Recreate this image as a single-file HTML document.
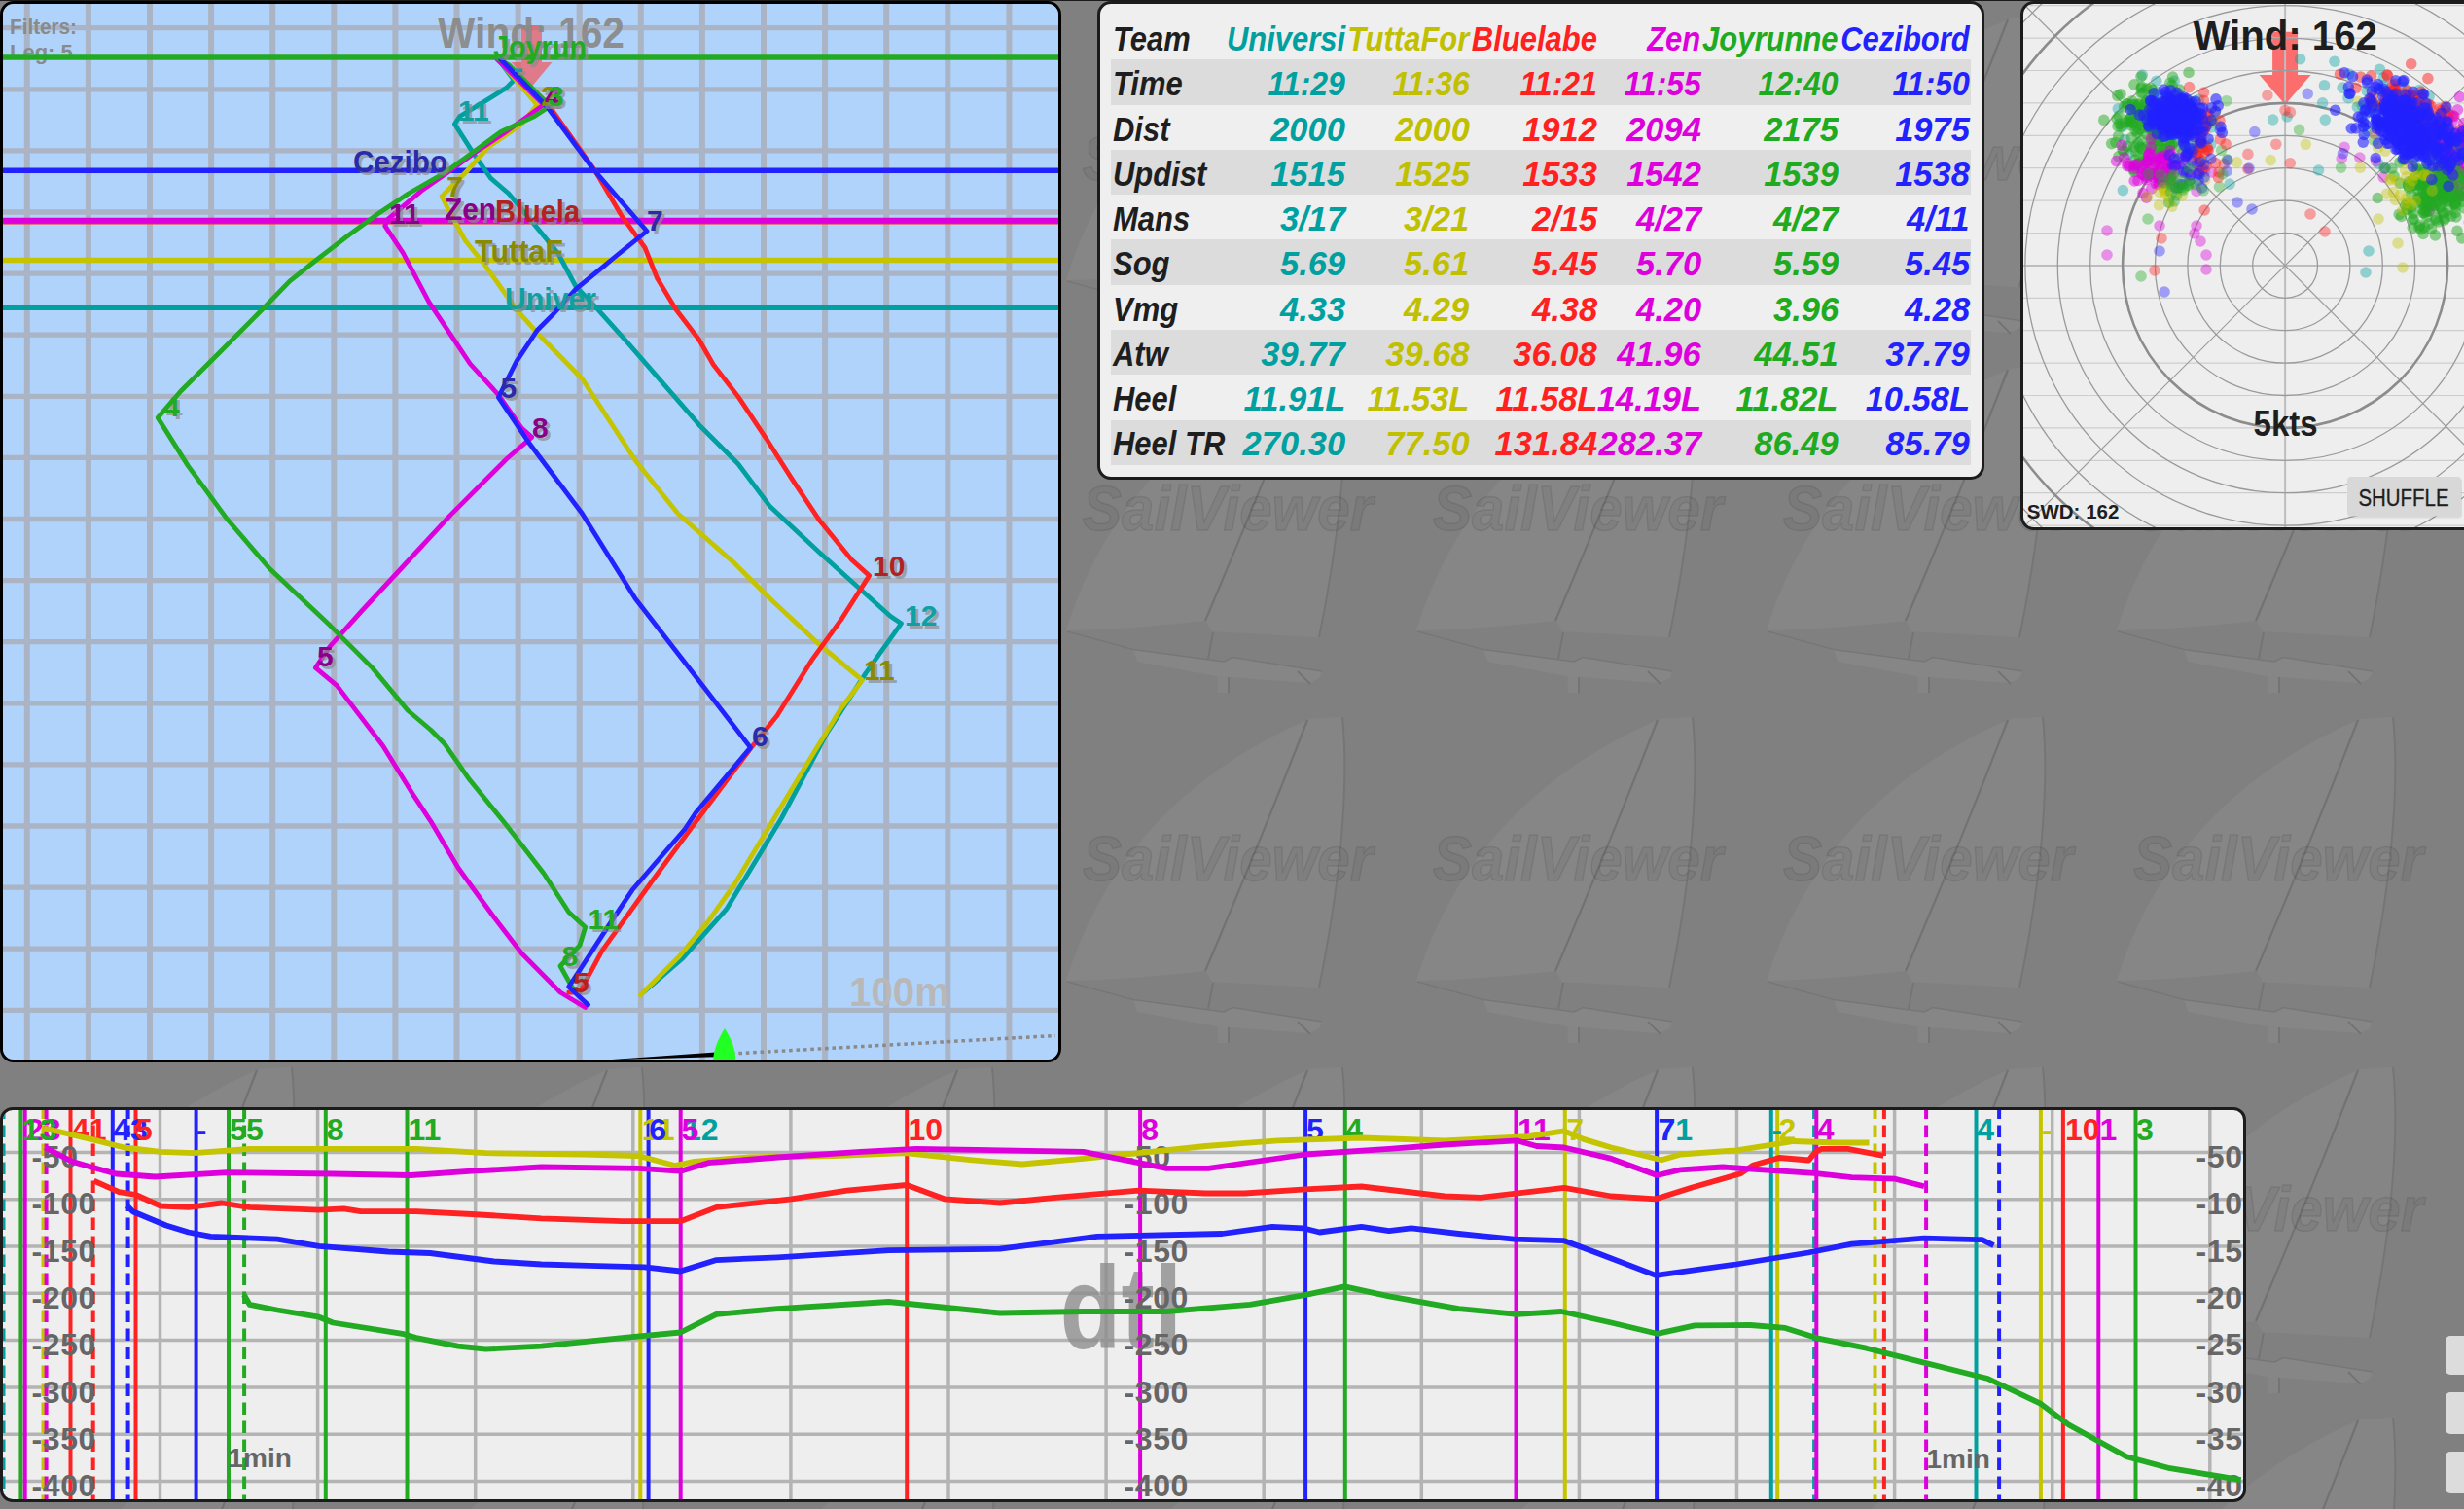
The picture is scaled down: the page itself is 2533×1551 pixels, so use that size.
<!DOCTYPE html>
<html><head><meta charset="utf-8"><style>
html,body{margin:0;padding:0;width:2533px;height:1551px;overflow:hidden;background:#808080;font-family:"Liberation Sans", sans-serif}
.bg{position:absolute;left:0;top:0}
.tt{position:absolute;white-space:nowrap;font-size:35px;line-height:35px;font-weight:bold;font-style:italic}
</style></head><body>
<svg class="bg" width="2533" height="1551" viewBox="0 0 2533 1551">
<defs><pattern id="sv" patternUnits="userSpaceOnUse" x="14" y="17" width="360" height="360">
<path d="M2,271 C40,150 120,60 250,3 Q205,120 145,261 C100,266 50,270 2,271 Z" fill="#868686"/>
<path d="M250,3 Q205,120 145,261" stroke="#727272" stroke-width="2.2" fill="none"/>
<path d="M252,2 L286,0 C291,50 290,140 262,278 L152,272 L146,262 Q206,120 252,2 Z" fill="#858585"/>
<path d="M286,0 C291,50 290,140 262,278" stroke="#757575" stroke-width="2" fill="none"/>
<path d="M153,273 L148,300" stroke="#747474" stroke-width="2" fill="none"/>
<path d="M71,290.5 L164,303 L173,298.5 L265,313 L262,320 L252,325 L157,318 L75.5,303 Z" fill="#868686"/>
<path d="M3,272 L71,290.5 L164,303 L173,298.5 L265,313" stroke="#767676" stroke-width="1.6" fill="none"/>
<path d="M157.5,318 h12 v17 h-12 Z" fill="#858585"/><path d="M169,319 v16" stroke="#727272" stroke-width="1.8"/>
<path d="M240,313 L253,326" stroke="#727272" stroke-width="1.8"/>
<text x="19" y="167.5" font-family='"Liberation Sans", sans-serif' font-weight="bold" font-style="italic" font-size="64" fill="#000" fill-opacity="0.045" stroke="#000" stroke-opacity="0.09" stroke-width="1.5" textLength="298" lengthAdjust="spacingAndGlyphs">SailViewer</text>
</pattern></defs>
<rect width="2533" height="1551" fill="#808080"/>
<rect width="2533" height="1551" fill="url(#sv)"/>
</svg>
<div style="position:absolute;left:0;top:1px;width:1091px;height:1091px;box-sizing:border-box;border:3px solid #000;border-radius:14px;overflow:hidden">
<div style="position:absolute;left:-3px;top:-4px"><svg width="1091" height="1092" viewBox="0 0 1091 1092" font-family='"Liberation Sans", sans-serif' font-weight="bold">
<rect width="1091" height="1092" fill="#b0d3fb"/>
<path d="M0,28.7H1091M0,91.8H1091M0,154.9H1091M0,218.0H1091M0,281.1H1091M0,344.2H1091M0,407.3H1091M0,470.4H1091M0,533.5H1091M0,596.6H1091M0,659.7H1091M0,722.8H1091M0,785.9H1091M0,849.0H1091M0,912.1H1091M0,975.2H1091M0,1038.3H1091M0,1101.4H1091" stroke="#aab4c4" stroke-width="5.3" fill="none"/>
<path d="M27.8,0V1092M90.9,0V1092M154.0,0V1092M217.1,0V1092M280.2,0V1092M343.3,0V1092M406.4,0V1092M469.5,0V1092M532.6,0V1092M595.7,0V1092M658.8,0V1092M721.9,0V1092M785.0,0V1092M848.1,0V1092M911.2,0V1092M974.3,0V1092M1037.4,0V1092M1100.5,0V1092" stroke="#aab4c4" stroke-width="6" fill="none"/>
<text x="10" y="34.7" font-size="22" fill="#8a8a8a" textLength="69" lengthAdjust="spacingAndGlyphs">Filters:</text>
<text x="10" y="60.8" font-size="22" fill="#8a8a8a">Leg: 5</text>
<path d="M536,26 H557 V64 H567.5 L547,88.5 L525.5,64 H536 Z" fill="#ff4040" fill-opacity="0.6"/>
<text x="450" y="48.7" font-size="44" fill="#8a8a8a" fill-opacity="0.95" textLength="192" lengthAdjust="spacingAndGlyphs">Wind: 162</text>
<path d="M0,59.1H1091" stroke="#22aa22" stroke-width="5.5"/>
<path d="M0,175.2H1091" stroke="#2222ff" stroke-width="5.5"/>
<path d="M0,227.7H1091" stroke="#ff2222" stroke-width="5.5"/>
<path d="M0,226.4H1091" stroke="#dd00dd" stroke-width="5.5"/>
<path d="M0,267.4H1091" stroke="#c4c400" stroke-width="5.5"/>
<path d="M0,316.2H1091" stroke="#00a0a0" stroke-width="5.5"/>
<polyline points="512.4,61.2 528.3,82.4 520.4,90.4 499.2,103.6 472.7,119.5 467.4,127.5 486.0,156.6 504.5,183.1 523.0,199.0 549.5,230.9 573.4,260.0 592.0,294.5 613.0,316.4 645.8,352.9 718.7,436.7 758.8,476.8 791.6,520.6 842.6,568.0 879.0,600.7 915.5,633.5 926.4,640.8 890.0,691.9 849.9,753.8 803.4,841.0 746.6,934.7 701.0,985.8 661.4,1020.0" stroke="#00a0a0" stroke-width="4.8" fill="none" stroke-linejoin="round" stroke-linecap="round"/>
<polyline points="512.0,61.0 552.2,107.6 536.3,127.5 501.8,151.3 480.6,175.2 454.1,201.7 459.4,212.3 478.0,246.8 499.2,273.3 531.0,318.3 554.8,344.8 598.4,389.3 653.1,473.2 696.8,527.8 755.1,578.9 791.6,615.3 842.6,662.7 886.4,699.2 864.5,728.3 835.3,775.7 797.7,838.0 755.0,909.0 726.7,948.9 698.3,983.0 658.5,1022.7" stroke="#c4c400" stroke-width="4.8" fill="none" stroke-linejoin="round" stroke-linecap="round"/>
<polyline points="515.0,61.0 562.8,106.3 612.0,176.0 639.6,222.7 663.0,254.5 675.7,286.3 694.8,318.0 718.7,349.3 733.3,374.8 758.8,407.6 788.0,451.3 813.5,491.4 842.6,535.1 875.4,575.2 893.6,591.6 864.5,637.2 835.3,677.3 798.9,735.6 772.2,768.5 718.0,841.0 670.0,906.0 618.8,977.3 596.0,1020.0 584.7,1020.0" stroke="#ff2222" stroke-width="4.8" fill="none" stroke-linejoin="round" stroke-linecap="round"/>
<polyline points="511.0,61.0 558.8,107.6 520.4,135.4 488.6,156.6 459.4,177.8 432.9,196.4 398.4,225.6 395.8,232.2 414.3,260.0 440.9,310.4 467.4,350.1 483.3,374.0 512.4,405.8 536.3,440.0 546.7,449.4 521.2,471.3 462.9,529.6 419.1,577.0 371.8,628.0 339.0,664.5 324.4,686.3 346.3,704.6 393.6,766.5 425.6,818.2 442.6,843.8 471.0,892.0 508.0,943.0 536.4,980.0 576.0,1020.0 601.7,1035.5" stroke="#dd00dd" stroke-width="4.8" fill="none" stroke-linejoin="round" stroke-linecap="round"/>
<polyline points="511.0,60.0 523.0,66.5 565.4,109.0 549.5,119.5 515.0,135.4 486.0,156.6 456.8,177.8 419.7,199.0 387.8,220.3 358.7,241.5 324.2,268.0 297.7,289.2 269.7,318.0 226.0,362.0 185.9,402.0 162.2,429.4 193.2,478.6 233.3,533.3 277.0,584.3 339.0,642.6 382.7,686.4 419.0,730.0 442.6,750.0 456.8,764.2 482.4,801.1 519.3,846.6 559.0,897.7 584.7,937.5 601.7,953.0 596.0,971.6 576.0,993.0 584.7,1008.5 590.0,1018.0" stroke="#22aa22" stroke-width="4.8" fill="none" stroke-linejoin="round" stroke-linecap="round"/>
<polyline points="515.0,61.2 562.8,110.2 610.0,174.0 650.0,220.3 665.0,237.5 631.0,265.0 621.0,273.3 592.0,297.1 568.0,323.6 552.2,339.5 531.0,371.3 512.4,408.5 543.7,455.0 598.4,527.8 653.1,615.3 704.1,681.0 771.5,768.4 715.3,835.2 704.0,852.3 650.0,914.8 627.3,948.9 596.0,997.0 584.7,1014.2 604.5,1032.7" stroke="#2222ff" stroke-width="4.8" fill="none" stroke-linejoin="round" stroke-linecap="round"/>
<text x="510" y="61.7" font-size="31" fill="#8c8c8c" fill-opacity="0.7" textLength="96" lengthAdjust="spacingAndGlyphs">Joyrun</text><text x="507" y="58.7" font-size="31" fill="#22aa22" textLength="96" lengthAdjust="spacingAndGlyphs">Joyrun</text>
<text x="366" y="179.5" font-size="31" fill="#8c8c8c" fill-opacity="0.7" textLength="97" lengthAdjust="spacingAndGlyphs">Cezibo</text><text x="363" y="176.5" font-size="31" fill="#2a2aaa" textLength="97" lengthAdjust="spacingAndGlyphs">Cezibo</text>
<text x="512" y="231" font-size="31" fill="#8c8c8c" fill-opacity="0.7" textLength="87" lengthAdjust="spacingAndGlyphs">Bluela</text><text x="509" y="228" font-size="31" fill="#b22222" textLength="87" lengthAdjust="spacingAndGlyphs">Bluela</text>
<text x="460" y="228.6" font-size="31" fill="#8c8c8c" fill-opacity="0.7" textLength="53" lengthAdjust="spacingAndGlyphs">Zen</text><text x="457" y="225.6" font-size="31" fill="#8a008a" textLength="53" lengthAdjust="spacingAndGlyphs">Zen</text>
<text x="491" y="272.3" font-size="31" fill="#8c8c8c" fill-opacity="0.7" textLength="91" lengthAdjust="spacingAndGlyphs">TuttaF</text><text x="488" y="269.3" font-size="31" fill="#8a8a00" textLength="91" lengthAdjust="spacingAndGlyphs">TuttaF</text>
<text x="522" y="321.3" font-size="31" fill="#8c8c8c" fill-opacity="0.7" textLength="94" lengthAdjust="spacingAndGlyphs">Univer</text><text x="519" y="318.3" font-size="31" fill="#10a0a0" textLength="94" lengthAdjust="spacingAndGlyphs">Univer</text>
<text x="474" y="126.5" font-size="30" fill="#8c8c8c" fill-opacity="0.7">11</text><text x="471" y="123.5" font-size="30" fill="#10a0a0">11</text>
<text x="559" y="112" font-size="30" fill="#8c8c8c" fill-opacity="0.7">2</text><text x="556" y="109" font-size="30" fill="#8a8a00">2</text>
<text x="563" y="112" font-size="30" fill="#8c8c8c" fill-opacity="0.7">4</text><text x="560" y="109" font-size="30" fill="#8a008a">4</text>
<text x="566" y="112" font-size="30" fill="#8c8c8c" fill-opacity="0.7">3</text><text x="563" y="109" font-size="30" fill="#22aa22">3</text>
<text x="531" y="83" font-size="30" fill="#8c8c8c" fill-opacity="0.7">-</text><text x="528" y="80" font-size="30" fill="#10a0a0">-</text>
<text x="462" y="204.7" font-size="30" fill="#8c8c8c" fill-opacity="0.7">7</text><text x="459" y="201.7" font-size="30" fill="#8a8a00">7</text>
<text x="403" y="232.5" font-size="30" fill="#8c8c8c" fill-opacity="0.7">11</text><text x="400" y="229.5" font-size="30" fill="#8a008a">11</text>
<text x="668" y="240.4" font-size="30" fill="#8c8c8c" fill-opacity="0.7">7</text><text x="665" y="237.4" font-size="30" fill="#2a2aaa">7</text>
<text x="171" y="430.6" font-size="30" fill="#8c8c8c" fill-opacity="0.7">4</text><text x="168" y="427.6" font-size="30" fill="#22aa22">4</text>
<text x="517.6" y="412.4" font-size="30" fill="#8c8c8c" fill-opacity="0.7">5</text><text x="514.6" y="409.4" font-size="30" fill="#2a2aaa">5</text>
<text x="550" y="452.5" font-size="30" fill="#8c8c8c" fill-opacity="0.7">8</text><text x="547" y="449.5" font-size="30" fill="#8a008a">8</text>
<text x="329" y="687.5" font-size="30" fill="#8c8c8c" fill-opacity="0.7">5</text><text x="326" y="684.5" font-size="30" fill="#8a008a">5</text>
<text x="900" y="594.6" font-size="30" fill="#8c8c8c" fill-opacity="0.7">10</text><text x="897" y="591.6" font-size="30" fill="#b22222">10</text>
<text x="933" y="645.7" font-size="30" fill="#8c8c8c" fill-opacity="0.7">12</text><text x="930" y="642.7" font-size="30" fill="#10a0a0">12</text>
<text x="891" y="702" font-size="30" fill="#8c8c8c" fill-opacity="0.7">11</text><text x="888" y="699" font-size="30" fill="#8a8a00">11</text>
<text x="776" y="769.6" font-size="30" fill="#8c8c8c" fill-opacity="0.7">6</text><text x="773" y="766.6" font-size="30" fill="#2a2aaa">6</text>
<text x="607.5" y="957.5" font-size="30" fill="#8c8c8c" fill-opacity="0.7">11</text><text x="604.5" y="954.5" font-size="30" fill="#22aa22">11</text>
<text x="580.6" y="996" font-size="30" fill="#8c8c8c" fill-opacity="0.7">8</text><text x="577.6" y="993" font-size="30" fill="#22aa22">8</text>
<text x="592" y="1023" font-size="30" fill="#8c8c8c" fill-opacity="0.7">5</text><text x="589" y="1020" font-size="30" fill="#b22222">5</text>
<text x="873" y="1034" font-size="42" fill="#b8b8b8" textLength="103" lengthAdjust="spacingAndGlyphs">100m</text>
<path d="M752,1083 L1085,1064.5" stroke="#8a8a8a" stroke-width="3.5" stroke-dasharray="3.6,3.8" fill="none"/>
<path d="M622,1089.5 L743,1081 L744,1086 Z" fill="#000"/>
<path d="M745,1057 C752,1068 757,1080 756,1092 L733,1092 C733,1080 738,1068 745,1057 Z" fill="#22ff22"/>
</svg></div>
</div>
<div style="position:absolute;left:1128px;top:1px;width:906px;height:486px;border:3px solid #1c1c1c;border-radius:14px;background:#efefef;overflow:hidden">
<div style="position:absolute;left:11.400000000000091px;top:57.4px;width:883.3px;height:46.3px;background:#dcdcdc"></div>
<div style="position:absolute;left:11.400000000000091px;top:149.9px;width:883.3px;height:46.3px;background:#dcdcdc"></div>
<div style="position:absolute;left:11.400000000000091px;top:242.4px;width:883.3px;height:46.3px;background:#dcdcdc"></div>
<div style="position:absolute;left:11.400000000000091px;top:335.0px;width:883.3px;height:46.3px;background:#dcdcdc"></div>
<div style="position:absolute;left:11.400000000000091px;top:427.5px;width:883.3px;height:46.3px;background:#dcdcdc"></div>
<div class="tt" style="left:13.0px;top:18.0px;color:#1e1e1e;transform-origin:0 0;transform:scaleX(0.885)">Team</div>
<div class="tt" style="right:654.0px;top:18.0px;color:#00a0a0;transform-origin:100% 0;transform:scaleX(0.885)">Universi</div>
<div class="tt" style="right:526.4px;top:18.0px;color:#c0c000;transform-origin:100% 0;transform:scaleX(0.885)">TuttaFor</div>
<div class="tt" style="right:395.0px;top:18.0px;color:#ff2020;transform-origin:100% 0;transform:scaleX(0.885)">Bluelabe</div>
<div class="tt" style="right:288.3px;top:18.0px;color:#dd00dd;transform-origin:100% 0;transform:scaleX(0.885)">Zen</div>
<div class="tt" style="right:147.3px;top:18.0px;color:#20aa20;transform-origin:100% 0;transform:scaleX(0.885)">Joyrunne</div>
<div class="tt" style="right:12.3px;top:18.0px;color:#2222ff;transform-origin:100% 0;transform:scaleX(0.885)">Cezibord</div>
<div class="tt" style="left:13.0px;top:64.2px;color:#1e1e1e;transform-origin:0 0;transform:scaleX(0.885)">Time</div>
<div class="tt" style="right:654.0px;top:64.2px;color:#00a0a0;transform-origin:100% 0;transform:scaleX(0.915)">11:29</div>
<div class="tt" style="right:526.4px;top:64.2px;color:#c0c000;transform-origin:100% 0;transform:scaleX(0.915)">11:36</div>
<div class="tt" style="right:395.0px;top:64.2px;color:#ff2020;transform-origin:100% 0;transform:scaleX(0.915)">11:21</div>
<div class="tt" style="right:288.3px;top:64.2px;color:#dd00dd;transform-origin:100% 0;transform:scaleX(0.915)">11:55</div>
<div class="tt" style="right:147.3px;top:64.2px;color:#20aa20;transform-origin:100% 0;transform:scaleX(0.915)">12:40</div>
<div class="tt" style="right:12.3px;top:64.2px;color:#2222ff;transform-origin:100% 0;transform:scaleX(0.915)">11:50</div>
<div class="tt" style="left:13.0px;top:110.5px;color:#1e1e1e;transform-origin:0 0;transform:scaleX(0.885)">Dist</div>
<div class="tt" style="right:654.0px;top:110.5px;color:#00a0a0;transform-origin:100% 0;transform:scaleX(0.985)">2000</div>
<div class="tt" style="right:526.4px;top:110.5px;color:#c0c000;transform-origin:100% 0;transform:scaleX(0.985)">2000</div>
<div class="tt" style="right:395.0px;top:110.5px;color:#ff2020;transform-origin:100% 0;transform:scaleX(0.985)">1912</div>
<div class="tt" style="right:288.3px;top:110.5px;color:#dd00dd;transform-origin:100% 0;transform:scaleX(0.985)">2094</div>
<div class="tt" style="right:147.3px;top:110.5px;color:#20aa20;transform-origin:100% 0;transform:scaleX(0.985)">2175</div>
<div class="tt" style="right:12.3px;top:110.5px;color:#2222ff;transform-origin:100% 0;transform:scaleX(0.985)">1975</div>
<div class="tt" style="left:13.0px;top:156.8px;color:#1e1e1e;transform-origin:0 0;transform:scaleX(0.885)">Updist</div>
<div class="tt" style="right:654.0px;top:156.8px;color:#00a0a0;transform-origin:100% 0;transform:scaleX(0.985)">1515</div>
<div class="tt" style="right:526.4px;top:156.8px;color:#c0c000;transform-origin:100% 0;transform:scaleX(0.985)">1525</div>
<div class="tt" style="right:395.0px;top:156.8px;color:#ff2020;transform-origin:100% 0;transform:scaleX(0.985)">1533</div>
<div class="tt" style="right:288.3px;top:156.8px;color:#dd00dd;transform-origin:100% 0;transform:scaleX(0.985)">1542</div>
<div class="tt" style="right:147.3px;top:156.8px;color:#20aa20;transform-origin:100% 0;transform:scaleX(0.985)">1539</div>
<div class="tt" style="right:12.3px;top:156.8px;color:#2222ff;transform-origin:100% 0;transform:scaleX(0.985)">1538</div>
<div class="tt" style="left:13.0px;top:203.0px;color:#1e1e1e;transform-origin:0 0;transform:scaleX(0.885)">Mans</div>
<div class="tt" style="right:654.0px;top:203.0px;color:#00a0a0;transform-origin:100% 0;transform:scaleX(0.985)">3/17</div>
<div class="tt" style="right:526.4px;top:203.0px;color:#c0c000;transform-origin:100% 0;transform:scaleX(0.985)">3/21</div>
<div class="tt" style="right:395.0px;top:203.0px;color:#ff2020;transform-origin:100% 0;transform:scaleX(0.985)">2/15</div>
<div class="tt" style="right:288.3px;top:203.0px;color:#dd00dd;transform-origin:100% 0;transform:scaleX(0.985)">4/27</div>
<div class="tt" style="right:147.3px;top:203.0px;color:#20aa20;transform-origin:100% 0;transform:scaleX(0.985)">4/27</div>
<div class="tt" style="right:12.3px;top:203.0px;color:#2222ff;transform-origin:100% 0;transform:scaleX(0.985)">4/11</div>
<div class="tt" style="left:13.0px;top:249.3px;color:#1e1e1e;transform-origin:0 0;transform:scaleX(0.885)">Sog</div>
<div class="tt" style="right:654.0px;top:249.3px;color:#00a0a0;transform-origin:100% 0;transform:scaleX(0.985)">5.69</div>
<div class="tt" style="right:526.4px;top:249.3px;color:#c0c000;transform-origin:100% 0;transform:scaleX(0.985)">5.61</div>
<div class="tt" style="right:395.0px;top:249.3px;color:#ff2020;transform-origin:100% 0;transform:scaleX(0.985)">5.45</div>
<div class="tt" style="right:288.3px;top:249.3px;color:#dd00dd;transform-origin:100% 0;transform:scaleX(0.985)">5.70</div>
<div class="tt" style="right:147.3px;top:249.3px;color:#20aa20;transform-origin:100% 0;transform:scaleX(0.985)">5.59</div>
<div class="tt" style="right:12.3px;top:249.3px;color:#2222ff;transform-origin:100% 0;transform:scaleX(0.985)">5.45</div>
<div class="tt" style="left:13.0px;top:295.5px;color:#1e1e1e;transform-origin:0 0;transform:scaleX(0.885)">Vmg</div>
<div class="tt" style="right:654.0px;top:295.5px;color:#00a0a0;transform-origin:100% 0;transform:scaleX(0.985)">4.33</div>
<div class="tt" style="right:526.4px;top:295.5px;color:#c0c000;transform-origin:100% 0;transform:scaleX(0.985)">4.29</div>
<div class="tt" style="right:395.0px;top:295.5px;color:#ff2020;transform-origin:100% 0;transform:scaleX(0.985)">4.38</div>
<div class="tt" style="right:288.3px;top:295.5px;color:#dd00dd;transform-origin:100% 0;transform:scaleX(0.985)">4.20</div>
<div class="tt" style="right:147.3px;top:295.5px;color:#20aa20;transform-origin:100% 0;transform:scaleX(0.985)">3.96</div>
<div class="tt" style="right:12.3px;top:295.5px;color:#2222ff;transform-origin:100% 0;transform:scaleX(0.985)">4.28</div>
<div class="tt" style="left:13.0px;top:341.8px;color:#1e1e1e;transform-origin:0 0;transform:scaleX(0.885)">Atw</div>
<div class="tt" style="right:654.0px;top:341.8px;color:#00a0a0;transform-origin:100% 0;transform:scaleX(0.985)">39.77</div>
<div class="tt" style="right:526.4px;top:341.8px;color:#c0c000;transform-origin:100% 0;transform:scaleX(0.985)">39.68</div>
<div class="tt" style="right:395.0px;top:341.8px;color:#ff2020;transform-origin:100% 0;transform:scaleX(0.985)">36.08</div>
<div class="tt" style="right:288.3px;top:341.8px;color:#dd00dd;transform-origin:100% 0;transform:scaleX(0.985)">41.96</div>
<div class="tt" style="right:147.3px;top:341.8px;color:#20aa20;transform-origin:100% 0;transform:scaleX(0.985)">44.51</div>
<div class="tt" style="right:12.3px;top:341.8px;color:#2222ff;transform-origin:100% 0;transform:scaleX(0.985)">37.79</div>
<div class="tt" style="left:13.0px;top:388.1px;color:#1e1e1e;transform-origin:0 0;transform:scaleX(0.885)">Heel</div>
<div class="tt" style="right:654.0px;top:388.1px;color:#00a0a0;transform-origin:100% 0;transform:scaleX(0.985)">11.91L</div>
<div class="tt" style="right:526.4px;top:388.1px;color:#c0c000;transform-origin:100% 0;transform:scaleX(0.985)">11.53L</div>
<div class="tt" style="right:395.0px;top:388.1px;color:#ff2020;transform-origin:100% 0;transform:scaleX(0.985)">11.58L</div>
<div class="tt" style="right:288.3px;top:388.1px;color:#dd00dd;transform-origin:100% 0;transform:scaleX(0.985)">14.19L</div>
<div class="tt" style="right:147.3px;top:388.1px;color:#20aa20;transform-origin:100% 0;transform:scaleX(0.985)">11.82L</div>
<div class="tt" style="right:12.3px;top:388.1px;color:#2222ff;transform-origin:100% 0;transform:scaleX(0.985)">10.58L</div>
<div class="tt" style="left:13.0px;top:434.3px;color:#1e1e1e;transform-origin:0 0;transform:scaleX(0.885)">Heel TR</div>
<div class="tt" style="right:654.0px;top:434.3px;color:#00a0a0;transform-origin:100% 0;transform:scaleX(0.985)">270.30</div>
<div class="tt" style="right:526.4px;top:434.3px;color:#c0c000;transform-origin:100% 0;transform:scaleX(0.985)">77.50</div>
<div class="tt" style="right:395.0px;top:434.3px;color:#ff2020;transform-origin:100% 0;transform:scaleX(0.985)">131.84</div>
<div class="tt" style="right:288.3px;top:434.3px;color:#dd00dd;transform-origin:100% 0;transform:scaleX(0.985)">282.37</div>
<div class="tt" style="right:147.3px;top:434.3px;color:#20aa20;transform-origin:100% 0;transform:scaleX(0.985)">86.49</div>
<div class="tt" style="right:12.3px;top:434.3px;color:#2222ff;transform-origin:100% 0;transform:scaleX(0.985)">85.79</div>
</div>
<div style="position:absolute;left:2077px;top:1px;width:476px;height:544px;box-sizing:border-box;border:3px solid #1c1c1c;border-radius:14px;background:#eeeeee;overflow:hidden">
<svg width="476" height="545" viewBox="3 4 476 545" style="position:absolute;left:0;top:0" font-family='"Liberation Sans", sans-serif'>
<path d="M259.0999999999999,32.7 H285.0999999999999 V77 H298.5999999999999 L272.0999999999999,107.6 L245.5999999999999,77 H259.0999999999999 Z" fill="#ff5050" fill-opacity="0.82"/>
<path d="M0,-27.7H476M0,5.7H476M0,39.1H476M0,72.5H476M0,105.9H476M0,139.3H476M0,172.7H476M0,206.1H476M0,239.5H476M0,272.9H476M0,306.3H476M0,339.7H476M0,373.1H476M0,406.5H476M0,439.9H476M0,473.3H476M0,506.7H476M0,540.1H476M0,573.5H476" stroke="#cdcdcd" stroke-width="1.2" fill="none"/>
<path d="M272.0999999999999,0V545M0,272.9H476" stroke="#bdbdbd" stroke-width="2"/>
<path d="M-127.90000000000009,-127.10000000000002L672.0999999999999,672.9M-127.90000000000009,672.9L672.0999999999999,-127.10000000000002" stroke="#9c9c9c" stroke-width="1.2"/>
<circle cx="272.0999999999999" cy="272.9" r="33.4" stroke="#9a9a9a" stroke-width="1.3" fill="none"/>
<circle cx="272.0999999999999" cy="272.9" r="66.8" stroke="#9a9a9a" stroke-width="1.3" fill="none"/>
<circle cx="272.0999999999999" cy="272.9" r="100.2" stroke="#9a9a9a" stroke-width="1.3" fill="none"/>
<circle cx="272.0999999999999" cy="272.9" r="133.6" stroke="#9a9a9a" stroke-width="1.3" fill="none"/>
<circle cx="272.0999999999999" cy="272.9" r="167.0" stroke="#8c8c8c" stroke-width="2.6" fill="none"/>
<circle cx="272.0999999999999" cy="272.9" r="200.4" stroke="#9a9a9a" stroke-width="1.3" fill="none"/>
<circle cx="272.0999999999999" cy="272.9" r="233.8" stroke="#9a9a9a" stroke-width="1.3" fill="none"/>
<circle cx="272.0999999999999" cy="272.9" r="267.2" stroke="#9a9a9a" stroke-width="1.3" fill="none"/>
<circle cx="272.0999999999999" cy="272.9" r="300.6" stroke="#9a9a9a" stroke-width="1.3" fill="none"/>
<circle cx="272.0999999999999" cy="272.9" r="334.0" stroke="#8c8c8c" stroke-width="2.6" fill="none"/>
<circle cx="272.0999999999999" cy="272.9" r="367.4" stroke="#9a9a9a" stroke-width="1.3" fill="none"/>
<g><circle cx="259.6" cy="123.0" r="5.8" fill="#00a0a0" fill-opacity="0.38"/><circle cx="367.8" cy="168.1" r="5.8" fill="#00a0a0" fill-opacity="0.38"/><circle cx="274.2" cy="120.0" r="5.8" fill="#00a0a0" fill-opacity="0.38"/><circle cx="195.7" cy="148.4" r="5.8" fill="#00a0a0" fill-opacity="0.38"/><circle cx="310.6" cy="105.9" r="5.8" fill="#00a0a0" fill-opacity="0.38"/><circle cx="189.3" cy="176.2" r="5.8" fill="#00a0a0" fill-opacity="0.38"/><circle cx="158.8" cy="142.3" r="5.8" fill="#00a0a0" fill-opacity="0.38"/><circle cx="306.5" cy="175.0" r="5.8" fill="#00a0a0" fill-opacity="0.38"/><circle cx="411.4" cy="148.4" r="5.8" fill="#00a0a0" fill-opacity="0.38"/><circle cx="313.3" cy="123.1" r="5.8" fill="#00a0a0" fill-opacity="0.38"/><circle cx="215.1" cy="189.1" r="5.8" fill="#00a0a0" fill-opacity="0.38"/><circle cx="277.3" cy="167.7" r="5.8" fill="#ff2222" fill-opacity="0.38"/><circle cx="209.4" cy="168.5" r="5.8" fill="#ff2222" fill-opacity="0.38"/><circle cx="168.4" cy="176.2" r="5.8" fill="#ff2222" fill-opacity="0.38"/><circle cx="253.9" cy="98.0" r="5.8" fill="#ff2222" fill-opacity="0.38"/><circle cx="277.4" cy="115.4" r="5.8" fill="#ff2222" fill-opacity="0.38"/><circle cx="272.0" cy="113.3" r="5.8" fill="#ff2222" fill-opacity="0.38"/><circle cx="262.8" cy="148.2" r="5.8" fill="#ff2222" fill-opacity="0.38"/><circle cx="416.9" cy="150.4" r="5.8" fill="#ff2222" fill-opacity="0.38"/><circle cx="363.7" cy="137.2" r="5.8" fill="#ff2222" fill-opacity="0.38"/><circle cx="233.9" cy="158.4" r="5.8" fill="#ff2222" fill-opacity="0.38"/><circle cx="233.8" cy="173.7" r="5.8" fill="#ff2222" fill-opacity="0.38"/><circle cx="333.1" cy="151.3" r="5.8" fill="#dd00dd" fill-opacity="0.38"/><circle cx="348.8" cy="162.0" r="5.8" fill="#dd00dd" fill-opacity="0.38"/><circle cx="398.5" cy="150.0" r="5.8" fill="#dd00dd" fill-opacity="0.38"/><circle cx="181.1" cy="196.4" r="5.8" fill="#dd00dd" fill-opacity="0.38"/><circle cx="365.5" cy="165.6" r="5.8" fill="#dd00dd" fill-opacity="0.38"/><circle cx="373.1" cy="182.1" r="5.8" fill="#dd00dd" fill-opacity="0.38"/><circle cx="165.9" cy="157.8" r="5.8" fill="#dd00dd" fill-opacity="0.38"/><circle cx="330.2" cy="163.0" r="5.8" fill="#dd00dd" fill-opacity="0.38"/><circle cx="186.4" cy="175.3" r="5.8" fill="#dd00dd" fill-opacity="0.38"/><circle cx="393.9" cy="156.9" r="5.8" fill="#dd00dd" fill-opacity="0.38"/><circle cx="196.5" cy="176.9" r="5.8" fill="#dd00dd" fill-opacity="0.38"/><circle cx="204.5" cy="192.0" r="5.8" fill="#22aa22" fill-opacity="0.38"/><circle cx="329.6" cy="172.1" r="5.8" fill="#22aa22" fill-opacity="0.38"/><circle cx="286.6" cy="133.4" r="5.8" fill="#22aa22" fill-opacity="0.38"/><circle cx="186.8" cy="130.6" r="5.8" fill="#22aa22" fill-opacity="0.38"/><circle cx="177.3" cy="146.6" r="5.8" fill="#22aa22" fill-opacity="0.38"/><circle cx="186.6" cy="164.8" r="5.8" fill="#22aa22" fill-opacity="0.38"/><circle cx="212.4" cy="163.9" r="5.8" fill="#22aa22" fill-opacity="0.38"/><circle cx="398.3" cy="155.6" r="5.8" fill="#22aa22" fill-opacity="0.38"/><circle cx="211.9" cy="103.7" r="5.8" fill="#22aa22" fill-opacity="0.38"/><circle cx="206.6" cy="154.3" r="5.8" fill="#22aa22" fill-opacity="0.38"/><circle cx="363.6" cy="144.4" r="5.8" fill="#22aa22" fill-opacity="0.38"/><circle cx="150.7" cy="128.0" r="5.8" fill="#2222ff" fill-opacity="0.38"/><circle cx="213.0" cy="164.8" r="5.8" fill="#2222ff" fill-opacity="0.38"/><circle cx="331.5" cy="157.7" r="5.8" fill="#2222ff" fill-opacity="0.38"/><circle cx="235.0" cy="173.0" r="5.8" fill="#2222ff" fill-opacity="0.38"/><circle cx="172.1" cy="157.8" r="5.8" fill="#2222ff" fill-opacity="0.38"/><circle cx="205.3" cy="134.0" r="5.8" fill="#2222ff" fill-opacity="0.38"/><circle cx="240.8" cy="135.6" r="5.8" fill="#2222ff" fill-opacity="0.38"/><circle cx="375.2" cy="173.0" r="5.8" fill="#2222ff" fill-opacity="0.38"/><circle cx="295.2" cy="96.4" r="5.8" fill="#2222ff" fill-opacity="0.38"/><circle cx="212.2" cy="176.0" r="5.8" fill="#2222ff" fill-opacity="0.38"/><circle cx="385.6" cy="141.6" r="5.8" fill="#2222ff" fill-opacity="0.38"/><circle cx="222.5" cy="166.8" r="5.8" fill="#c4c400" fill-opacity="0.38"/><circle cx="347.0" cy="104.2" r="5.8" fill="#c4c400" fill-opacity="0.38"/><circle cx="178.4" cy="112.8" r="5.8" fill="#c4c400" fill-opacity="0.38"/><circle cx="367.6" cy="151.7" r="5.8" fill="#c4c400" fill-opacity="0.38"/><circle cx="257.2" cy="164.6" r="5.8" fill="#c4c400" fill-opacity="0.38"/><circle cx="137.5" cy="143.6" r="5.8" fill="#c4c400" fill-opacity="0.38"/><circle cx="200.1" cy="126.2" r="5.8" fill="#c4c400" fill-opacity="0.38"/><circle cx="200.4" cy="114.2" r="5.8" fill="#c4c400" fill-opacity="0.38"/><circle cx="293.3" cy="148.3" r="5.8" fill="#c4c400" fill-opacity="0.38"/><circle cx="183.6" cy="133.8" r="5.8" fill="#c4c400" fill-opacity="0.38"/><circle cx="189.7" cy="184.9" r="5.8" fill="#c4c400" fill-opacity="0.38"/><circle cx="89.0" cy="237.0" r="5.8" fill="#dd00dd" fill-opacity="0.4"/><circle cx="89.0" cy="262.0" r="5.8" fill="#dd00dd" fill-opacity="0.4"/><circle cx="124.0" cy="284.0" r="5.8" fill="#22aa22" fill-opacity="0.4"/><circle cx="138.0" cy="278.0" r="5.8" fill="#ff2222" fill-opacity="0.4"/><circle cx="148.0" cy="300.0" r="5.8" fill="#2222ff" fill-opacity="0.4"/><circle cx="143.0" cy="258.0" r="5.8" fill="#2222ff" fill-opacity="0.4"/><circle cx="145.0" cy="245.0" r="5.8" fill="#ff2222" fill-opacity="0.4"/><circle cx="143.0" cy="232.0" r="5.8" fill="#dd00dd" fill-opacity="0.4"/><circle cx="131.0" cy="225.0" r="5.8" fill="#22aa22" fill-opacity="0.4"/><circle cx="181.0" cy="232.0" r="5.8" fill="#dd00dd" fill-opacity="0.4"/><circle cx="185.0" cy="248.0" r="5.8" fill="#dd00dd" fill-opacity="0.4"/><circle cx="191.0" cy="262.0" r="5.8" fill="#dd00dd" fill-opacity="0.4"/><circle cx="191.0" cy="277.0" r="5.8" fill="#dd00dd" fill-opacity="0.4"/><circle cx="179.0" cy="240.0" r="5.8" fill="#dd00dd" fill-opacity="0.4"/><circle cx="223.0" cy="208.0" r="5.8" fill="#2222ff" fill-opacity="0.4"/><circle cx="238.0" cy="215.0" r="5.8" fill="#2222ff" fill-opacity="0.4"/><circle cx="298.0" cy="220.0" r="5.8" fill="#ff2222" fill-opacity="0.4"/><circle cx="313.0" cy="238.0" r="5.8" fill="#ff2222" fill-opacity="0.4"/><circle cx="358.0" cy="258.0" r="5.8" fill="#00a0a0" fill-opacity="0.4"/><circle cx="368.0" cy="225.0" r="5.8" fill="#c4c400" fill-opacity="0.4"/><circle cx="388.0" cy="250.0" r="5.8" fill="#c4c400" fill-opacity="0.4"/><circle cx="393.0" cy="275.0" r="5.8" fill="#c4c400" fill-opacity="0.4"/><circle cx="355.0" cy="280.0" r="5.8" fill="#00a0a0" fill-opacity="0.4"/><circle cx="100.3" cy="111.7" r="5.8" fill="#00a0a0" fill-opacity="0.4"/><circle cx="129.3" cy="115.3" r="5.8" fill="#00a0a0" fill-opacity="0.4"/><circle cx="158.1" cy="119.3" r="5.8" fill="#00a0a0" fill-opacity="0.4"/><circle cx="162.9" cy="127.6" r="5.8" fill="#00a0a0" fill-opacity="0.4"/><circle cx="136.0" cy="128.4" r="5.8" fill="#00a0a0" fill-opacity="0.4"/><circle cx="154.3" cy="143.2" r="5.8" fill="#00a0a0" fill-opacity="0.4"/><circle cx="132.5" cy="121.3" r="5.8" fill="#00a0a0" fill-opacity="0.4"/><circle cx="111.3" cy="158.1" r="5.8" fill="#00a0a0" fill-opacity="0.4"/><circle cx="178.8" cy="122.4" r="5.8" fill="#00a0a0" fill-opacity="0.4"/><circle cx="132.5" cy="101.3" r="5.8" fill="#00a0a0" fill-opacity="0.4"/><circle cx="148.1" cy="130.1" r="5.8" fill="#00a0a0" fill-opacity="0.4"/><circle cx="196.4" cy="130.9" r="5.8" fill="#00a0a0" fill-opacity="0.4"/><circle cx="125.3" cy="77.1" r="5.8" fill="#00a0a0" fill-opacity="0.4"/><circle cx="177.8" cy="129.8" r="5.8" fill="#00a0a0" fill-opacity="0.4"/><circle cx="105.4" cy="129.6" r="5.8" fill="#00a0a0" fill-opacity="0.4"/><circle cx="105.4" cy="195.6" r="5.8" fill="#00a0a0" fill-opacity="0.4"/><circle cx="170.9" cy="137.4" r="5.8" fill="#00a0a0" fill-opacity="0.4"/><circle cx="139.8" cy="83.2" r="5.8" fill="#00a0a0" fill-opacity="0.4"/><circle cx="141.0" cy="94.9" r="5.8" fill="#00a0a0" fill-opacity="0.4"/><circle cx="158.3" cy="83.2" r="5.8" fill="#00a0a0" fill-opacity="0.4"/><circle cx="122.2" cy="150.4" r="5.8" fill="#00a0a0" fill-opacity="0.4"/><circle cx="183.5" cy="102.4" r="5.8" fill="#00a0a0" fill-opacity="0.4"/><circle cx="107.2" cy="143.6" r="5.8" fill="#00a0a0" fill-opacity="0.4"/><circle cx="164.5" cy="106.3" r="5.8" fill="#00a0a0" fill-opacity="0.4"/><circle cx="127.3" cy="112.1" r="5.8" fill="#00a0a0" fill-opacity="0.4"/><circle cx="115.5" cy="112.4" r="5.8" fill="#00a0a0" fill-opacity="0.4"/><circle cx="174.0" cy="139.8" r="5.8" fill="#00a0a0" fill-opacity="0.4"/><circle cx="193.4" cy="124.3" r="5.8" fill="#00a0a0" fill-opacity="0.4"/><circle cx="140.8" cy="106.4" r="5.8" fill="#00a0a0" fill-opacity="0.4"/><circle cx="141.0" cy="99.7" r="5.8" fill="#00a0a0" fill-opacity="0.4"/><circle cx="97.9" cy="146.3" r="5.8" fill="#22aa22" fill-opacity="0.5"/><circle cx="168.7" cy="149.4" r="5.8" fill="#22aa22" fill-opacity="0.5"/><circle cx="166.3" cy="136.6" r="5.8" fill="#22aa22" fill-opacity="0.5"/><circle cx="121.2" cy="132.9" r="5.8" fill="#22aa22" fill-opacity="0.5"/><circle cx="128.8" cy="106.5" r="5.8" fill="#22aa22" fill-opacity="0.5"/><circle cx="99.8" cy="98.4" r="5.8" fill="#22aa22" fill-opacity="0.5"/><circle cx="136.9" cy="134.3" r="5.8" fill="#22aa22" fill-opacity="0.5"/><circle cx="126.6" cy="162.4" r="5.8" fill="#22aa22" fill-opacity="0.5"/><circle cx="140.9" cy="143.8" r="5.8" fill="#22aa22" fill-opacity="0.5"/><circle cx="163.8" cy="113.0" r="5.8" fill="#22aa22" fill-opacity="0.5"/><circle cx="93.7" cy="147.6" r="5.8" fill="#22aa22" fill-opacity="0.5"/><circle cx="121.9" cy="159.8" r="5.8" fill="#22aa22" fill-opacity="0.5"/><circle cx="144.4" cy="153.1" r="5.8" fill="#22aa22" fill-opacity="0.5"/><circle cx="153.8" cy="85.2" r="5.8" fill="#22aa22" fill-opacity="0.5"/><circle cx="152.8" cy="116.2" r="5.8" fill="#22aa22" fill-opacity="0.5"/><circle cx="120.4" cy="121.4" r="5.8" fill="#22aa22" fill-opacity="0.5"/><circle cx="153.9" cy="150.5" r="5.8" fill="#22aa22" fill-opacity="0.5"/><circle cx="159.2" cy="94.5" r="5.8" fill="#22aa22" fill-opacity="0.5"/><circle cx="124.0" cy="78.7" r="5.8" fill="#22aa22" fill-opacity="0.5"/><circle cx="134.8" cy="144.2" r="5.8" fill="#22aa22" fill-opacity="0.5"/><circle cx="120.2" cy="136.4" r="5.8" fill="#22aa22" fill-opacity="0.5"/><circle cx="142.1" cy="153.2" r="5.8" fill="#22aa22" fill-opacity="0.5"/><circle cx="118.9" cy="112.8" r="5.8" fill="#22aa22" fill-opacity="0.5"/><circle cx="120.2" cy="169.6" r="5.8" fill="#22aa22" fill-opacity="0.5"/><circle cx="161.0" cy="128.3" r="5.8" fill="#22aa22" fill-opacity="0.5"/><circle cx="142.0" cy="133.5" r="5.8" fill="#22aa22" fill-opacity="0.5"/><circle cx="141.5" cy="126.4" r="5.8" fill="#22aa22" fill-opacity="0.5"/><circle cx="129.6" cy="103.4" r="5.8" fill="#22aa22" fill-opacity="0.5"/><circle cx="122.9" cy="167.3" r="5.8" fill="#22aa22" fill-opacity="0.5"/><circle cx="148.8" cy="132.4" r="5.8" fill="#22aa22" fill-opacity="0.5"/><circle cx="132.3" cy="132.4" r="5.8" fill="#22aa22" fill-opacity="0.5"/><circle cx="144.8" cy="116.8" r="5.8" fill="#22aa22" fill-opacity="0.5"/><circle cx="141.3" cy="136.3" r="5.8" fill="#22aa22" fill-opacity="0.5"/><circle cx="120.5" cy="113.6" r="5.8" fill="#22aa22" fill-opacity="0.5"/><circle cx="115.0" cy="107.6" r="5.8" fill="#22aa22" fill-opacity="0.5"/><circle cx="156.6" cy="79.1" r="5.8" fill="#22aa22" fill-opacity="0.5"/><circle cx="131.1" cy="117.6" r="5.8" fill="#22aa22" fill-opacity="0.5"/><circle cx="123.4" cy="133.1" r="5.8" fill="#22aa22" fill-opacity="0.5"/><circle cx="161.8" cy="132.7" r="5.8" fill="#22aa22" fill-opacity="0.5"/><circle cx="133.9" cy="117.5" r="5.8" fill="#22aa22" fill-opacity="0.5"/><circle cx="134.2" cy="151.1" r="5.8" fill="#22aa22" fill-opacity="0.5"/><circle cx="128.3" cy="105.8" r="5.8" fill="#22aa22" fill-opacity="0.5"/><circle cx="109.2" cy="106.7" r="5.8" fill="#22aa22" fill-opacity="0.5"/><circle cx="106.4" cy="155.2" r="5.8" fill="#22aa22" fill-opacity="0.5"/><circle cx="144.8" cy="125.8" r="5.8" fill="#22aa22" fill-opacity="0.5"/><circle cx="169.1" cy="116.5" r="5.8" fill="#22aa22" fill-opacity="0.5"/><circle cx="153.6" cy="148.6" r="5.8" fill="#22aa22" fill-opacity="0.5"/><circle cx="103.0" cy="96.7" r="5.8" fill="#22aa22" fill-opacity="0.5"/><circle cx="116.6" cy="150.9" r="5.8" fill="#22aa22" fill-opacity="0.5"/><circle cx="165.5" cy="104.0" r="5.8" fill="#22aa22" fill-opacity="0.5"/><circle cx="160.1" cy="122.6" r="5.8" fill="#22aa22" fill-opacity="0.5"/><circle cx="128.3" cy="118.9" r="5.8" fill="#22aa22" fill-opacity="0.5"/><circle cx="129.9" cy="91.0" r="5.8" fill="#22aa22" fill-opacity="0.5"/><circle cx="115.0" cy="103.8" r="5.8" fill="#22aa22" fill-opacity="0.5"/><circle cx="147.8" cy="177.0" r="5.8" fill="#22aa22" fill-opacity="0.5"/><circle cx="197.1" cy="123.6" r="5.8" fill="#22aa22" fill-opacity="0.5"/><circle cx="99.1" cy="122.0" r="5.8" fill="#22aa22" fill-opacity="0.5"/><circle cx="116.3" cy="174.6" r="5.8" fill="#22aa22" fill-opacity="0.5"/><circle cx="149.6" cy="115.0" r="5.8" fill="#22aa22" fill-opacity="0.5"/><circle cx="157.6" cy="142.8" r="5.8" fill="#22aa22" fill-opacity="0.5"/><circle cx="101.2" cy="119.3" r="5.8" fill="#22aa22" fill-opacity="0.5"/><circle cx="131.7" cy="131.4" r="5.8" fill="#22aa22" fill-opacity="0.5"/><circle cx="139.9" cy="123.5" r="5.8" fill="#22aa22" fill-opacity="0.5"/><circle cx="141.2" cy="118.1" r="5.8" fill="#22aa22" fill-opacity="0.5"/><circle cx="117.3" cy="164.3" r="5.8" fill="#22aa22" fill-opacity="0.5"/><circle cx="144.9" cy="140.6" r="5.8" fill="#22aa22" fill-opacity="0.5"/><circle cx="101.9" cy="127.3" r="5.8" fill="#22aa22" fill-opacity="0.5"/><circle cx="155.0" cy="102.6" r="5.8" fill="#22aa22" fill-opacity="0.5"/><circle cx="161.2" cy="122.4" r="5.8" fill="#22aa22" fill-opacity="0.5"/><circle cx="145.9" cy="128.1" r="5.8" fill="#22aa22" fill-opacity="0.5"/><circle cx="141.8" cy="157.5" r="5.8" fill="#22aa22" fill-opacity="0.5"/><circle cx="128.1" cy="165.4" r="5.8" fill="#22aa22" fill-opacity="0.5"/><circle cx="119.8" cy="110.5" r="5.8" fill="#22aa22" fill-opacity="0.5"/><circle cx="152.6" cy="107.5" r="5.8" fill="#22aa22" fill-opacity="0.5"/><circle cx="128.9" cy="151.0" r="5.8" fill="#22aa22" fill-opacity="0.5"/><circle cx="163.6" cy="92.0" r="5.8" fill="#22aa22" fill-opacity="0.5"/><circle cx="148.1" cy="172.4" r="5.8" fill="#22aa22" fill-opacity="0.5"/><circle cx="163.3" cy="125.7" r="5.8" fill="#22aa22" fill-opacity="0.5"/><circle cx="123.8" cy="124.5" r="5.8" fill="#22aa22" fill-opacity="0.5"/><circle cx="111.6" cy="125.2" r="5.8" fill="#22aa22" fill-opacity="0.5"/><circle cx="132.9" cy="127.8" r="5.8" fill="#22aa22" fill-opacity="0.5"/><circle cx="163.0" cy="125.9" r="5.8" fill="#22aa22" fill-opacity="0.5"/><circle cx="104.9" cy="154.1" r="5.8" fill="#22aa22" fill-opacity="0.5"/><circle cx="113.4" cy="121.2" r="5.8" fill="#22aa22" fill-opacity="0.5"/><circle cx="134.1" cy="123.4" r="5.8" fill="#22aa22" fill-opacity="0.5"/><circle cx="114.9" cy="125.5" r="5.8" fill="#22aa22" fill-opacity="0.5"/><circle cx="185.1" cy="117.6" r="5.8" fill="#22aa22" fill-opacity="0.5"/><circle cx="134.0" cy="155.7" r="5.8" fill="#22aa22" fill-opacity="0.5"/><circle cx="153.4" cy="147.8" r="5.8" fill="#22aa22" fill-opacity="0.5"/><circle cx="156.0" cy="87.7" r="5.8" fill="#22aa22" fill-opacity="0.5"/><circle cx="118.0" cy="133.8" r="5.8" fill="#22aa22" fill-opacity="0.5"/><circle cx="148.0" cy="159.5" r="5.8" fill="#22aa22" fill-opacity="0.5"/><circle cx="147.3" cy="125.8" r="5.8" fill="#22aa22" fill-opacity="0.5"/><circle cx="137.9" cy="126.4" r="5.8" fill="#22aa22" fill-opacity="0.5"/><circle cx="142.4" cy="145.8" r="5.8" fill="#22aa22" fill-opacity="0.5"/><circle cx="129.5" cy="113.1" r="5.8" fill="#22aa22" fill-opacity="0.5"/><circle cx="118.2" cy="155.1" r="5.8" fill="#22aa22" fill-opacity="0.5"/><circle cx="165.2" cy="152.8" r="5.8" fill="#22aa22" fill-opacity="0.5"/><circle cx="155.9" cy="149.3" r="5.8" fill="#22aa22" fill-opacity="0.5"/><circle cx="136.9" cy="145.6" r="5.8" fill="#22aa22" fill-opacity="0.5"/><circle cx="113.9" cy="126.5" r="5.8" fill="#22aa22" fill-opacity="0.5"/><circle cx="120.9" cy="147.0" r="5.8" fill="#22aa22" fill-opacity="0.5"/><circle cx="124.2" cy="128.6" r="5.8" fill="#22aa22" fill-opacity="0.5"/><circle cx="145.8" cy="160.8" r="5.8" fill="#22aa22" fill-opacity="0.5"/><circle cx="119.6" cy="110.3" r="5.8" fill="#22aa22" fill-opacity="0.5"/><circle cx="155.0" cy="106.7" r="5.8" fill="#22aa22" fill-opacity="0.5"/><circle cx="147.0" cy="118.5" r="5.8" fill="#22aa22" fill-opacity="0.5"/><circle cx="134.7" cy="90.9" r="5.8" fill="#22aa22" fill-opacity="0.5"/><circle cx="152.7" cy="120.0" r="5.8" fill="#22aa22" fill-opacity="0.5"/><circle cx="117.2" cy="176.7" r="5.8" fill="#22aa22" fill-opacity="0.5"/><circle cx="152.7" cy="208.2" r="5.8" fill="#22aa22" fill-opacity="0.5"/><circle cx="146.0" cy="123.3" r="5.8" fill="#22aa22" fill-opacity="0.5"/><circle cx="139.4" cy="166.4" r="5.8" fill="#22aa22" fill-opacity="0.5"/><circle cx="136.4" cy="140.9" r="5.8" fill="#22aa22" fill-opacity="0.5"/><circle cx="148.4" cy="111.0" r="5.8" fill="#22aa22" fill-opacity="0.5"/><circle cx="139.8" cy="119.9" r="5.8" fill="#22aa22" fill-opacity="0.5"/><circle cx="109.6" cy="150.2" r="5.8" fill="#22aa22" fill-opacity="0.5"/><circle cx="151.6" cy="132.6" r="5.8" fill="#22aa22" fill-opacity="0.5"/><circle cx="117.0" cy="86.9" r="5.8" fill="#22aa22" fill-opacity="0.5"/><circle cx="147.7" cy="128.8" r="5.8" fill="#22aa22" fill-opacity="0.5"/><circle cx="100.0" cy="129.7" r="5.8" fill="#22aa22" fill-opacity="0.5"/><circle cx="103.5" cy="130.4" r="5.8" fill="#22aa22" fill-opacity="0.5"/><circle cx="140.1" cy="138.8" r="5.8" fill="#22aa22" fill-opacity="0.5"/><circle cx="141.8" cy="134.8" r="5.8" fill="#22aa22" fill-opacity="0.5"/><circle cx="111.9" cy="122.6" r="5.8" fill="#22aa22" fill-opacity="0.5"/><circle cx="125.8" cy="125.8" r="5.8" fill="#22aa22" fill-opacity="0.5"/><circle cx="142.9" cy="144.6" r="5.8" fill="#22aa22" fill-opacity="0.5"/><circle cx="173.0" cy="74.5" r="5.8" fill="#22aa22" fill-opacity="0.5"/><circle cx="145.8" cy="126.6" r="5.8" fill="#22aa22" fill-opacity="0.5"/><circle cx="187.1" cy="151.5" r="5.8" fill="#22aa22" fill-opacity="0.5"/><circle cx="100.6" cy="139.8" r="5.8" fill="#22aa22" fill-opacity="0.5"/><circle cx="125.5" cy="152.9" r="5.8" fill="#22aa22" fill-opacity="0.5"/><circle cx="113.8" cy="128.8" r="5.8" fill="#22aa22" fill-opacity="0.5"/><circle cx="134.1" cy="128.9" r="5.8" fill="#22aa22" fill-opacity="0.5"/><circle cx="124.2" cy="90.6" r="5.8" fill="#22aa22" fill-opacity="0.5"/><circle cx="147.1" cy="153.0" r="5.8" fill="#22aa22" fill-opacity="0.5"/><circle cx="135.5" cy="108.6" r="5.8" fill="#22aa22" fill-opacity="0.5"/><circle cx="141.5" cy="143.4" r="5.8" fill="#22aa22" fill-opacity="0.5"/><circle cx="133.1" cy="130.7" r="5.8" fill="#22aa22" fill-opacity="0.5"/><circle cx="168.0" cy="106.4" r="5.8" fill="#22aa22" fill-opacity="0.5"/><circle cx="124.7" cy="89.1" r="5.8" fill="#22aa22" fill-opacity="0.5"/><circle cx="121.6" cy="114.7" r="5.8" fill="#22aa22" fill-opacity="0.5"/><circle cx="115.9" cy="115.7" r="5.8" fill="#22aa22" fill-opacity="0.5"/><circle cx="176.5" cy="126.7" r="5.8" fill="#22aa22" fill-opacity="0.5"/><circle cx="134.5" cy="179.4" r="5.8" fill="#22aa22" fill-opacity="0.5"/><circle cx="135.7" cy="92.9" r="5.8" fill="#22aa22" fill-opacity="0.5"/><circle cx="145.9" cy="110.4" r="5.8" fill="#22aa22" fill-opacity="0.5"/><circle cx="173.1" cy="103.6" r="5.8" fill="#22aa22" fill-opacity="0.5"/><circle cx="124.2" cy="95.7" r="5.8" fill="#22aa22" fill-opacity="0.5"/><circle cx="139.1" cy="108.7" r="5.8" fill="#22aa22" fill-opacity="0.5"/><circle cx="135.6" cy="122.7" r="5.8" fill="#22aa22" fill-opacity="0.5"/><circle cx="123.5" cy="151.8" r="5.8" fill="#22aa22" fill-opacity="0.5"/><circle cx="157.6" cy="132.4" r="5.8" fill="#22aa22" fill-opacity="0.5"/><circle cx="117.2" cy="107.4" r="5.8" fill="#22aa22" fill-opacity="0.5"/><circle cx="142.9" cy="183.6" r="5.8" fill="#22aa22" fill-opacity="0.5"/><circle cx="127.0" cy="113.7" r="5.8" fill="#22aa22" fill-opacity="0.5"/><circle cx="121.7" cy="106.9" r="5.8" fill="#22aa22" fill-opacity="0.5"/><circle cx="115.6" cy="126.5" r="5.8" fill="#22aa22" fill-opacity="0.5"/><circle cx="168.5" cy="131.0" r="5.8" fill="#22aa22" fill-opacity="0.5"/><circle cx="125.8" cy="95.5" r="5.8" fill="#22aa22" fill-opacity="0.5"/><circle cx="141.7" cy="130.4" r="5.8" fill="#22aa22" fill-opacity="0.5"/><circle cx="110.0" cy="107.1" r="5.8" fill="#22aa22" fill-opacity="0.5"/><circle cx="136.1" cy="153.3" r="5.8" fill="#22aa22" fill-opacity="0.5"/><circle cx="150.8" cy="135.5" r="5.8" fill="#22aa22" fill-opacity="0.5"/><circle cx="129.9" cy="138.1" r="5.8" fill="#22aa22" fill-opacity="0.5"/><circle cx="136.7" cy="178.8" r="5.8" fill="#22aa22" fill-opacity="0.5"/><circle cx="112.1" cy="122.9" r="5.8" fill="#22aa22" fill-opacity="0.5"/><circle cx="164.9" cy="125.2" r="5.8" fill="#22aa22" fill-opacity="0.5"/><circle cx="168.3" cy="130.0" r="5.8" fill="#22aa22" fill-opacity="0.5"/><circle cx="140.2" cy="122.8" r="5.8" fill="#22aa22" fill-opacity="0.5"/><circle cx="106.6" cy="109.6" r="5.8" fill="#22aa22" fill-opacity="0.5"/><circle cx="185.7" cy="145.2" r="5.8" fill="#22aa22" fill-opacity="0.5"/><circle cx="150.3" cy="152.0" r="5.8" fill="#22aa22" fill-opacity="0.5"/><circle cx="149.5" cy="153.5" r="5.8" fill="#22aa22" fill-opacity="0.5"/><circle cx="131.1" cy="126.1" r="5.8" fill="#22aa22" fill-opacity="0.5"/><circle cx="158.6" cy="123.3" r="5.8" fill="#22aa22" fill-opacity="0.5"/><circle cx="107.7" cy="126.0" r="5.8" fill="#22aa22" fill-opacity="0.5"/><circle cx="125.0" cy="144.5" r="5.8" fill="#22aa22" fill-opacity="0.5"/><circle cx="121.2" cy="107.7" r="5.8" fill="#22aa22" fill-opacity="0.5"/><circle cx="129.7" cy="165.2" r="5.8" fill="#22aa22" fill-opacity="0.5"/><circle cx="135.9" cy="134.5" r="5.8" fill="#22aa22" fill-opacity="0.5"/><circle cx="137.2" cy="137.5" r="5.8" fill="#22aa22" fill-opacity="0.5"/><circle cx="157.4" cy="161.7" r="5.8" fill="#22aa22" fill-opacity="0.5"/><circle cx="100.8" cy="160.9" r="5.8" fill="#22aa22" fill-opacity="0.5"/><circle cx="136.9" cy="123.9" r="5.8" fill="#22aa22" fill-opacity="0.5"/><circle cx="189.8" cy="127.3" r="5.8" fill="#22aa22" fill-opacity="0.5"/><circle cx="179.8" cy="152.3" r="5.8" fill="#22aa22" fill-opacity="0.5"/><circle cx="114.3" cy="141.7" r="5.8" fill="#22aa22" fill-opacity="0.5"/><circle cx="153.2" cy="128.2" r="5.8" fill="#22aa22" fill-opacity="0.5"/><circle cx="85.8" cy="123.4" r="5.8" fill="#22aa22" fill-opacity="0.5"/><circle cx="187.3" cy="122.4" r="5.8" fill="#ff2222" fill-opacity="0.45"/><circle cx="205.4" cy="143.1" r="5.8" fill="#ff2222" fill-opacity="0.45"/><circle cx="185.5" cy="141.8" r="5.8" fill="#ff2222" fill-opacity="0.45"/><circle cx="181.9" cy="130.4" r="5.8" fill="#ff2222" fill-opacity="0.45"/><circle cx="189.8" cy="156.5" r="5.8" fill="#ff2222" fill-opacity="0.45"/><circle cx="184.4" cy="146.8" r="5.8" fill="#ff2222" fill-opacity="0.45"/><circle cx="176.5" cy="161.5" r="5.8" fill="#ff2222" fill-opacity="0.45"/><circle cx="182.3" cy="154.2" r="5.8" fill="#ff2222" fill-opacity="0.45"/><circle cx="180.8" cy="136.6" r="5.8" fill="#ff2222" fill-opacity="0.45"/><circle cx="190.9" cy="119.9" r="5.8" fill="#ff2222" fill-opacity="0.45"/><circle cx="211.2" cy="148.1" r="5.8" fill="#ff2222" fill-opacity="0.45"/><circle cx="188.3" cy="131.4" r="5.8" fill="#ff2222" fill-opacity="0.45"/><circle cx="203.4" cy="182.3" r="5.8" fill="#ff2222" fill-opacity="0.45"/><circle cx="191.7" cy="116.2" r="5.8" fill="#ff2222" fill-opacity="0.45"/><circle cx="184.5" cy="163.8" r="5.8" fill="#ff2222" fill-opacity="0.45"/><circle cx="184.4" cy="120.6" r="5.8" fill="#ff2222" fill-opacity="0.45"/><circle cx="178.3" cy="130.5" r="5.8" fill="#ff2222" fill-opacity="0.45"/><circle cx="189.1" cy="133.4" r="5.8" fill="#ff2222" fill-opacity="0.45"/><circle cx="189.2" cy="216.0" r="5.8" fill="#ff2222" fill-opacity="0.45"/><circle cx="205.0" cy="124.1" r="5.8" fill="#ff2222" fill-opacity="0.45"/><circle cx="192.1" cy="151.1" r="5.8" fill="#ff2222" fill-opacity="0.45"/><circle cx="187.8" cy="174.0" r="5.8" fill="#ff2222" fill-opacity="0.45"/><circle cx="186.0" cy="141.2" r="5.8" fill="#ff2222" fill-opacity="0.45"/><circle cx="185.6" cy="146.6" r="5.8" fill="#ff2222" fill-opacity="0.45"/><circle cx="200.6" cy="167.6" r="5.8" fill="#ff2222" fill-opacity="0.45"/><circle cx="176.9" cy="138.4" r="5.8" fill="#ff2222" fill-opacity="0.45"/><circle cx="181.8" cy="168.6" r="5.8" fill="#ff2222" fill-opacity="0.45"/><circle cx="191.0" cy="170.4" r="5.8" fill="#ff2222" fill-opacity="0.45"/><circle cx="188.4" cy="103.2" r="5.8" fill="#ff2222" fill-opacity="0.45"/><circle cx="193.1" cy="154.5" r="5.8" fill="#ff2222" fill-opacity="0.45"/><circle cx="193.6" cy="117.7" r="5.8" fill="#ff2222" fill-opacity="0.45"/><circle cx="189.7" cy="132.5" r="5.8" fill="#ff2222" fill-opacity="0.45"/><circle cx="182.8" cy="157.5" r="5.8" fill="#ff2222" fill-opacity="0.45"/><circle cx="192.2" cy="127.6" r="5.8" fill="#ff2222" fill-opacity="0.45"/><circle cx="173.6" cy="89.6" r="5.8" fill="#ff2222" fill-opacity="0.45"/><circle cx="183.8" cy="175.9" r="5.8" fill="#ff2222" fill-opacity="0.45"/><circle cx="188.5" cy="95.0" r="5.8" fill="#ff2222" fill-opacity="0.45"/><circle cx="181.2" cy="159.1" r="5.8" fill="#ff2222" fill-opacity="0.45"/><circle cx="204.1" cy="177.0" r="5.8" fill="#ff2222" fill-opacity="0.45"/><circle cx="192.3" cy="153.7" r="5.8" fill="#ff2222" fill-opacity="0.45"/><circle cx="120.1" cy="168.5" r="5.8" fill="#dd00dd" fill-opacity="0.5"/><circle cx="131.7" cy="165.3" r="5.8" fill="#dd00dd" fill-opacity="0.5"/><circle cx="138.0" cy="169.1" r="5.8" fill="#dd00dd" fill-opacity="0.5"/><circle cx="142.4" cy="187.3" r="5.8" fill="#dd00dd" fill-opacity="0.5"/><circle cx="148.9" cy="177.2" r="5.8" fill="#dd00dd" fill-opacity="0.5"/><circle cx="133.1" cy="157.8" r="5.8" fill="#dd00dd" fill-opacity="0.5"/><circle cx="135.2" cy="178.4" r="5.8" fill="#dd00dd" fill-opacity="0.5"/><circle cx="120.9" cy="185.5" r="5.8" fill="#dd00dd" fill-opacity="0.5"/><circle cx="131.7" cy="176.7" r="5.8" fill="#dd00dd" fill-opacity="0.5"/><circle cx="131.7" cy="160.4" r="5.8" fill="#dd00dd" fill-opacity="0.5"/><circle cx="170.1" cy="161.4" r="5.8" fill="#dd00dd" fill-opacity="0.5"/><circle cx="151.7" cy="167.4" r="5.8" fill="#dd00dd" fill-opacity="0.5"/><circle cx="141.5" cy="164.9" r="5.8" fill="#dd00dd" fill-opacity="0.5"/><circle cx="130.3" cy="182.2" r="5.8" fill="#dd00dd" fill-opacity="0.5"/><circle cx="168.1" cy="164.5" r="5.8" fill="#dd00dd" fill-opacity="0.5"/><circle cx="137.2" cy="182.5" r="5.8" fill="#dd00dd" fill-opacity="0.5"/><circle cx="126.9" cy="180.1" r="5.8" fill="#dd00dd" fill-opacity="0.5"/><circle cx="124.4" cy="179.0" r="5.8" fill="#dd00dd" fill-opacity="0.5"/><circle cx="144.0" cy="185.1" r="5.8" fill="#dd00dd" fill-opacity="0.5"/><circle cx="142.8" cy="161.1" r="5.8" fill="#dd00dd" fill-opacity="0.5"/><circle cx="147.6" cy="162.0" r="5.8" fill="#dd00dd" fill-opacity="0.5"/><circle cx="149.0" cy="188.1" r="5.8" fill="#dd00dd" fill-opacity="0.5"/><circle cx="146.5" cy="167.5" r="5.8" fill="#dd00dd" fill-opacity="0.5"/><circle cx="156.1" cy="174.7" r="5.8" fill="#dd00dd" fill-opacity="0.5"/><circle cx="117.1" cy="169.5" r="5.8" fill="#dd00dd" fill-opacity="0.5"/><circle cx="159.7" cy="170.0" r="5.8" fill="#dd00dd" fill-opacity="0.5"/><circle cx="138.9" cy="169.6" r="5.8" fill="#dd00dd" fill-opacity="0.5"/><circle cx="110.0" cy="167.9" r="5.8" fill="#dd00dd" fill-opacity="0.5"/><circle cx="142.7" cy="175.1" r="5.8" fill="#dd00dd" fill-opacity="0.5"/><circle cx="134.2" cy="151.7" r="5.8" fill="#dd00dd" fill-opacity="0.5"/><circle cx="156.6" cy="180.2" r="5.8" fill="#dd00dd" fill-opacity="0.5"/><circle cx="153.4" cy="186.0" r="5.8" fill="#dd00dd" fill-opacity="0.5"/><circle cx="129.9" cy="167.0" r="5.8" fill="#dd00dd" fill-opacity="0.5"/><circle cx="142.0" cy="189.7" r="5.8" fill="#dd00dd" fill-opacity="0.5"/><circle cx="110.0" cy="170.7" r="5.8" fill="#dd00dd" fill-opacity="0.5"/><circle cx="125.6" cy="178.6" r="5.8" fill="#dd00dd" fill-opacity="0.5"/><circle cx="160.4" cy="170.0" r="5.8" fill="#dd00dd" fill-opacity="0.5"/><circle cx="117.2" cy="173.5" r="5.8" fill="#dd00dd" fill-opacity="0.5"/><circle cx="132.4" cy="157.6" r="5.8" fill="#dd00dd" fill-opacity="0.5"/><circle cx="151.2" cy="167.8" r="5.8" fill="#dd00dd" fill-opacity="0.5"/><circle cx="147.9" cy="159.8" r="5.8" fill="#dd00dd" fill-opacity="0.5"/><circle cx="154.5" cy="158.6" r="5.8" fill="#dd00dd" fill-opacity="0.5"/><circle cx="153.9" cy="154.9" r="5.8" fill="#dd00dd" fill-opacity="0.5"/><circle cx="159.1" cy="169.3" r="5.8" fill="#dd00dd" fill-opacity="0.5"/><circle cx="112.1" cy="170.7" r="5.8" fill="#dd00dd" fill-opacity="0.5"/><circle cx="142.4" cy="163.1" r="5.8" fill="#dd00dd" fill-opacity="0.5"/><circle cx="129.1" cy="175.7" r="5.8" fill="#dd00dd" fill-opacity="0.5"/><circle cx="134.3" cy="142.3" r="5.8" fill="#dd00dd" fill-opacity="0.5"/><circle cx="130.1" cy="177.3" r="5.8" fill="#dd00dd" fill-opacity="0.5"/><circle cx="141.8" cy="183.1" r="5.8" fill="#dd00dd" fill-opacity="0.5"/><circle cx="126.0" cy="198.5" r="5.8" fill="#dd00dd" fill-opacity="0.5"/><circle cx="149.8" cy="176.1" r="5.8" fill="#dd00dd" fill-opacity="0.5"/><circle cx="154.4" cy="182.5" r="5.8" fill="#dd00dd" fill-opacity="0.5"/><circle cx="138.6" cy="166.8" r="5.8" fill="#dd00dd" fill-opacity="0.5"/><circle cx="153.4" cy="177.2" r="5.8" fill="#dd00dd" fill-opacity="0.5"/><circle cx="106.7" cy="162.0" r="5.8" fill="#dd00dd" fill-opacity="0.5"/><circle cx="144.5" cy="174.1" r="5.8" fill="#dd00dd" fill-opacity="0.5"/><circle cx="141.5" cy="179.4" r="5.8" fill="#dd00dd" fill-opacity="0.5"/><circle cx="139.3" cy="188.8" r="5.8" fill="#dd00dd" fill-opacity="0.5"/><circle cx="127.6" cy="169.0" r="5.8" fill="#dd00dd" fill-opacity="0.5"/><circle cx="142.2" cy="180.5" r="5.8" fill="#dd00dd" fill-opacity="0.5"/><circle cx="149.6" cy="187.9" r="5.8" fill="#dd00dd" fill-opacity="0.5"/><circle cx="129.4" cy="184.7" r="5.8" fill="#dd00dd" fill-opacity="0.5"/><circle cx="144.5" cy="162.6" r="5.8" fill="#dd00dd" fill-opacity="0.5"/><circle cx="134.8" cy="193.9" r="5.8" fill="#dd00dd" fill-opacity="0.5"/><circle cx="149.6" cy="168.3" r="5.8" fill="#dd00dd" fill-opacity="0.5"/><circle cx="98.6" cy="165.6" r="5.8" fill="#dd00dd" fill-opacity="0.5"/><circle cx="125.8" cy="173.8" r="5.8" fill="#dd00dd" fill-opacity="0.5"/><circle cx="174.0" cy="180.5" r="5.8" fill="#dd00dd" fill-opacity="0.5"/><circle cx="142.0" cy="163.7" r="5.8" fill="#dd00dd" fill-opacity="0.5"/><circle cx="118.0" cy="170.9" r="5.8" fill="#dd00dd" fill-opacity="0.5"/><circle cx="129.5" cy="203.1" r="5.8" fill="#dd00dd" fill-opacity="0.5"/><circle cx="130.5" cy="166.8" r="5.8" fill="#dd00dd" fill-opacity="0.5"/><circle cx="155.1" cy="173.8" r="5.8" fill="#dd00dd" fill-opacity="0.5"/><circle cx="117.2" cy="185.9" r="5.8" fill="#dd00dd" fill-opacity="0.5"/><circle cx="132.0" cy="159.7" r="5.8" fill="#dd00dd" fill-opacity="0.5"/><circle cx="142.1" cy="177.9" r="5.8" fill="#dd00dd" fill-opacity="0.5"/><circle cx="131.6" cy="180.0" r="5.8" fill="#dd00dd" fill-opacity="0.5"/><circle cx="150.1" cy="164.2" r="5.8" fill="#dd00dd" fill-opacity="0.5"/><circle cx="104.1" cy="149.1" r="5.8" fill="#dd00dd" fill-opacity="0.5"/><circle cx="142.5" cy="210.8" r="5.8" fill="#c4c400" fill-opacity="0.4"/><circle cx="156.0" cy="212.1" r="5.8" fill="#c4c400" fill-opacity="0.4"/><circle cx="166.3" cy="201.1" r="5.8" fill="#c4c400" fill-opacity="0.4"/><circle cx="156.7" cy="188.8" r="5.8" fill="#c4c400" fill-opacity="0.4"/><circle cx="152.3" cy="204.1" r="5.8" fill="#c4c400" fill-opacity="0.4"/><circle cx="142.9" cy="197.5" r="5.8" fill="#c4c400" fill-opacity="0.4"/><circle cx="130.6" cy="202.1" r="5.8" fill="#c4c400" fill-opacity="0.4"/><circle cx="159.3" cy="198.1" r="5.8" fill="#c4c400" fill-opacity="0.4"/><circle cx="150.4" cy="195.7" r="5.8" fill="#c4c400" fill-opacity="0.4"/><circle cx="147.0" cy="192.9" r="5.8" fill="#c4c400" fill-opacity="0.4"/><circle cx="148.5" cy="199.3" r="5.8" fill="#c4c400" fill-opacity="0.4"/><circle cx="147.8" cy="196.1" r="5.8" fill="#c4c400" fill-opacity="0.4"/><circle cx="144.4" cy="112.0" r="5.8" fill="#2222ff" fill-opacity="0.6"/><circle cx="172.8" cy="139.1" r="5.8" fill="#2222ff" fill-opacity="0.6"/><circle cx="154.5" cy="126.6" r="5.8" fill="#2222ff" fill-opacity="0.6"/><circle cx="171.3" cy="125.5" r="5.8" fill="#2222ff" fill-opacity="0.6"/><circle cx="137.5" cy="117.9" r="5.8" fill="#2222ff" fill-opacity="0.6"/><circle cx="144.2" cy="128.8" r="5.8" fill="#2222ff" fill-opacity="0.6"/><circle cx="171.2" cy="128.0" r="5.8" fill="#2222ff" fill-opacity="0.6"/><circle cx="122.4" cy="118.1" r="5.8" fill="#2222ff" fill-opacity="0.6"/><circle cx="174.1" cy="107.3" r="5.8" fill="#2222ff" fill-opacity="0.6"/><circle cx="175.1" cy="122.7" r="5.8" fill="#2222ff" fill-opacity="0.6"/><circle cx="159.9" cy="110.8" r="5.8" fill="#2222ff" fill-opacity="0.6"/><circle cx="147.0" cy="111.3" r="5.8" fill="#2222ff" fill-opacity="0.6"/><circle cx="205.9" cy="130.4" r="5.8" fill="#2222ff" fill-opacity="0.6"/><circle cx="165.5" cy="112.6" r="5.8" fill="#2222ff" fill-opacity="0.6"/><circle cx="153.1" cy="111.2" r="5.8" fill="#2222ff" fill-opacity="0.6"/><circle cx="146.1" cy="125.8" r="5.8" fill="#2222ff" fill-opacity="0.6"/><circle cx="155.1" cy="127.5" r="5.8" fill="#2222ff" fill-opacity="0.6"/><circle cx="142.0" cy="125.6" r="5.8" fill="#2222ff" fill-opacity="0.6"/><circle cx="159.1" cy="126.1" r="5.8" fill="#2222ff" fill-opacity="0.6"/><circle cx="161.4" cy="109.1" r="5.8" fill="#2222ff" fill-opacity="0.6"/><circle cx="179.7" cy="117.9" r="5.8" fill="#2222ff" fill-opacity="0.6"/><circle cx="160.8" cy="109.0" r="5.8" fill="#2222ff" fill-opacity="0.6"/><circle cx="164.9" cy="115.4" r="5.8" fill="#2222ff" fill-opacity="0.6"/><circle cx="164.4" cy="123.6" r="5.8" fill="#2222ff" fill-opacity="0.6"/><circle cx="154.0" cy="101.7" r="5.8" fill="#2222ff" fill-opacity="0.6"/><circle cx="165.4" cy="130.2" r="5.8" fill="#2222ff" fill-opacity="0.6"/><circle cx="173.7" cy="108.7" r="5.8" fill="#2222ff" fill-opacity="0.6"/><circle cx="169.1" cy="124.9" r="5.8" fill="#2222ff" fill-opacity="0.6"/><circle cx="164.2" cy="124.5" r="5.8" fill="#2222ff" fill-opacity="0.6"/><circle cx="155.8" cy="120.3" r="5.8" fill="#2222ff" fill-opacity="0.6"/><circle cx="175.7" cy="116.3" r="5.8" fill="#2222ff" fill-opacity="0.6"/><circle cx="140.1" cy="113.6" r="5.8" fill="#2222ff" fill-opacity="0.6"/><circle cx="167.9" cy="99.7" r="5.8" fill="#2222ff" fill-opacity="0.6"/><circle cx="149.8" cy="123.3" r="5.8" fill="#2222ff" fill-opacity="0.6"/><circle cx="158.6" cy="119.5" r="5.8" fill="#2222ff" fill-opacity="0.6"/><circle cx="140.5" cy="125.0" r="5.8" fill="#2222ff" fill-opacity="0.6"/><circle cx="187.2" cy="122.1" r="5.8" fill="#2222ff" fill-opacity="0.6"/><circle cx="152.8" cy="104.3" r="5.8" fill="#2222ff" fill-opacity="0.6"/><circle cx="173.9" cy="122.8" r="5.8" fill="#2222ff" fill-opacity="0.6"/><circle cx="146.7" cy="129.7" r="5.8" fill="#2222ff" fill-opacity="0.6"/><circle cx="170.9" cy="127.8" r="5.8" fill="#2222ff" fill-opacity="0.6"/><circle cx="135.4" cy="112.6" r="5.8" fill="#2222ff" fill-opacity="0.6"/><circle cx="172.9" cy="107.7" r="5.8" fill="#2222ff" fill-opacity="0.6"/><circle cx="171.5" cy="137.2" r="5.8" fill="#2222ff" fill-opacity="0.6"/><circle cx="177.8" cy="114.3" r="5.8" fill="#2222ff" fill-opacity="0.6"/><circle cx="148.5" cy="127.0" r="5.8" fill="#2222ff" fill-opacity="0.6"/><circle cx="172.9" cy="135.2" r="5.8" fill="#2222ff" fill-opacity="0.6"/><circle cx="178.9" cy="121.5" r="5.8" fill="#2222ff" fill-opacity="0.6"/><circle cx="159.0" cy="97.8" r="5.8" fill="#2222ff" fill-opacity="0.6"/><circle cx="167.6" cy="145.9" r="5.8" fill="#2222ff" fill-opacity="0.6"/><circle cx="155.2" cy="112.5" r="5.8" fill="#2222ff" fill-opacity="0.6"/><circle cx="169.7" cy="125.0" r="5.8" fill="#2222ff" fill-opacity="0.6"/><circle cx="142.4" cy="107.2" r="5.8" fill="#2222ff" fill-opacity="0.6"/><circle cx="140.4" cy="137.5" r="5.8" fill="#2222ff" fill-opacity="0.6"/><circle cx="148.6" cy="126.1" r="5.8" fill="#2222ff" fill-opacity="0.6"/><circle cx="185.1" cy="145.1" r="5.8" fill="#2222ff" fill-opacity="0.6"/><circle cx="178.4" cy="140.8" r="5.8" fill="#2222ff" fill-opacity="0.6"/><circle cx="143.6" cy="111.6" r="5.8" fill="#2222ff" fill-opacity="0.6"/><circle cx="150.9" cy="113.7" r="5.8" fill="#2222ff" fill-opacity="0.6"/><circle cx="203.2" cy="108.7" r="5.8" fill="#2222ff" fill-opacity="0.6"/><circle cx="171.9" cy="107.3" r="5.8" fill="#2222ff" fill-opacity="0.6"/><circle cx="177.8" cy="137.0" r="5.8" fill="#2222ff" fill-opacity="0.6"/><circle cx="149.0" cy="139.8" r="5.8" fill="#2222ff" fill-opacity="0.6"/><circle cx="159.3" cy="133.3" r="5.8" fill="#2222ff" fill-opacity="0.6"/><circle cx="166.8" cy="113.9" r="5.8" fill="#2222ff" fill-opacity="0.6"/><circle cx="155.7" cy="116.6" r="5.8" fill="#2222ff" fill-opacity="0.6"/><circle cx="169.8" cy="122.2" r="5.8" fill="#2222ff" fill-opacity="0.6"/><circle cx="196.1" cy="124.0" r="5.8" fill="#2222ff" fill-opacity="0.6"/><circle cx="155.7" cy="109.9" r="5.8" fill="#2222ff" fill-opacity="0.6"/><circle cx="152.7" cy="101.2" r="5.8" fill="#2222ff" fill-opacity="0.6"/><circle cx="144.5" cy="125.8" r="5.8" fill="#2222ff" fill-opacity="0.6"/><circle cx="162.3" cy="117.3" r="5.8" fill="#2222ff" fill-opacity="0.6"/><circle cx="163.8" cy="131.6" r="5.8" fill="#2222ff" fill-opacity="0.6"/><circle cx="168.4" cy="129.2" r="5.8" fill="#2222ff" fill-opacity="0.6"/><circle cx="153.3" cy="114.5" r="5.8" fill="#2222ff" fill-opacity="0.6"/><circle cx="149.8" cy="115.6" r="5.8" fill="#2222ff" fill-opacity="0.6"/><circle cx="149.8" cy="112.5" r="5.8" fill="#2222ff" fill-opacity="0.6"/><circle cx="158.9" cy="116.2" r="5.8" fill="#2222ff" fill-opacity="0.6"/><circle cx="158.2" cy="112.9" r="5.8" fill="#2222ff" fill-opacity="0.6"/><circle cx="181.0" cy="119.2" r="5.8" fill="#2222ff" fill-opacity="0.6"/><circle cx="145.7" cy="118.1" r="5.8" fill="#2222ff" fill-opacity="0.6"/><circle cx="147.3" cy="104.2" r="5.8" fill="#2222ff" fill-opacity="0.6"/><circle cx="165.9" cy="101.3" r="5.8" fill="#2222ff" fill-opacity="0.6"/><circle cx="113.0" cy="112.5" r="5.8" fill="#2222ff" fill-opacity="0.6"/><circle cx="179.9" cy="104.1" r="5.8" fill="#2222ff" fill-opacity="0.6"/><circle cx="146.5" cy="122.5" r="5.8" fill="#2222ff" fill-opacity="0.6"/><circle cx="133.7" cy="103.7" r="5.8" fill="#2222ff" fill-opacity="0.6"/><circle cx="143.7" cy="113.3" r="5.8" fill="#2222ff" fill-opacity="0.6"/><circle cx="130.0" cy="122.8" r="5.8" fill="#2222ff" fill-opacity="0.6"/><circle cx="158.2" cy="121.8" r="5.8" fill="#2222ff" fill-opacity="0.6"/><circle cx="160.8" cy="95.2" r="5.8" fill="#2222ff" fill-opacity="0.6"/><circle cx="161.7" cy="104.1" r="5.8" fill="#2222ff" fill-opacity="0.6"/><circle cx="163.0" cy="109.8" r="5.8" fill="#2222ff" fill-opacity="0.6"/><circle cx="156.8" cy="115.8" r="5.8" fill="#2222ff" fill-opacity="0.6"/><circle cx="170.7" cy="129.6" r="5.8" fill="#2222ff" fill-opacity="0.6"/><circle cx="146.3" cy="115.8" r="5.8" fill="#2222ff" fill-opacity="0.6"/><circle cx="181.4" cy="128.7" r="5.8" fill="#2222ff" fill-opacity="0.6"/><circle cx="150.5" cy="115.5" r="5.8" fill="#2222ff" fill-opacity="0.6"/><circle cx="153.8" cy="128.1" r="5.8" fill="#2222ff" fill-opacity="0.6"/><circle cx="160.7" cy="123.1" r="5.8" fill="#2222ff" fill-opacity="0.6"/><circle cx="196.5" cy="110.7" r="5.8" fill="#2222ff" fill-opacity="0.6"/><circle cx="149.9" cy="97.3" r="5.8" fill="#2222ff" fill-opacity="0.6"/><circle cx="135.7" cy="123.5" r="5.8" fill="#2222ff" fill-opacity="0.6"/><circle cx="161.7" cy="137.5" r="5.8" fill="#2222ff" fill-opacity="0.6"/><circle cx="133.9" cy="103.6" r="5.8" fill="#2222ff" fill-opacity="0.6"/><circle cx="180.0" cy="134.4" r="5.8" fill="#2222ff" fill-opacity="0.6"/><circle cx="172.1" cy="131.0" r="5.8" fill="#2222ff" fill-opacity="0.6"/><circle cx="161.5" cy="119.0" r="5.8" fill="#2222ff" fill-opacity="0.6"/><circle cx="159.6" cy="128.2" r="5.8" fill="#2222ff" fill-opacity="0.6"/><circle cx="157.9" cy="122.0" r="5.8" fill="#2222ff" fill-opacity="0.6"/><circle cx="184.8" cy="111.2" r="5.8" fill="#2222ff" fill-opacity="0.6"/><circle cx="148.7" cy="122.9" r="5.8" fill="#2222ff" fill-opacity="0.6"/><circle cx="157.5" cy="116.5" r="5.8" fill="#2222ff" fill-opacity="0.6"/><circle cx="190.9" cy="129.7" r="5.8" fill="#2222ff" fill-opacity="0.6"/><circle cx="152.5" cy="129.6" r="5.8" fill="#2222ff" fill-opacity="0.6"/><circle cx="200.4" cy="114.5" r="5.8" fill="#2222ff" fill-opacity="0.6"/><circle cx="150.9" cy="118.3" r="5.8" fill="#2222ff" fill-opacity="0.6"/><circle cx="146.9" cy="140.5" r="5.8" fill="#2222ff" fill-opacity="0.6"/><circle cx="169.6" cy="116.3" r="5.8" fill="#2222ff" fill-opacity="0.6"/><circle cx="170.0" cy="111.9" r="5.8" fill="#2222ff" fill-opacity="0.6"/><circle cx="151.9" cy="118.3" r="5.8" fill="#2222ff" fill-opacity="0.6"/><circle cx="201.0" cy="101.9" r="5.8" fill="#2222ff" fill-opacity="0.6"/><circle cx="164.2" cy="134.8" r="5.8" fill="#2222ff" fill-opacity="0.6"/><circle cx="167.7" cy="141.9" r="5.8" fill="#2222ff" fill-opacity="0.6"/><circle cx="167.3" cy="121.9" r="5.8" fill="#2222ff" fill-opacity="0.6"/><circle cx="160.9" cy="109.4" r="5.8" fill="#2222ff" fill-opacity="0.6"/><circle cx="187.6" cy="111.1" r="5.8" fill="#2222ff" fill-opacity="0.6"/><circle cx="160.3" cy="113.0" r="5.8" fill="#2222ff" fill-opacity="0.6"/><circle cx="154.3" cy="92.7" r="5.8" fill="#2222ff" fill-opacity="0.6"/><circle cx="155.1" cy="119.3" r="5.8" fill="#2222ff" fill-opacity="0.6"/><circle cx="161.3" cy="128.5" r="5.8" fill="#2222ff" fill-opacity="0.6"/><circle cx="160.0" cy="111.6" r="5.8" fill="#2222ff" fill-opacity="0.6"/><circle cx="164.1" cy="127.1" r="5.8" fill="#2222ff" fill-opacity="0.6"/><circle cx="151.0" cy="99.9" r="5.8" fill="#2222ff" fill-opacity="0.6"/><circle cx="143.6" cy="127.3" r="5.8" fill="#2222ff" fill-opacity="0.6"/><circle cx="177.6" cy="112.4" r="5.8" fill="#2222ff" fill-opacity="0.6"/><circle cx="160.8" cy="128.4" r="5.8" fill="#2222ff" fill-opacity="0.6"/><circle cx="182.0" cy="115.9" r="5.8" fill="#2222ff" fill-opacity="0.6"/><circle cx="154.4" cy="133.5" r="5.8" fill="#2222ff" fill-opacity="0.6"/><circle cx="193.1" cy="142.7" r="5.8" fill="#2222ff" fill-opacity="0.6"/><circle cx="143.2" cy="120.4" r="5.8" fill="#2222ff" fill-opacity="0.6"/><circle cx="156.7" cy="117.5" r="5.8" fill="#2222ff" fill-opacity="0.6"/><circle cx="152.3" cy="111.9" r="5.8" fill="#2222ff" fill-opacity="0.6"/><circle cx="156.9" cy="138.4" r="5.8" fill="#2222ff" fill-opacity="0.6"/><circle cx="170.4" cy="125.7" r="5.8" fill="#2222ff" fill-opacity="0.6"/><circle cx="163.0" cy="111.0" r="5.8" fill="#2222ff" fill-opacity="0.6"/><circle cx="154.9" cy="131.7" r="5.8" fill="#2222ff" fill-opacity="0.6"/><circle cx="168.9" cy="142.6" r="5.8" fill="#2222ff" fill-opacity="0.6"/><circle cx="164.9" cy="119.6" r="5.8" fill="#2222ff" fill-opacity="0.6"/><circle cx="136.3" cy="118.5" r="5.8" fill="#2222ff" fill-opacity="0.6"/><circle cx="132.3" cy="130.3" r="5.8" fill="#2222ff" fill-opacity="0.6"/><circle cx="151.7" cy="117.1" r="5.8" fill="#2222ff" fill-opacity="0.6"/><circle cx="142.2" cy="109.6" r="5.8" fill="#2222ff" fill-opacity="0.6"/><circle cx="144.8" cy="128.4" r="5.8" fill="#2222ff" fill-opacity="0.6"/><circle cx="167.2" cy="107.0" r="5.8" fill="#2222ff" fill-opacity="0.6"/><circle cx="132.8" cy="112.5" r="5.8" fill="#2222ff" fill-opacity="0.6"/><circle cx="156.3" cy="105.6" r="5.8" fill="#2222ff" fill-opacity="0.6"/><circle cx="170.1" cy="118.8" r="5.8" fill="#2222ff" fill-opacity="0.6"/><circle cx="163.9" cy="113.0" r="5.8" fill="#2222ff" fill-opacity="0.6"/><circle cx="153.6" cy="112.3" r="5.8" fill="#2222ff" fill-opacity="0.6"/><circle cx="136.1" cy="121.0" r="5.8" fill="#2222ff" fill-opacity="0.6"/><circle cx="170.7" cy="101.6" r="5.8" fill="#2222ff" fill-opacity="0.6"/><circle cx="160.0" cy="131.8" r="5.8" fill="#2222ff" fill-opacity="0.6"/><circle cx="161.6" cy="133.7" r="5.8" fill="#2222ff" fill-opacity="0.6"/><circle cx="157.1" cy="118.2" r="5.8" fill="#2222ff" fill-opacity="0.6"/><circle cx="143.9" cy="105.4" r="5.8" fill="#2222ff" fill-opacity="0.6"/><circle cx="136.2" cy="103.9" r="5.8" fill="#2222ff" fill-opacity="0.6"/><circle cx="163.5" cy="125.3" r="5.8" fill="#2222ff" fill-opacity="0.6"/><circle cx="177.8" cy="123.9" r="5.8" fill="#2222ff" fill-opacity="0.6"/><circle cx="145.5" cy="120.7" r="5.8" fill="#2222ff" fill-opacity="0.6"/><circle cx="155.0" cy="137.8" r="5.8" fill="#2222ff" fill-opacity="0.6"/><circle cx="187.7" cy="135.2" r="5.8" fill="#2222ff" fill-opacity="0.6"/><circle cx="145.4" cy="110.0" r="5.8" fill="#2222ff" fill-opacity="0.6"/><circle cx="165.4" cy="111.9" r="5.8" fill="#2222ff" fill-opacity="0.6"/><circle cx="167.2" cy="128.0" r="5.8" fill="#2222ff" fill-opacity="0.6"/><circle cx="172.8" cy="124.0" r="5.8" fill="#2222ff" fill-opacity="0.6"/><circle cx="149.8" cy="107.3" r="5.8" fill="#2222ff" fill-opacity="0.6"/><circle cx="156.3" cy="132.9" r="5.8" fill="#2222ff" fill-opacity="0.6"/><circle cx="182.0" cy="134.2" r="5.8" fill="#2222ff" fill-opacity="0.6"/><circle cx="164.9" cy="127.4" r="5.8" fill="#2222ff" fill-opacity="0.6"/><circle cx="170.3" cy="135.4" r="5.8" fill="#2222ff" fill-opacity="0.6"/><circle cx="176.9" cy="105.0" r="5.8" fill="#2222ff" fill-opacity="0.6"/><circle cx="174.2" cy="126.0" r="5.8" fill="#2222ff" fill-opacity="0.6"/><circle cx="153.1" cy="123.3" r="5.8" fill="#2222ff" fill-opacity="0.6"/><circle cx="165.4" cy="119.3" r="5.8" fill="#2222ff" fill-opacity="0.6"/><circle cx="135.9" cy="115.2" r="5.8" fill="#2222ff" fill-opacity="0.6"/><circle cx="169.3" cy="120.1" r="5.8" fill="#2222ff" fill-opacity="0.6"/><circle cx="136.6" cy="119.2" r="5.8" fill="#2222ff" fill-opacity="0.6"/><circle cx="171.2" cy="123.1" r="5.8" fill="#2222ff" fill-opacity="0.6"/><circle cx="168.0" cy="116.5" r="5.8" fill="#2222ff" fill-opacity="0.6"/><circle cx="150.2" cy="122.7" r="5.8" fill="#2222ff" fill-opacity="0.6"/><circle cx="155.4" cy="119.9" r="5.8" fill="#2222ff" fill-opacity="0.6"/><circle cx="207.3" cy="136.4" r="5.8" fill="#2222ff" fill-opacity="0.6"/><circle cx="166.5" cy="101.9" r="5.8" fill="#2222ff" fill-opacity="0.6"/><circle cx="160.8" cy="127.5" r="5.8" fill="#2222ff" fill-opacity="0.6"/><circle cx="151.2" cy="114.3" r="5.8" fill="#2222ff" fill-opacity="0.6"/><circle cx="126.6" cy="118.3" r="5.8" fill="#2222ff" fill-opacity="0.6"/><circle cx="150.8" cy="124.6" r="5.8" fill="#2222ff" fill-opacity="0.6"/><circle cx="181.4" cy="121.3" r="5.8" fill="#2222ff" fill-opacity="0.6"/><circle cx="174.9" cy="124.6" r="5.8" fill="#2222ff" fill-opacity="0.6"/><circle cx="158.6" cy="115.4" r="5.8" fill="#2222ff" fill-opacity="0.6"/><circle cx="145.7" cy="130.3" r="5.8" fill="#2222ff" fill-opacity="0.6"/><circle cx="176.1" cy="110.8" r="5.8" fill="#2222ff" fill-opacity="0.6"/><circle cx="175.0" cy="113.6" r="5.8" fill="#2222ff" fill-opacity="0.6"/><circle cx="136.3" cy="127.4" r="5.8" fill="#2222ff" fill-opacity="0.6"/><circle cx="139.6" cy="128.0" r="5.8" fill="#2222ff" fill-opacity="0.6"/><circle cx="162.0" cy="129.3" r="5.8" fill="#2222ff" fill-opacity="0.6"/><circle cx="166.0" cy="133.0" r="5.8" fill="#2222ff" fill-opacity="0.6"/><circle cx="164.8" cy="126.3" r="5.8" fill="#2222ff" fill-opacity="0.6"/><circle cx="162.3" cy="131.5" r="5.8" fill="#2222ff" fill-opacity="0.6"/><circle cx="153.0" cy="128.8" r="5.8" fill="#2222ff" fill-opacity="0.6"/><circle cx="183.3" cy="122.8" r="5.8" fill="#2222ff" fill-opacity="0.6"/><circle cx="168.6" cy="114.8" r="5.8" fill="#2222ff" fill-opacity="0.6"/><circle cx="156.2" cy="121.0" r="5.8" fill="#2222ff" fill-opacity="0.6"/><circle cx="157.9" cy="108.4" r="5.8" fill="#2222ff" fill-opacity="0.6"/><circle cx="160.1" cy="121.0" r="5.8" fill="#2222ff" fill-opacity="0.6"/><circle cx="164.2" cy="127.6" r="5.8" fill="#2222ff" fill-opacity="0.6"/><circle cx="131.8" cy="128.9" r="5.8" fill="#2222ff" fill-opacity="0.6"/><circle cx="160.2" cy="110.2" r="5.8" fill="#2222ff" fill-opacity="0.6"/><circle cx="154.6" cy="122.7" r="5.8" fill="#2222ff" fill-opacity="0.6"/><circle cx="174.6" cy="117.6" r="5.8" fill="#2222ff" fill-opacity="0.6"/><circle cx="166.8" cy="102.3" r="5.8" fill="#2222ff" fill-opacity="0.6"/><circle cx="163.7" cy="118.3" r="5.8" fill="#2222ff" fill-opacity="0.6"/><circle cx="152.7" cy="127.3" r="5.8" fill="#2222ff" fill-opacity="0.6"/><circle cx="185.1" cy="135.5" r="5.8" fill="#2222ff" fill-opacity="0.6"/><circle cx="146.2" cy="133.1" r="5.8" fill="#2222ff" fill-opacity="0.6"/><circle cx="156.2" cy="117.6" r="5.8" fill="#2222ff" fill-opacity="0.6"/><circle cx="151.5" cy="122.2" r="5.8" fill="#2222ff" fill-opacity="0.6"/><circle cx="168.8" cy="122.2" r="5.8" fill="#2222ff" fill-opacity="0.6"/><circle cx="158.2" cy="116.8" r="5.8" fill="#2222ff" fill-opacity="0.6"/><circle cx="153.0" cy="128.3" r="5.8" fill="#2222ff" fill-opacity="0.6"/><circle cx="153.7" cy="115.9" r="5.8" fill="#2222ff" fill-opacity="0.6"/><circle cx="159.6" cy="110.3" r="5.8" fill="#2222ff" fill-opacity="0.6"/><circle cx="160.9" cy="102.5" r="5.8" fill="#2222ff" fill-opacity="0.6"/><circle cx="165.8" cy="126.0" r="5.8" fill="#2222ff" fill-opacity="0.6"/><circle cx="153.2" cy="134.8" r="5.8" fill="#2222ff" fill-opacity="0.6"/><circle cx="147.8" cy="122.5" r="5.8" fill="#2222ff" fill-opacity="0.6"/><circle cx="169.2" cy="114.7" r="5.8" fill="#2222ff" fill-opacity="0.6"/><circle cx="155.5" cy="127.9" r="5.8" fill="#2222ff" fill-opacity="0.6"/><circle cx="161.3" cy="122.2" r="5.8" fill="#2222ff" fill-opacity="0.6"/><circle cx="181.0" cy="125.5" r="5.8" fill="#2222ff" fill-opacity="0.6"/><circle cx="138.1" cy="106.1" r="5.8" fill="#2222ff" fill-opacity="0.6"/><circle cx="173.5" cy="120.1" r="5.8" fill="#2222ff" fill-opacity="0.6"/><circle cx="149.5" cy="94.6" r="5.8" fill="#2222ff" fill-opacity="0.6"/><circle cx="162.5" cy="136.1" r="5.8" fill="#2222ff" fill-opacity="0.6"/><circle cx="147.4" cy="92.0" r="5.8" fill="#2222ff" fill-opacity="0.6"/><circle cx="169.5" cy="114.7" r="5.8" fill="#2222ff" fill-opacity="0.6"/><circle cx="157.4" cy="114.7" r="5.8" fill="#2222ff" fill-opacity="0.6"/><circle cx="146.9" cy="121.0" r="5.8" fill="#2222ff" fill-opacity="0.6"/><circle cx="173.6" cy="125.6" r="5.8" fill="#2222ff" fill-opacity="0.6"/><circle cx="150.6" cy="128.5" r="5.8" fill="#2222ff" fill-opacity="0.6"/><circle cx="158.1" cy="124.9" r="5.8" fill="#2222ff" fill-opacity="0.6"/><circle cx="145.9" cy="123.3" r="5.8" fill="#2222ff" fill-opacity="0.6"/><circle cx="169.1" cy="135.0" r="5.8" fill="#2222ff" fill-opacity="0.6"/><circle cx="160.5" cy="123.8" r="5.8" fill="#2222ff" fill-opacity="0.6"/><circle cx="150.7" cy="126.8" r="5.8" fill="#2222ff" fill-opacity="0.6"/><circle cx="170.0" cy="132.9" r="5.8" fill="#2222ff" fill-opacity="0.6"/><circle cx="158.0" cy="104.8" r="5.8" fill="#2222ff" fill-opacity="0.6"/><circle cx="160.5" cy="116.6" r="5.8" fill="#2222ff" fill-opacity="0.6"/><circle cx="148.8" cy="123.3" r="5.8" fill="#2222ff" fill-opacity="0.6"/><circle cx="174.0" cy="126.0" r="5.8" fill="#2222ff" fill-opacity="0.6"/><circle cx="176.3" cy="126.5" r="5.8" fill="#2222ff" fill-opacity="0.6"/><circle cx="148.1" cy="109.9" r="5.8" fill="#2222ff" fill-opacity="0.6"/><circle cx="154.4" cy="125.3" r="5.8" fill="#2222ff" fill-opacity="0.6"/><circle cx="174.1" cy="123.2" r="5.8" fill="#2222ff" fill-opacity="0.6"/><circle cx="177.5" cy="113.2" r="5.8" fill="#2222ff" fill-opacity="0.6"/><circle cx="156.1" cy="134.6" r="5.8" fill="#2222ff" fill-opacity="0.6"/><circle cx="165.2" cy="131.5" r="5.8" fill="#2222ff" fill-opacity="0.6"/><circle cx="137.2" cy="95.7" r="5.8" fill="#2222ff" fill-opacity="0.6"/><circle cx="146.3" cy="127.2" r="5.8" fill="#2222ff" fill-opacity="0.6"/><circle cx="186.0" cy="117.2" r="5.8" fill="#2222ff" fill-opacity="0.6"/><circle cx="148.9" cy="105.3" r="5.8" fill="#2222ff" fill-opacity="0.6"/><circle cx="146.9" cy="122.3" r="5.8" fill="#2222ff" fill-opacity="0.6"/><circle cx="152.4" cy="138.1" r="5.8" fill="#2222ff" fill-opacity="0.6"/><circle cx="173.0" cy="113.9" r="5.8" fill="#2222ff" fill-opacity="0.6"/><circle cx="164.8" cy="118.1" r="5.8" fill="#2222ff" fill-opacity="0.6"/><circle cx="170.5" cy="131.0" r="5.8" fill="#2222ff" fill-opacity="0.6"/><circle cx="154.1" cy="127.5" r="5.8" fill="#2222ff" fill-opacity="0.6"/><circle cx="169.5" cy="119.8" r="5.8" fill="#2222ff" fill-opacity="0.6"/><circle cx="163.3" cy="127.0" r="5.8" fill="#2222ff" fill-opacity="0.6"/><circle cx="170.3" cy="159.7" r="5.8" fill="#2222ff" fill-opacity="0.45"/><circle cx="189.0" cy="169.1" r="5.8" fill="#2222ff" fill-opacity="0.45"/><circle cx="167.0" cy="175.4" r="5.8" fill="#2222ff" fill-opacity="0.45"/><circle cx="156.6" cy="169.8" r="5.8" fill="#2222ff" fill-opacity="0.45"/><circle cx="158.0" cy="163.2" r="5.8" fill="#2222ff" fill-opacity="0.45"/><circle cx="153.0" cy="159.2" r="5.8" fill="#2222ff" fill-opacity="0.45"/><circle cx="184.6" cy="166.5" r="5.8" fill="#2222ff" fill-opacity="0.45"/><circle cx="159.7" cy="193.0" r="5.8" fill="#2222ff" fill-opacity="0.45"/><circle cx="166.6" cy="189.5" r="5.8" fill="#2222ff" fill-opacity="0.45"/><circle cx="167.9" cy="148.9" r="5.8" fill="#2222ff" fill-opacity="0.45"/><circle cx="195.8" cy="163.1" r="5.8" fill="#2222ff" fill-opacity="0.45"/><circle cx="183.0" cy="185.4" r="5.8" fill="#2222ff" fill-opacity="0.45"/><circle cx="158.6" cy="170.1" r="5.8" fill="#2222ff" fill-opacity="0.45"/><circle cx="167.3" cy="177.4" r="5.8" fill="#2222ff" fill-opacity="0.45"/><circle cx="173.9" cy="151.7" r="5.8" fill="#2222ff" fill-opacity="0.45"/><circle cx="174.7" cy="179.6" r="5.8" fill="#2222ff" fill-opacity="0.45"/><circle cx="170.6" cy="176.8" r="5.8" fill="#2222ff" fill-opacity="0.45"/><circle cx="167.8" cy="168.4" r="5.8" fill="#2222ff" fill-opacity="0.45"/><circle cx="178.2" cy="171.0" r="5.8" fill="#2222ff" fill-opacity="0.45"/><circle cx="189.0" cy="182.1" r="5.8" fill="#2222ff" fill-opacity="0.45"/><circle cx="184.0" cy="179.0" r="5.8" fill="#2222ff" fill-opacity="0.45"/><circle cx="175.9" cy="153.1" r="5.8" fill="#2222ff" fill-opacity="0.45"/><circle cx="186.6" cy="193.0" r="5.8" fill="#2222ff" fill-opacity="0.45"/><circle cx="176.7" cy="165.6" r="5.8" fill="#2222ff" fill-opacity="0.45"/><circle cx="173.7" cy="185.7" r="5.8" fill="#2222ff" fill-opacity="0.45"/><circle cx="177.4" cy="155.6" r="5.8" fill="#2222ff" fill-opacity="0.45"/><circle cx="172.1" cy="158.6" r="5.8" fill="#2222ff" fill-opacity="0.45"/><circle cx="171.7" cy="156.8" r="5.8" fill="#2222ff" fill-opacity="0.45"/><circle cx="163.8" cy="189.4" r="5.8" fill="#2222ff" fill-opacity="0.45"/><circle cx="186.4" cy="147.0" r="5.8" fill="#2222ff" fill-opacity="0.45"/><circle cx="162.6" cy="163.0" r="5.8" fill="#2222ff" fill-opacity="0.45"/><circle cx="169.5" cy="150.2" r="5.8" fill="#2222ff" fill-opacity="0.45"/><circle cx="184.5" cy="147.0" r="5.8" fill="#2222ff" fill-opacity="0.45"/><circle cx="182.2" cy="178.6" r="5.8" fill="#2222ff" fill-opacity="0.45"/><circle cx="169.8" cy="160.1" r="5.8" fill="#2222ff" fill-opacity="0.45"/><circle cx="165.1" cy="192.5" r="5.8" fill="#22aa22" fill-opacity="0.4"/><circle cx="131.3" cy="178.8" r="5.8" fill="#22aa22" fill-opacity="0.4"/><circle cx="172.4" cy="190.0" r="5.8" fill="#22aa22" fill-opacity="0.4"/><circle cx="157.6" cy="181.4" r="5.8" fill="#22aa22" fill-opacity="0.4"/><circle cx="153.1" cy="183.6" r="5.8" fill="#22aa22" fill-opacity="0.4"/><circle cx="207.8" cy="178.8" r="5.8" fill="#22aa22" fill-opacity="0.4"/><circle cx="188.1" cy="195.8" r="5.8" fill="#22aa22" fill-opacity="0.4"/><circle cx="167.5" cy="193.0" r="5.8" fill="#22aa22" fill-opacity="0.4"/><circle cx="158.2" cy="206.8" r="5.8" fill="#22aa22" fill-opacity="0.4"/><circle cx="172.1" cy="190.8" r="5.8" fill="#22aa22" fill-opacity="0.4"/><circle cx="162.2" cy="193.0" r="5.8" fill="#22aa22" fill-opacity="0.4"/><circle cx="146.3" cy="188.0" r="5.8" fill="#22aa22" fill-opacity="0.4"/><circle cx="154.4" cy="197.1" r="5.8" fill="#22aa22" fill-opacity="0.4"/><circle cx="173.5" cy="172.9" r="5.8" fill="#22aa22" fill-opacity="0.4"/><circle cx="160.6" cy="200.7" r="5.8" fill="#22aa22" fill-opacity="0.4"/><circle cx="143.9" cy="179.5" r="5.8" fill="#22aa22" fill-opacity="0.4"/><circle cx="179.8" cy="189.8" r="5.8" fill="#22aa22" fill-opacity="0.4"/><circle cx="157.1" cy="179.2" r="5.8" fill="#22aa22" fill-opacity="0.4"/><circle cx="166.8" cy="185.6" r="5.8" fill="#22aa22" fill-opacity="0.4"/><circle cx="167.5" cy="195.2" r="5.8" fill="#22aa22" fill-opacity="0.4"/><circle cx="175.1" cy="187.9" r="5.8" fill="#22aa22" fill-opacity="0.4"/><circle cx="155.9" cy="191.4" r="5.8" fill="#22aa22" fill-opacity="0.4"/><circle cx="162.6" cy="192.8" r="5.8" fill="#22aa22" fill-opacity="0.4"/><circle cx="155.8" cy="188.8" r="5.8" fill="#22aa22" fill-opacity="0.4"/><circle cx="155.0" cy="185.3" r="5.8" fill="#22aa22" fill-opacity="0.4"/><circle cx="381.8" cy="126.4" r="5.8" fill="#00a0a0" fill-opacity="0.4"/><circle cx="367.1" cy="108.2" r="5.8" fill="#00a0a0" fill-opacity="0.4"/><circle cx="394.8" cy="114.9" r="5.8" fill="#00a0a0" fill-opacity="0.4"/><circle cx="409.0" cy="110.8" r="5.8" fill="#00a0a0" fill-opacity="0.4"/><circle cx="399.4" cy="120.8" r="5.8" fill="#00a0a0" fill-opacity="0.4"/><circle cx="287.6" cy="60.7" r="5.8" fill="#00a0a0" fill-opacity="0.4"/><circle cx="388.0" cy="144.1" r="5.8" fill="#00a0a0" fill-opacity="0.4"/><circle cx="356.3" cy="93.6" r="5.8" fill="#00a0a0" fill-opacity="0.4"/><circle cx="403.1" cy="100.2" r="5.8" fill="#00a0a0" fill-opacity="0.4"/><circle cx="415.8" cy="132.4" r="5.8" fill="#00a0a0" fill-opacity="0.4"/><circle cx="373.3" cy="79.8" r="5.8" fill="#00a0a0" fill-opacity="0.4"/><circle cx="356.9" cy="134.6" r="5.8" fill="#00a0a0" fill-opacity="0.4"/><circle cx="464.1" cy="106.6" r="5.8" fill="#00a0a0" fill-opacity="0.4"/><circle cx="331.1" cy="90.1" r="5.8" fill="#00a0a0" fill-opacity="0.4"/><circle cx="388.0" cy="97.9" r="5.8" fill="#00a0a0" fill-opacity="0.4"/><circle cx="402.1" cy="118.6" r="5.8" fill="#00a0a0" fill-opacity="0.4"/><circle cx="392.1" cy="116.2" r="5.8" fill="#00a0a0" fill-opacity="0.4"/><circle cx="346.3" cy="110.0" r="5.8" fill="#00a0a0" fill-opacity="0.4"/><circle cx="365.0" cy="116.9" r="5.8" fill="#00a0a0" fill-opacity="0.4"/><circle cx="404.9" cy="119.1" r="5.8" fill="#00a0a0" fill-opacity="0.4"/><circle cx="390.3" cy="109.7" r="5.8" fill="#00a0a0" fill-opacity="0.4"/><circle cx="337.9" cy="76.1" r="5.8" fill="#00a0a0" fill-opacity="0.4"/><circle cx="410.1" cy="92.5" r="5.8" fill="#00a0a0" fill-opacity="0.4"/><circle cx="337.0" cy="100.7" r="5.8" fill="#00a0a0" fill-opacity="0.4"/><circle cx="420.1" cy="99.1" r="5.8" fill="#00a0a0" fill-opacity="0.4"/><circle cx="399.2" cy="114.5" r="5.8" fill="#00a0a0" fill-opacity="0.4"/><circle cx="415.5" cy="118.4" r="5.8" fill="#00a0a0" fill-opacity="0.4"/><circle cx="385.7" cy="94.5" r="5.8" fill="#00a0a0" fill-opacity="0.4"/><circle cx="392.1" cy="109.2" r="5.8" fill="#00a0a0" fill-opacity="0.4"/><circle cx="370.7" cy="93.6" r="5.8" fill="#00a0a0" fill-opacity="0.4"/><circle cx="360.6" cy="105.4" r="5.8" fill="#00a0a0" fill-opacity="0.4"/><circle cx="369.4" cy="71.2" r="5.8" fill="#00a0a0" fill-opacity="0.4"/><circle cx="351.4" cy="108.6" r="5.8" fill="#00a0a0" fill-opacity="0.4"/><circle cx="367.3" cy="109.5" r="5.8" fill="#00a0a0" fill-opacity="0.4"/><circle cx="410.3" cy="112.2" r="5.8" fill="#00a0a0" fill-opacity="0.4"/><circle cx="403.2" cy="126.6" r="5.8" fill="#00a0a0" fill-opacity="0.4"/><circle cx="390.3" cy="97.8" r="5.8" fill="#00a0a0" fill-opacity="0.4"/><circle cx="394.1" cy="89.5" r="5.8" fill="#00a0a0" fill-opacity="0.4"/><circle cx="382.9" cy="96.0" r="5.8" fill="#00a0a0" fill-opacity="0.4"/><circle cx="395.6" cy="119.5" r="5.8" fill="#00a0a0" fill-opacity="0.4"/><circle cx="361.8" cy="110.4" r="5.8" fill="#00a0a0" fill-opacity="0.4"/><circle cx="418.6" cy="127.1" r="5.8" fill="#00a0a0" fill-opacity="0.4"/><circle cx="361.8" cy="104.0" r="5.8" fill="#00a0a0" fill-opacity="0.4"/><circle cx="323.0" cy="63.2" r="5.8" fill="#00a0a0" fill-opacity="0.4"/><circle cx="387.1" cy="144.7" r="5.8" fill="#00a0a0" fill-opacity="0.4"/><circle cx="354.1" cy="118.2" r="5.8" fill="#00a0a0" fill-opacity="0.4"/><circle cx="436.3" cy="169.5" r="5.8" fill="#00a0a0" fill-opacity="0.4"/><circle cx="312.5" cy="87.7" r="5.8" fill="#00a0a0" fill-opacity="0.4"/><circle cx="383.7" cy="125.1" r="5.8" fill="#00a0a0" fill-opacity="0.4"/><circle cx="385.8" cy="96.9" r="5.8" fill="#00a0a0" fill-opacity="0.4"/><circle cx="368.4" cy="125.5" r="5.8" fill="#00a0a0" fill-opacity="0.4"/><circle cx="411.6" cy="116.8" r="5.8" fill="#00a0a0" fill-opacity="0.4"/><circle cx="390.1" cy="125.9" r="5.8" fill="#00a0a0" fill-opacity="0.4"/><circle cx="402.2" cy="116.1" r="5.8" fill="#00a0a0" fill-opacity="0.4"/><circle cx="373.5" cy="87.8" r="5.8" fill="#00a0a0" fill-opacity="0.4"/><circle cx="399.2" cy="103.2" r="5.8" fill="#ff2222" fill-opacity="0.5"/><circle cx="377.6" cy="77.9" r="5.8" fill="#ff2222" fill-opacity="0.5"/><circle cx="433.7" cy="116.5" r="5.8" fill="#ff2222" fill-opacity="0.5"/><circle cx="375.3" cy="95.7" r="5.8" fill="#ff2222" fill-opacity="0.5"/><circle cx="432.4" cy="148.8" r="5.8" fill="#ff2222" fill-opacity="0.5"/><circle cx="402.7" cy="98.6" r="5.8" fill="#ff2222" fill-opacity="0.5"/><circle cx="399.0" cy="98.1" r="5.8" fill="#ff2222" fill-opacity="0.5"/><circle cx="390.1" cy="112.0" r="5.8" fill="#ff2222" fill-opacity="0.5"/><circle cx="385.7" cy="91.7" r="5.8" fill="#ff2222" fill-opacity="0.5"/><circle cx="400.1" cy="111.0" r="5.8" fill="#ff2222" fill-opacity="0.5"/><circle cx="392.8" cy="95.9" r="5.8" fill="#ff2222" fill-opacity="0.5"/><circle cx="384.0" cy="91.0" r="5.8" fill="#ff2222" fill-opacity="0.5"/><circle cx="420.0" cy="120.2" r="5.8" fill="#ff2222" fill-opacity="0.5"/><circle cx="328.5" cy="76.2" r="5.8" fill="#ff2222" fill-opacity="0.5"/><circle cx="409.9" cy="105.2" r="5.8" fill="#ff2222" fill-opacity="0.5"/><circle cx="418.9" cy="80.6" r="5.8" fill="#ff2222" fill-opacity="0.5"/><circle cx="359.5" cy="102.8" r="5.8" fill="#ff2222" fill-opacity="0.5"/><circle cx="443.1" cy="168.3" r="5.8" fill="#ff2222" fill-opacity="0.5"/><circle cx="388.3" cy="104.7" r="5.8" fill="#ff2222" fill-opacity="0.5"/><circle cx="432.2" cy="113.9" r="5.8" fill="#ff2222" fill-opacity="0.5"/><circle cx="452.0" cy="133.1" r="5.8" fill="#ff2222" fill-opacity="0.5"/><circle cx="421.6" cy="108.5" r="5.8" fill="#ff2222" fill-opacity="0.5"/><circle cx="414.8" cy="120.2" r="5.8" fill="#ff2222" fill-opacity="0.5"/><circle cx="439.0" cy="119.1" r="5.8" fill="#ff2222" fill-opacity="0.5"/><circle cx="394.4" cy="133.4" r="5.8" fill="#ff2222" fill-opacity="0.5"/><circle cx="375.4" cy="101.2" r="5.8" fill="#ff2222" fill-opacity="0.5"/><circle cx="419.6" cy="116.4" r="5.8" fill="#ff2222" fill-opacity="0.5"/><circle cx="390.8" cy="125.6" r="5.8" fill="#ff2222" fill-opacity="0.5"/><circle cx="429.6" cy="137.5" r="5.8" fill="#ff2222" fill-opacity="0.5"/><circle cx="419.5" cy="107.4" r="5.8" fill="#ff2222" fill-opacity="0.5"/><circle cx="397.0" cy="134.7" r="5.8" fill="#ff2222" fill-opacity="0.5"/><circle cx="439.6" cy="116.5" r="5.8" fill="#ff2222" fill-opacity="0.5"/><circle cx="360.7" cy="77.9" r="5.8" fill="#ff2222" fill-opacity="0.5"/><circle cx="413.4" cy="111.8" r="5.8" fill="#ff2222" fill-opacity="0.5"/><circle cx="396.5" cy="114.0" r="5.8" fill="#ff2222" fill-opacity="0.5"/><circle cx="426.1" cy="130.3" r="5.8" fill="#ff2222" fill-opacity="0.5"/><circle cx="444.8" cy="118.8" r="5.8" fill="#ff2222" fill-opacity="0.5"/><circle cx="414.5" cy="126.2" r="5.8" fill="#ff2222" fill-opacity="0.5"/><circle cx="362.6" cy="106.0" r="5.8" fill="#ff2222" fill-opacity="0.5"/><circle cx="376.9" cy="76.8" r="5.8" fill="#ff2222" fill-opacity="0.5"/><circle cx="461.7" cy="167.4" r="5.8" fill="#ff2222" fill-opacity="0.5"/><circle cx="406.5" cy="134.4" r="5.8" fill="#ff2222" fill-opacity="0.5"/><circle cx="440.6" cy="120.3" r="5.8" fill="#ff2222" fill-opacity="0.5"/><circle cx="408.8" cy="136.5" r="5.8" fill="#ff2222" fill-opacity="0.5"/><circle cx="401.7" cy="113.4" r="5.8" fill="#ff2222" fill-opacity="0.5"/><circle cx="390.3" cy="115.7" r="5.8" fill="#ff2222" fill-opacity="0.5"/><circle cx="396.5" cy="100.9" r="5.8" fill="#ff2222" fill-opacity="0.5"/><circle cx="382.5" cy="87.5" r="5.8" fill="#ff2222" fill-opacity="0.5"/><circle cx="408.3" cy="123.1" r="5.8" fill="#ff2222" fill-opacity="0.5"/><circle cx="403.3" cy="98.6" r="5.8" fill="#ff2222" fill-opacity="0.5"/><circle cx="411.9" cy="123.7" r="5.8" fill="#ff2222" fill-opacity="0.5"/><circle cx="439.7" cy="128.6" r="5.8" fill="#ff2222" fill-opacity="0.5"/><circle cx="392.9" cy="114.2" r="5.8" fill="#ff2222" fill-opacity="0.5"/><circle cx="442.9" cy="136.9" r="5.8" fill="#ff2222" fill-opacity="0.5"/><circle cx="410.0" cy="104.2" r="5.8" fill="#ff2222" fill-opacity="0.5"/><circle cx="391.0" cy="119.2" r="5.8" fill="#ff2222" fill-opacity="0.5"/><circle cx="419.4" cy="139.0" r="5.8" fill="#ff2222" fill-opacity="0.5"/><circle cx="361.3" cy="99.5" r="5.8" fill="#ff2222" fill-opacity="0.5"/><circle cx="380.1" cy="107.5" r="5.8" fill="#ff2222" fill-opacity="0.5"/><circle cx="349.8" cy="79.1" r="5.8" fill="#ff2222" fill-opacity="0.5"/><circle cx="376.8" cy="115.1" r="5.8" fill="#ff2222" fill-opacity="0.5"/><circle cx="400.7" cy="130.2" r="5.8" fill="#ff2222" fill-opacity="0.5"/><circle cx="383.0" cy="128.8" r="5.8" fill="#ff2222" fill-opacity="0.5"/><circle cx="383.4" cy="128.0" r="5.8" fill="#ff2222" fill-opacity="0.5"/><circle cx="400.5" cy="97.7" r="5.8" fill="#ff2222" fill-opacity="0.5"/><circle cx="430.1" cy="124.2" r="5.8" fill="#ff2222" fill-opacity="0.5"/><circle cx="413.1" cy="100.3" r="5.8" fill="#ff2222" fill-opacity="0.5"/><circle cx="397.0" cy="111.1" r="5.8" fill="#ff2222" fill-opacity="0.5"/><circle cx="386.6" cy="108.7" r="5.8" fill="#ff2222" fill-opacity="0.5"/><circle cx="345.0" cy="90.3" r="5.8" fill="#ff2222" fill-opacity="0.5"/><circle cx="386.9" cy="124.2" r="5.8" fill="#ff2222" fill-opacity="0.5"/><circle cx="401.7" cy="103.1" r="5.8" fill="#ff2222" fill-opacity="0.5"/><circle cx="393.4" cy="111.3" r="5.8" fill="#ff2222" fill-opacity="0.5"/><circle cx="423.3" cy="119.1" r="5.8" fill="#ff2222" fill-opacity="0.5"/><circle cx="384.1" cy="107.7" r="5.8" fill="#ff2222" fill-opacity="0.5"/><circle cx="437.0" cy="109.2" r="5.8" fill="#ff2222" fill-opacity="0.5"/><circle cx="385.0" cy="92.6" r="5.8" fill="#ff2222" fill-opacity="0.5"/><circle cx="439.4" cy="153.0" r="5.8" fill="#ff2222" fill-opacity="0.5"/><circle cx="422.1" cy="132.0" r="5.8" fill="#ff2222" fill-opacity="0.5"/><circle cx="371.9" cy="110.1" r="5.8" fill="#ff2222" fill-opacity="0.5"/><circle cx="400.4" cy="100.3" r="5.8" fill="#ff2222" fill-opacity="0.5"/><circle cx="461.9" cy="128.7" r="5.8" fill="#ff2222" fill-opacity="0.5"/><circle cx="438.1" cy="137.6" r="5.8" fill="#ff2222" fill-opacity="0.5"/><circle cx="382.7" cy="103.3" r="5.8" fill="#ff2222" fill-opacity="0.5"/><circle cx="384.5" cy="104.5" r="5.8" fill="#ff2222" fill-opacity="0.5"/><circle cx="398.0" cy="93.2" r="5.8" fill="#ff2222" fill-opacity="0.5"/><circle cx="473.4" cy="149.2" r="5.8" fill="#ff2222" fill-opacity="0.5"/><circle cx="430.2" cy="129.2" r="5.8" fill="#ff2222" fill-opacity="0.5"/><circle cx="430.4" cy="112.0" r="5.8" fill="#ff2222" fill-opacity="0.5"/><circle cx="401.7" cy="65.7" r="5.8" fill="#ff2222" fill-opacity="0.5"/><circle cx="427.5" cy="134.5" r="5.8" fill="#ff2222" fill-opacity="0.5"/><circle cx="372.3" cy="106.3" r="5.8" fill="#ff2222" fill-opacity="0.5"/><circle cx="401.8" cy="154.2" r="5.8" fill="#ff2222" fill-opacity="0.5"/><circle cx="406.0" cy="128.1" r="5.8" fill="#ff2222" fill-opacity="0.5"/><circle cx="416.0" cy="132.2" r="5.8" fill="#ff2222" fill-opacity="0.5"/><circle cx="408.1" cy="110.4" r="5.8" fill="#ff2222" fill-opacity="0.5"/><circle cx="415.4" cy="138.4" r="5.8" fill="#ff2222" fill-opacity="0.5"/><circle cx="385.1" cy="86.0" r="5.8" fill="#ff2222" fill-opacity="0.5"/><circle cx="393.6" cy="133.1" r="5.8" fill="#ff2222" fill-opacity="0.5"/><circle cx="411.8" cy="94.4" r="5.8" fill="#ff2222" fill-opacity="0.5"/><circle cx="420.8" cy="134.9" r="5.8" fill="#ff2222" fill-opacity="0.5"/><circle cx="451.8" cy="145.9" r="5.8" fill="#ff2222" fill-opacity="0.5"/><circle cx="458.3" cy="136.8" r="5.8" fill="#ff2222" fill-opacity="0.5"/><circle cx="427.1" cy="129.9" r="5.8" fill="#ff2222" fill-opacity="0.5"/><circle cx="379.0" cy="94.6" r="5.8" fill="#ff2222" fill-opacity="0.5"/><circle cx="431.1" cy="146.4" r="5.8" fill="#ff2222" fill-opacity="0.5"/><circle cx="389.9" cy="121.0" r="5.8" fill="#ff2222" fill-opacity="0.5"/><circle cx="422.2" cy="137.8" r="5.8" fill="#ff2222" fill-opacity="0.5"/><circle cx="411.1" cy="122.5" r="5.8" fill="#ff2222" fill-opacity="0.5"/><circle cx="386.5" cy="102.2" r="5.8" fill="#ff2222" fill-opacity="0.5"/><circle cx="452.6" cy="146.4" r="5.8" fill="#dd00dd" fill-opacity="0.5"/><circle cx="441.8" cy="166.0" r="5.8" fill="#dd00dd" fill-opacity="0.5"/><circle cx="440.7" cy="188.3" r="5.8" fill="#dd00dd" fill-opacity="0.5"/><circle cx="437.9" cy="150.6" r="5.8" fill="#dd00dd" fill-opacity="0.5"/><circle cx="451.6" cy="155.2" r="5.8" fill="#dd00dd" fill-opacity="0.5"/><circle cx="452.9" cy="153.4" r="5.8" fill="#dd00dd" fill-opacity="0.5"/><circle cx="460.2" cy="161.7" r="5.8" fill="#dd00dd" fill-opacity="0.5"/><circle cx="428.5" cy="176.8" r="5.8" fill="#dd00dd" fill-opacity="0.5"/><circle cx="477.5" cy="123.9" r="5.8" fill="#dd00dd" fill-opacity="0.5"/><circle cx="444.1" cy="164.3" r="5.8" fill="#dd00dd" fill-opacity="0.5"/><circle cx="446.3" cy="201.3" r="5.8" fill="#dd00dd" fill-opacity="0.5"/><circle cx="455.5" cy="126.5" r="5.8" fill="#dd00dd" fill-opacity="0.5"/><circle cx="445.9" cy="188.7" r="5.8" fill="#dd00dd" fill-opacity="0.5"/><circle cx="450.4" cy="166.5" r="5.8" fill="#dd00dd" fill-opacity="0.5"/><circle cx="419.9" cy="217.0" r="5.8" fill="#dd00dd" fill-opacity="0.5"/><circle cx="444.1" cy="124.3" r="5.8" fill="#dd00dd" fill-opacity="0.5"/><circle cx="454.3" cy="173.0" r="5.8" fill="#dd00dd" fill-opacity="0.5"/><circle cx="450.6" cy="173.7" r="5.8" fill="#dd00dd" fill-opacity="0.5"/><circle cx="453.7" cy="201.7" r="5.8" fill="#dd00dd" fill-opacity="0.5"/><circle cx="433.0" cy="184.6" r="5.8" fill="#dd00dd" fill-opacity="0.5"/><circle cx="445.8" cy="119.7" r="5.8" fill="#dd00dd" fill-opacity="0.5"/><circle cx="461.9" cy="157.2" r="5.8" fill="#dd00dd" fill-opacity="0.5"/><circle cx="423.3" cy="155.7" r="5.8" fill="#dd00dd" fill-opacity="0.5"/><circle cx="435.3" cy="172.7" r="5.8" fill="#dd00dd" fill-opacity="0.5"/><circle cx="450.9" cy="145.1" r="5.8" fill="#dd00dd" fill-opacity="0.5"/><circle cx="432.9" cy="178.6" r="5.8" fill="#dd00dd" fill-opacity="0.5"/><circle cx="435.2" cy="163.1" r="5.8" fill="#dd00dd" fill-opacity="0.5"/><circle cx="432.3" cy="170.4" r="5.8" fill="#dd00dd" fill-opacity="0.5"/><circle cx="460.9" cy="182.2" r="5.8" fill="#dd00dd" fill-opacity="0.5"/><circle cx="454.6" cy="177.3" r="5.8" fill="#dd00dd" fill-opacity="0.5"/><circle cx="438.0" cy="153.0" r="5.8" fill="#dd00dd" fill-opacity="0.5"/><circle cx="443.6" cy="173.6" r="5.8" fill="#dd00dd" fill-opacity="0.5"/><circle cx="435.2" cy="175.4" r="5.8" fill="#dd00dd" fill-opacity="0.5"/><circle cx="437.9" cy="162.3" r="5.8" fill="#dd00dd" fill-opacity="0.5"/><circle cx="454.2" cy="136.5" r="5.8" fill="#dd00dd" fill-opacity="0.5"/><circle cx="456.3" cy="167.6" r="5.8" fill="#dd00dd" fill-opacity="0.5"/><circle cx="447.4" cy="162.8" r="5.8" fill="#dd00dd" fill-opacity="0.5"/><circle cx="433.7" cy="123.8" r="5.8" fill="#dd00dd" fill-opacity="0.5"/><circle cx="429.4" cy="183.2" r="5.8" fill="#dd00dd" fill-opacity="0.5"/><circle cx="435.5" cy="175.4" r="5.8" fill="#dd00dd" fill-opacity="0.5"/><circle cx="441.1" cy="140.3" r="5.8" fill="#dd00dd" fill-opacity="0.5"/><circle cx="433.5" cy="186.2" r="5.8" fill="#dd00dd" fill-opacity="0.5"/><circle cx="429.7" cy="153.7" r="5.8" fill="#dd00dd" fill-opacity="0.5"/><circle cx="449.4" cy="167.7" r="5.8" fill="#dd00dd" fill-opacity="0.5"/><circle cx="440.3" cy="181.2" r="5.8" fill="#dd00dd" fill-opacity="0.5"/><circle cx="456.3" cy="140.8" r="5.8" fill="#dd00dd" fill-opacity="0.5"/><circle cx="458.3" cy="147.2" r="5.8" fill="#dd00dd" fill-opacity="0.5"/><circle cx="432.0" cy="195.6" r="5.8" fill="#dd00dd" fill-opacity="0.5"/><circle cx="461.5" cy="204.8" r="5.8" fill="#dd00dd" fill-opacity="0.5"/><circle cx="456.1" cy="146.6" r="5.8" fill="#dd00dd" fill-opacity="0.5"/><circle cx="426.1" cy="199.2" r="5.8" fill="#dd00dd" fill-opacity="0.5"/><circle cx="459.5" cy="132.2" r="5.8" fill="#dd00dd" fill-opacity="0.5"/><circle cx="458.5" cy="181.8" r="5.8" fill="#dd00dd" fill-opacity="0.5"/><circle cx="457.1" cy="176.9" r="5.8" fill="#dd00dd" fill-opacity="0.5"/><circle cx="428.4" cy="139.1" r="5.8" fill="#dd00dd" fill-opacity="0.5"/><circle cx="445.7" cy="158.8" r="5.8" fill="#dd00dd" fill-opacity="0.5"/><circle cx="466.8" cy="152.6" r="5.8" fill="#dd00dd" fill-opacity="0.5"/><circle cx="445.4" cy="161.5" r="5.8" fill="#dd00dd" fill-opacity="0.5"/><circle cx="452.5" cy="138.9" r="5.8" fill="#dd00dd" fill-opacity="0.5"/><circle cx="451.5" cy="99.5" r="5.8" fill="#dd00dd" fill-opacity="0.5"/><circle cx="451.0" cy="159.6" r="5.8" fill="#dd00dd" fill-opacity="0.5"/><circle cx="455.7" cy="139.5" r="5.8" fill="#dd00dd" fill-opacity="0.5"/><circle cx="453.0" cy="140.7" r="5.8" fill="#dd00dd" fill-opacity="0.5"/><circle cx="432.9" cy="167.6" r="5.8" fill="#dd00dd" fill-opacity="0.5"/><circle cx="448.6" cy="178.7" r="5.8" fill="#dd00dd" fill-opacity="0.5"/><circle cx="448.3" cy="154.1" r="5.8" fill="#dd00dd" fill-opacity="0.5"/><circle cx="451.9" cy="196.5" r="5.8" fill="#dd00dd" fill-opacity="0.5"/><circle cx="447.1" cy="136.0" r="5.8" fill="#dd00dd" fill-opacity="0.5"/><circle cx="447.7" cy="171.8" r="5.8" fill="#dd00dd" fill-opacity="0.5"/><circle cx="420.0" cy="212.9" r="5.8" fill="#dd00dd" fill-opacity="0.5"/><circle cx="429.8" cy="137.0" r="5.8" fill="#dd00dd" fill-opacity="0.5"/><circle cx="441.5" cy="186.8" r="5.8" fill="#dd00dd" fill-opacity="0.5"/><circle cx="429.5" cy="147.0" r="5.8" fill="#dd00dd" fill-opacity="0.5"/><circle cx="451.2" cy="200.4" r="5.8" fill="#dd00dd" fill-opacity="0.5"/><circle cx="443.1" cy="163.2" r="5.8" fill="#dd00dd" fill-opacity="0.5"/><circle cx="433.8" cy="169.4" r="5.8" fill="#dd00dd" fill-opacity="0.5"/><circle cx="449.4" cy="112.8" r="5.8" fill="#dd00dd" fill-opacity="0.5"/><circle cx="429.5" cy="159.4" r="5.8" fill="#dd00dd" fill-opacity="0.5"/><circle cx="424.1" cy="184.5" r="5.8" fill="#dd00dd" fill-opacity="0.5"/><circle cx="452.5" cy="190.4" r="5.8" fill="#dd00dd" fill-opacity="0.5"/><circle cx="444.8" cy="191.5" r="5.8" fill="#dd00dd" fill-opacity="0.5"/><circle cx="442.6" cy="184.1" r="5.8" fill="#dd00dd" fill-opacity="0.5"/><circle cx="445.4" cy="182.8" r="5.8" fill="#dd00dd" fill-opacity="0.5"/><circle cx="440.0" cy="144.6" r="5.8" fill="#dd00dd" fill-opacity="0.5"/><circle cx="429.5" cy="179.1" r="5.8" fill="#dd00dd" fill-opacity="0.5"/><circle cx="457.0" cy="146.6" r="5.8" fill="#dd00dd" fill-opacity="0.5"/><circle cx="439.7" cy="146.6" r="5.8" fill="#dd00dd" fill-opacity="0.5"/><circle cx="456.1" cy="163.4" r="5.8" fill="#dd00dd" fill-opacity="0.5"/><circle cx="448.4" cy="146.4" r="5.8" fill="#dd00dd" fill-opacity="0.5"/><circle cx="433.3" cy="199.7" r="5.8" fill="#dd00dd" fill-opacity="0.5"/><circle cx="441.3" cy="152.7" r="5.8" fill="#dd00dd" fill-opacity="0.5"/><circle cx="458.8" cy="185.4" r="5.8" fill="#dd00dd" fill-opacity="0.5"/><circle cx="426.2" cy="184.6" r="5.8" fill="#dd00dd" fill-opacity="0.5"/><circle cx="428.7" cy="171.9" r="5.8" fill="#dd00dd" fill-opacity="0.5"/><circle cx="426.4" cy="131.9" r="5.8" fill="#dd00dd" fill-opacity="0.5"/><circle cx="460.0" cy="152.4" r="5.8" fill="#dd00dd" fill-opacity="0.5"/><circle cx="438.0" cy="162.0" r="5.8" fill="#dd00dd" fill-opacity="0.5"/><circle cx="449.4" cy="152.4" r="5.8" fill="#dd00dd" fill-opacity="0.5"/><circle cx="426.0" cy="202.5" r="5.8" fill="#dd00dd" fill-opacity="0.5"/><circle cx="459.5" cy="175.7" r="5.8" fill="#dd00dd" fill-opacity="0.5"/><circle cx="437.6" cy="147.2" r="5.8" fill="#dd00dd" fill-opacity="0.5"/><circle cx="439.5" cy="173.5" r="5.8" fill="#dd00dd" fill-opacity="0.5"/><circle cx="466.7" cy="156.4" r="5.8" fill="#dd00dd" fill-opacity="0.5"/><circle cx="450.7" cy="153.7" r="5.8" fill="#dd00dd" fill-opacity="0.5"/><circle cx="452.4" cy="147.8" r="5.8" fill="#dd00dd" fill-opacity="0.5"/><circle cx="441.7" cy="191.2" r="5.8" fill="#dd00dd" fill-opacity="0.5"/><circle cx="444.2" cy="154.3" r="5.8" fill="#dd00dd" fill-opacity="0.5"/><circle cx="456.6" cy="133.2" r="5.8" fill="#dd00dd" fill-opacity="0.5"/><circle cx="474.8" cy="138.2" r="5.8" fill="#dd00dd" fill-opacity="0.5"/><circle cx="448.5" cy="141.6" r="5.8" fill="#dd00dd" fill-opacity="0.5"/><circle cx="457.3" cy="201.8" r="5.8" fill="#22aa22" fill-opacity="0.5"/><circle cx="403.4" cy="225.8" r="5.8" fill="#22aa22" fill-opacity="0.5"/><circle cx="429.3" cy="184.3" r="5.8" fill="#22aa22" fill-opacity="0.5"/><circle cx="424.6" cy="201.4" r="5.8" fill="#22aa22" fill-opacity="0.5"/><circle cx="413.5" cy="189.3" r="5.8" fill="#22aa22" fill-opacity="0.5"/><circle cx="417.1" cy="208.6" r="5.8" fill="#22aa22" fill-opacity="0.5"/><circle cx="434.4" cy="218.1" r="5.8" fill="#22aa22" fill-opacity="0.5"/><circle cx="418.2" cy="210.5" r="5.8" fill="#22aa22" fill-opacity="0.5"/><circle cx="414.0" cy="215.9" r="5.8" fill="#22aa22" fill-opacity="0.5"/><circle cx="436.6" cy="194.3" r="5.8" fill="#22aa22" fill-opacity="0.5"/><circle cx="459.6" cy="182.6" r="5.8" fill="#22aa22" fill-opacity="0.5"/><circle cx="413.7" cy="177.3" r="5.8" fill="#22aa22" fill-opacity="0.5"/><circle cx="432.3" cy="176.6" r="5.8" fill="#22aa22" fill-opacity="0.5"/><circle cx="417.1" cy="157.2" r="5.8" fill="#22aa22" fill-opacity="0.5"/><circle cx="433.6" cy="186.3" r="5.8" fill="#22aa22" fill-opacity="0.5"/><circle cx="461.3" cy="228.3" r="5.8" fill="#22aa22" fill-opacity="0.5"/><circle cx="395.6" cy="211.2" r="5.8" fill="#22aa22" fill-opacity="0.5"/><circle cx="420.4" cy="217.0" r="5.8" fill="#22aa22" fill-opacity="0.5"/><circle cx="397.3" cy="208.8" r="5.8" fill="#22aa22" fill-opacity="0.5"/><circle cx="449.4" cy="199.8" r="5.8" fill="#22aa22" fill-opacity="0.5"/><circle cx="413.0" cy="185.2" r="5.8" fill="#22aa22" fill-opacity="0.5"/><circle cx="414.0" cy="240.4" r="5.8" fill="#22aa22" fill-opacity="0.5"/><circle cx="449.0" cy="237.4" r="5.8" fill="#22aa22" fill-opacity="0.5"/><circle cx="424.3" cy="191.0" r="5.8" fill="#22aa22" fill-opacity="0.5"/><circle cx="434.8" cy="196.5" r="5.8" fill="#22aa22" fill-opacity="0.5"/><circle cx="418.9" cy="191.0" r="5.8" fill="#22aa22" fill-opacity="0.5"/><circle cx="442.2" cy="203.7" r="5.8" fill="#22aa22" fill-opacity="0.5"/><circle cx="432.4" cy="195.7" r="5.8" fill="#22aa22" fill-opacity="0.5"/><circle cx="424.8" cy="191.2" r="5.8" fill="#22aa22" fill-opacity="0.5"/><circle cx="447.9" cy="212.0" r="5.8" fill="#22aa22" fill-opacity="0.5"/><circle cx="455.0" cy="207.1" r="5.8" fill="#22aa22" fill-opacity="0.5"/><circle cx="455.5" cy="183.5" r="5.8" fill="#22aa22" fill-opacity="0.5"/><circle cx="419.1" cy="194.0" r="5.8" fill="#22aa22" fill-opacity="0.5"/><circle cx="415.2" cy="191.3" r="5.8" fill="#22aa22" fill-opacity="0.5"/><circle cx="410.1" cy="188.2" r="5.8" fill="#22aa22" fill-opacity="0.5"/><circle cx="413.8" cy="192.9" r="5.8" fill="#22aa22" fill-opacity="0.5"/><circle cx="427.7" cy="179.2" r="5.8" fill="#22aa22" fill-opacity="0.5"/><circle cx="418.3" cy="195.5" r="5.8" fill="#22aa22" fill-opacity="0.5"/><circle cx="401.8" cy="189.8" r="5.8" fill="#22aa22" fill-opacity="0.5"/><circle cx="450.8" cy="204.2" r="5.8" fill="#22aa22" fill-opacity="0.5"/><circle cx="431.9" cy="212.9" r="5.8" fill="#22aa22" fill-opacity="0.5"/><circle cx="401.9" cy="213.9" r="5.8" fill="#22aa22" fill-opacity="0.5"/><circle cx="479.8" cy="200.8" r="5.8" fill="#22aa22" fill-opacity="0.5"/><circle cx="470.8" cy="203.2" r="5.8" fill="#22aa22" fill-opacity="0.5"/><circle cx="465.9" cy="179.4" r="5.8" fill="#22aa22" fill-opacity="0.5"/><circle cx="446.2" cy="209.4" r="5.8" fill="#22aa22" fill-opacity="0.5"/><circle cx="408.1" cy="174.4" r="5.8" fill="#22aa22" fill-opacity="0.5"/><circle cx="413.0" cy="175.0" r="5.8" fill="#22aa22" fill-opacity="0.5"/><circle cx="434.4" cy="198.2" r="5.8" fill="#22aa22" fill-opacity="0.5"/><circle cx="381.8" cy="173.4" r="5.8" fill="#22aa22" fill-opacity="0.5"/><circle cx="434.1" cy="203.3" r="5.8" fill="#22aa22" fill-opacity="0.5"/><circle cx="470.3" cy="180.8" r="5.8" fill="#22aa22" fill-opacity="0.5"/><circle cx="430.4" cy="200.6" r="5.8" fill="#22aa22" fill-opacity="0.5"/><circle cx="448.9" cy="181.5" r="5.8" fill="#22aa22" fill-opacity="0.5"/><circle cx="403.1" cy="185.1" r="5.8" fill="#22aa22" fill-opacity="0.5"/><circle cx="440.3" cy="168.6" r="5.8" fill="#22aa22" fill-opacity="0.5"/><circle cx="432.9" cy="200.9" r="5.8" fill="#22aa22" fill-opacity="0.5"/><circle cx="458.1" cy="160.4" r="5.8" fill="#22aa22" fill-opacity="0.5"/><circle cx="441.6" cy="187.3" r="5.8" fill="#22aa22" fill-opacity="0.5"/><circle cx="411.7" cy="207.5" r="5.8" fill="#22aa22" fill-opacity="0.5"/><circle cx="456.3" cy="214.0" r="5.8" fill="#22aa22" fill-opacity="0.5"/><circle cx="414.8" cy="219.1" r="5.8" fill="#22aa22" fill-opacity="0.5"/><circle cx="410.6" cy="188.6" r="5.8" fill="#22aa22" fill-opacity="0.5"/><circle cx="423.7" cy="177.8" r="5.8" fill="#22aa22" fill-opacity="0.5"/><circle cx="415.3" cy="233.7" r="5.8" fill="#22aa22" fill-opacity="0.5"/><circle cx="427.2" cy="208.4" r="5.8" fill="#22aa22" fill-opacity="0.5"/><circle cx="417.5" cy="216.7" r="5.8" fill="#22aa22" fill-opacity="0.5"/><circle cx="435.6" cy="184.9" r="5.8" fill="#22aa22" fill-opacity="0.5"/><circle cx="417.8" cy="222.9" r="5.8" fill="#22aa22" fill-opacity="0.5"/><circle cx="416.1" cy="217.5" r="5.8" fill="#22aa22" fill-opacity="0.5"/><circle cx="410.5" cy="231.4" r="5.8" fill="#22aa22" fill-opacity="0.5"/><circle cx="426.7" cy="211.3" r="5.8" fill="#22aa22" fill-opacity="0.5"/><circle cx="414.8" cy="209.8" r="5.8" fill="#22aa22" fill-opacity="0.5"/><circle cx="432.3" cy="171.7" r="5.8" fill="#22aa22" fill-opacity="0.5"/><circle cx="440.2" cy="180.4" r="5.8" fill="#22aa22" fill-opacity="0.5"/><circle cx="447.9" cy="223.0" r="5.8" fill="#22aa22" fill-opacity="0.5"/><circle cx="421.5" cy="209.8" r="5.8" fill="#22aa22" fill-opacity="0.5"/><circle cx="367.2" cy="203.5" r="5.8" fill="#22aa22" fill-opacity="0.5"/><circle cx="409.3" cy="204.3" r="5.8" fill="#22aa22" fill-opacity="0.5"/><circle cx="485.0" cy="191.3" r="5.8" fill="#22aa22" fill-opacity="0.5"/><circle cx="416.0" cy="200.6" r="5.8" fill="#22aa22" fill-opacity="0.5"/><circle cx="445.8" cy="173.3" r="5.8" fill="#22aa22" fill-opacity="0.5"/><circle cx="398.3" cy="215.7" r="5.8" fill="#22aa22" fill-opacity="0.5"/><circle cx="411.0" cy="202.7" r="5.8" fill="#22aa22" fill-opacity="0.5"/><circle cx="407.1" cy="172.2" r="5.8" fill="#22aa22" fill-opacity="0.5"/><circle cx="390.4" cy="188.4" r="5.8" fill="#22aa22" fill-opacity="0.5"/><circle cx="446.9" cy="208.8" r="5.8" fill="#22aa22" fill-opacity="0.5"/><circle cx="419.3" cy="200.1" r="5.8" fill="#22aa22" fill-opacity="0.5"/><circle cx="436.8" cy="197.0" r="5.8" fill="#22aa22" fill-opacity="0.5"/><circle cx="422.6" cy="235.1" r="5.8" fill="#22aa22" fill-opacity="0.5"/><circle cx="471.3" cy="206.0" r="5.8" fill="#22aa22" fill-opacity="0.5"/><circle cx="389.2" cy="220.3" r="5.8" fill="#22aa22" fill-opacity="0.5"/><circle cx="435.7" cy="226.2" r="5.8" fill="#22aa22" fill-opacity="0.5"/><circle cx="438.9" cy="199.2" r="5.8" fill="#22aa22" fill-opacity="0.5"/><circle cx="436.3" cy="224.5" r="5.8" fill="#22aa22" fill-opacity="0.5"/><circle cx="455.5" cy="189.3" r="5.8" fill="#22aa22" fill-opacity="0.5"/><circle cx="447.7" cy="200.4" r="5.8" fill="#22aa22" fill-opacity="0.5"/><circle cx="417.0" cy="201.3" r="5.8" fill="#22aa22" fill-opacity="0.5"/><circle cx="403.3" cy="234.1" r="5.8" fill="#22aa22" fill-opacity="0.5"/><circle cx="434.7" cy="207.1" r="5.8" fill="#22aa22" fill-opacity="0.5"/><circle cx="420.8" cy="200.9" r="5.8" fill="#22aa22" fill-opacity="0.5"/><circle cx="417.7" cy="206.1" r="5.8" fill="#22aa22" fill-opacity="0.5"/><circle cx="436.2" cy="219.0" r="5.8" fill="#22aa22" fill-opacity="0.5"/><circle cx="405.2" cy="182.9" r="5.8" fill="#22aa22" fill-opacity="0.5"/><circle cx="436.3" cy="178.5" r="5.8" fill="#22aa22" fill-opacity="0.5"/><circle cx="434.1" cy="198.8" r="5.8" fill="#22aa22" fill-opacity="0.5"/><circle cx="424.5" cy="205.1" r="5.8" fill="#22aa22" fill-opacity="0.5"/><circle cx="403.6" cy="219.3" r="5.8" fill="#22aa22" fill-opacity="0.5"/><circle cx="449.2" cy="197.2" r="5.8" fill="#22aa22" fill-opacity="0.5"/><circle cx="429.5" cy="214.3" r="5.8" fill="#22aa22" fill-opacity="0.5"/><circle cx="414.5" cy="186.3" r="5.8" fill="#22aa22" fill-opacity="0.5"/><circle cx="457.2" cy="160.7" r="5.8" fill="#22aa22" fill-opacity="0.5"/><circle cx="399.4" cy="193.4" r="5.8" fill="#22aa22" fill-opacity="0.5"/><circle cx="444.1" cy="187.7" r="5.8" fill="#22aa22" fill-opacity="0.5"/><circle cx="426.4" cy="241.9" r="5.8" fill="#22aa22" fill-opacity="0.5"/><circle cx="430.3" cy="199.2" r="5.8" fill="#22aa22" fill-opacity="0.5"/><circle cx="434.6" cy="181.9" r="5.8" fill="#22aa22" fill-opacity="0.5"/><circle cx="435.1" cy="205.6" r="5.8" fill="#22aa22" fill-opacity="0.5"/><circle cx="429.9" cy="227.9" r="5.8" fill="#22aa22" fill-opacity="0.5"/><circle cx="425.5" cy="201.6" r="5.8" fill="#22aa22" fill-opacity="0.5"/><circle cx="419.9" cy="229.8" r="5.8" fill="#22aa22" fill-opacity="0.5"/><circle cx="399.2" cy="186.8" r="5.8" fill="#22aa22" fill-opacity="0.5"/><circle cx="413.6" cy="195.5" r="5.8" fill="#22aa22" fill-opacity="0.5"/><circle cx="441.1" cy="205.9" r="5.8" fill="#22aa22" fill-opacity="0.5"/><circle cx="438.4" cy="207.2" r="5.8" fill="#22aa22" fill-opacity="0.5"/><circle cx="417.6" cy="181.7" r="5.8" fill="#22aa22" fill-opacity="0.5"/><circle cx="399.0" cy="191.2" r="5.8" fill="#22aa22" fill-opacity="0.5"/><circle cx="412.9" cy="209.2" r="5.8" fill="#22aa22" fill-opacity="0.5"/><circle cx="450.3" cy="191.1" r="5.8" fill="#22aa22" fill-opacity="0.5"/><circle cx="401.7" cy="199.9" r="5.8" fill="#22aa22" fill-opacity="0.5"/><circle cx="408.4" cy="194.9" r="5.8" fill="#22aa22" fill-opacity="0.5"/><circle cx="440.1" cy="196.6" r="5.8" fill="#22aa22" fill-opacity="0.5"/><circle cx="464.6" cy="199.3" r="5.8" fill="#22aa22" fill-opacity="0.5"/><circle cx="436.9" cy="194.8" r="5.8" fill="#22aa22" fill-opacity="0.5"/><circle cx="374.0" cy="172.9" r="5.8" fill="#22aa22" fill-opacity="0.5"/><circle cx="419.1" cy="206.7" r="5.8" fill="#22aa22" fill-opacity="0.5"/><circle cx="428.8" cy="185.1" r="5.8" fill="#22aa22" fill-opacity="0.5"/><circle cx="418.7" cy="189.2" r="5.8" fill="#22aa22" fill-opacity="0.5"/><circle cx="442.1" cy="199.6" r="5.8" fill="#22aa22" fill-opacity="0.5"/><circle cx="442.9" cy="222.2" r="5.8" fill="#22aa22" fill-opacity="0.5"/><circle cx="405.1" cy="209.7" r="5.8" fill="#22aa22" fill-opacity="0.5"/><circle cx="384.1" cy="181.0" r="5.8" fill="#22aa22" fill-opacity="0.5"/><circle cx="408.7" cy="189.0" r="5.8" fill="#22aa22" fill-opacity="0.5"/><circle cx="447.5" cy="207.3" r="5.8" fill="#22aa22" fill-opacity="0.5"/><circle cx="414.0" cy="218.3" r="5.8" fill="#22aa22" fill-opacity="0.5"/><circle cx="417.9" cy="178.5" r="5.8" fill="#22aa22" fill-opacity="0.5"/><circle cx="439.8" cy="216.1" r="5.8" fill="#22aa22" fill-opacity="0.5"/><circle cx="398.6" cy="189.6" r="5.8" fill="#22aa22" fill-opacity="0.5"/><circle cx="441.7" cy="201.7" r="5.8" fill="#22aa22" fill-opacity="0.5"/><circle cx="417.7" cy="197.4" r="5.8" fill="#22aa22" fill-opacity="0.5"/><circle cx="435.0" cy="188.2" r="5.8" fill="#22aa22" fill-opacity="0.5"/><circle cx="452.7" cy="178.6" r="5.8" fill="#22aa22" fill-opacity="0.5"/><circle cx="409.7" cy="233.3" r="5.8" fill="#22aa22" fill-opacity="0.5"/><circle cx="406.8" cy="189.4" r="5.8" fill="#22aa22" fill-opacity="0.5"/><circle cx="389.9" cy="166.7" r="5.8" fill="#22aa22" fill-opacity="0.5"/><circle cx="404.4" cy="190.3" r="5.8" fill="#22aa22" fill-opacity="0.5"/><circle cx="404.1" cy="225.0" r="5.8" fill="#22aa22" fill-opacity="0.5"/><circle cx="409.3" cy="190.6" r="5.8" fill="#22aa22" fill-opacity="0.5"/><circle cx="425.6" cy="210.7" r="5.8" fill="#22aa22" fill-opacity="0.5"/><circle cx="453.7" cy="179.3" r="5.8" fill="#22aa22" fill-opacity="0.5"/><circle cx="468.8" cy="210.3" r="5.8" fill="#22aa22" fill-opacity="0.5"/><circle cx="424.4" cy="165.3" r="5.8" fill="#22aa22" fill-opacity="0.5"/><circle cx="430.4" cy="165.3" r="5.8" fill="#22aa22" fill-opacity="0.5"/><circle cx="433.8" cy="189.7" r="5.8" fill="#22aa22" fill-opacity="0.5"/><circle cx="437.7" cy="187.7" r="5.8" fill="#22aa22" fill-opacity="0.5"/><circle cx="411.8" cy="235.8" r="5.8" fill="#22aa22" fill-opacity="0.5"/><circle cx="446.6" cy="210.1" r="5.8" fill="#22aa22" fill-opacity="0.5"/><circle cx="397.6" cy="214.9" r="5.8" fill="#22aa22" fill-opacity="0.5"/><circle cx="404.7" cy="161.5" r="5.8" fill="#22aa22" fill-opacity="0.5"/><circle cx="454.3" cy="198.4" r="5.8" fill="#22aa22" fill-opacity="0.5"/><circle cx="447.0" cy="218.3" r="5.8" fill="#22aa22" fill-opacity="0.5"/><circle cx="453.8" cy="244.9" r="5.8" fill="#22aa22" fill-opacity="0.5"/><circle cx="441.3" cy="192.3" r="5.8" fill="#22aa22" fill-opacity="0.5"/><circle cx="427.2" cy="226.2" r="5.8" fill="#22aa22" fill-opacity="0.5"/><circle cx="449.0" cy="151.2" r="5.8" fill="#22aa22" fill-opacity="0.5"/><circle cx="421.7" cy="189.1" r="5.8" fill="#22aa22" fill-opacity="0.5"/><circle cx="427.5" cy="191.9" r="5.8" fill="#22aa22" fill-opacity="0.5"/><circle cx="456.1" cy="186.0" r="5.8" fill="#22aa22" fill-opacity="0.5"/><circle cx="448.2" cy="168.6" r="5.8" fill="#22aa22" fill-opacity="0.5"/><circle cx="393.0" cy="164.3" r="5.8" fill="#22aa22" fill-opacity="0.5"/><circle cx="418.5" cy="177.4" r="5.8" fill="#22aa22" fill-opacity="0.5"/><circle cx="408.8" cy="202.8" r="5.8" fill="#22aa22" fill-opacity="0.5"/><circle cx="436.2" cy="204.0" r="5.8" fill="#22aa22" fill-opacity="0.5"/><circle cx="434.6" cy="188.1" r="5.8" fill="#22aa22" fill-opacity="0.5"/><circle cx="417.8" cy="166.8" r="5.8" fill="#22aa22" fill-opacity="0.5"/><circle cx="426.3" cy="176.0" r="5.8" fill="#22aa22" fill-opacity="0.5"/><circle cx="415.0" cy="207.6" r="5.8" fill="#22aa22" fill-opacity="0.5"/><circle cx="426.9" cy="224.4" r="5.8" fill="#22aa22" fill-opacity="0.5"/><circle cx="424.3" cy="154.3" r="5.8" fill="#22aa22" fill-opacity="0.5"/><circle cx="391.5" cy="222.5" r="5.8" fill="#22aa22" fill-opacity="0.5"/><circle cx="405.9" cy="180.1" r="5.8" fill="#c4c400" fill-opacity="0.4"/><circle cx="414.6" cy="180.6" r="5.8" fill="#c4c400" fill-opacity="0.4"/><circle cx="419.5" cy="180.8" r="5.8" fill="#c4c400" fill-opacity="0.4"/><circle cx="390.3" cy="200.6" r="5.8" fill="#c4c400" fill-opacity="0.4"/><circle cx="380.0" cy="185.1" r="5.8" fill="#c4c400" fill-opacity="0.4"/><circle cx="423.2" cy="195.9" r="5.8" fill="#c4c400" fill-opacity="0.4"/><circle cx="380.5" cy="183.5" r="5.8" fill="#c4c400" fill-opacity="0.4"/><circle cx="395.6" cy="174.4" r="5.8" fill="#c4c400" fill-opacity="0.4"/><circle cx="401.8" cy="210.5" r="5.8" fill="#c4c400" fill-opacity="0.4"/><circle cx="396.7" cy="204.0" r="5.8" fill="#c4c400" fill-opacity="0.4"/><circle cx="400.1" cy="190.5" r="5.8" fill="#c4c400" fill-opacity="0.4"/><circle cx="385.5" cy="205.4" r="5.8" fill="#c4c400" fill-opacity="0.4"/><circle cx="415.0" cy="179.9" r="5.8" fill="#c4c400" fill-opacity="0.4"/><circle cx="383.7" cy="197.4" r="5.8" fill="#c4c400" fill-opacity="0.4"/><circle cx="397.5" cy="208.3" r="5.8" fill="#c4c400" fill-opacity="0.4"/><circle cx="402.9" cy="185.7" r="5.8" fill="#c4c400" fill-opacity="0.4"/><circle cx="376.6" cy="199.2" r="5.8" fill="#c4c400" fill-opacity="0.4"/><circle cx="397.4" cy="165.2" r="5.8" fill="#c4c400" fill-opacity="0.4"/><circle cx="375.1" cy="155.1" r="5.8" fill="#c4c400" fill-opacity="0.4"/><circle cx="404.7" cy="180.1" r="5.8" fill="#c4c400" fill-opacity="0.4"/><circle cx="349.4" cy="172.1" r="5.8" fill="#c4c400" fill-opacity="0.4"/><circle cx="387.1" cy="186.0" r="5.8" fill="#c4c400" fill-opacity="0.4"/><circle cx="396.5" cy="181.9" r="5.8" fill="#c4c400" fill-opacity="0.4"/><circle cx="406.4" cy="206.5" r="5.8" fill="#c4c400" fill-opacity="0.4"/><circle cx="392.8" cy="216.4" r="5.8" fill="#c4c400" fill-opacity="0.4"/><circle cx="407.2" cy="120.1" r="5.8" fill="#2222ff" fill-opacity="0.6"/><circle cx="419.0" cy="117.8" r="5.8" fill="#2222ff" fill-opacity="0.6"/><circle cx="404.5" cy="114.7" r="5.8" fill="#2222ff" fill-opacity="0.6"/><circle cx="390.6" cy="128.1" r="5.8" fill="#2222ff" fill-opacity="0.6"/><circle cx="338.9" cy="96.2" r="5.8" fill="#2222ff" fill-opacity="0.6"/><circle cx="411.3" cy="134.7" r="5.8" fill="#2222ff" fill-opacity="0.6"/><circle cx="417.8" cy="149.3" r="5.8" fill="#2222ff" fill-opacity="0.6"/><circle cx="402.5" cy="114.3" r="5.8" fill="#2222ff" fill-opacity="0.6"/><circle cx="414.7" cy="154.8" r="5.8" fill="#2222ff" fill-opacity="0.6"/><circle cx="372.6" cy="98.9" r="5.8" fill="#2222ff" fill-opacity="0.6"/><circle cx="366.6" cy="123.1" r="5.8" fill="#2222ff" fill-opacity="0.6"/><circle cx="399.3" cy="107.7" r="5.8" fill="#2222ff" fill-opacity="0.6"/><circle cx="436.5" cy="164.1" r="5.8" fill="#2222ff" fill-opacity="0.6"/><circle cx="406.7" cy="139.9" r="5.8" fill="#2222ff" fill-opacity="0.6"/><circle cx="398.2" cy="130.3" r="5.8" fill="#2222ff" fill-opacity="0.6"/><circle cx="421.4" cy="153.6" r="5.8" fill="#2222ff" fill-opacity="0.6"/><circle cx="390.7" cy="126.3" r="5.8" fill="#2222ff" fill-opacity="0.6"/><circle cx="454.1" cy="157.8" r="5.8" fill="#2222ff" fill-opacity="0.6"/><circle cx="369.2" cy="111.9" r="5.8" fill="#2222ff" fill-opacity="0.6"/><circle cx="352.3" cy="146.1" r="5.8" fill="#2222ff" fill-opacity="0.6"/><circle cx="413.4" cy="150.7" r="5.8" fill="#2222ff" fill-opacity="0.6"/><circle cx="395.3" cy="163.6" r="5.8" fill="#2222ff" fill-opacity="0.6"/><circle cx="378.1" cy="114.9" r="5.8" fill="#2222ff" fill-opacity="0.6"/><circle cx="350.9" cy="119.9" r="5.8" fill="#2222ff" fill-opacity="0.6"/><circle cx="386.0" cy="153.5" r="5.8" fill="#2222ff" fill-opacity="0.6"/><circle cx="404.9" cy="115.2" r="5.8" fill="#2222ff" fill-opacity="0.6"/><circle cx="378.6" cy="130.8" r="5.8" fill="#2222ff" fill-opacity="0.6"/><circle cx="380.2" cy="122.0" r="5.8" fill="#2222ff" fill-opacity="0.6"/><circle cx="391.0" cy="111.6" r="5.8" fill="#2222ff" fill-opacity="0.6"/><circle cx="375.1" cy="143.5" r="5.8" fill="#2222ff" fill-opacity="0.6"/><circle cx="373.4" cy="118.5" r="5.8" fill="#2222ff" fill-opacity="0.6"/><circle cx="429.2" cy="137.2" r="5.8" fill="#2222ff" fill-opacity="0.6"/><circle cx="352.6" cy="125.8" r="5.8" fill="#2222ff" fill-opacity="0.6"/><circle cx="448.2" cy="159.2" r="5.8" fill="#2222ff" fill-opacity="0.6"/><circle cx="365.6" cy="123.1" r="5.8" fill="#2222ff" fill-opacity="0.6"/><circle cx="408.9" cy="121.8" r="5.8" fill="#2222ff" fill-opacity="0.6"/><circle cx="413.6" cy="96.4" r="5.8" fill="#2222ff" fill-opacity="0.6"/><circle cx="392.9" cy="103.7" r="5.8" fill="#2222ff" fill-opacity="0.6"/><circle cx="365.0" cy="117.5" r="5.8" fill="#2222ff" fill-opacity="0.6"/><circle cx="395.0" cy="158.4" r="5.8" fill="#2222ff" fill-opacity="0.6"/><circle cx="341.6" cy="78.6" r="5.8" fill="#2222ff" fill-opacity="0.6"/><circle cx="370.5" cy="134.8" r="5.8" fill="#2222ff" fill-opacity="0.6"/><circle cx="427.6" cy="151.8" r="5.8" fill="#2222ff" fill-opacity="0.6"/><circle cx="411.5" cy="124.8" r="5.8" fill="#2222ff" fill-opacity="0.6"/><circle cx="393.7" cy="118.2" r="5.8" fill="#2222ff" fill-opacity="0.6"/><circle cx="323.7" cy="113.2" r="5.8" fill="#2222ff" fill-opacity="0.6"/><circle cx="403.3" cy="171.1" r="5.8" fill="#2222ff" fill-opacity="0.6"/><circle cx="429.4" cy="159.8" r="5.8" fill="#2222ff" fill-opacity="0.6"/><circle cx="438.0" cy="125.7" r="5.8" fill="#2222ff" fill-opacity="0.6"/><circle cx="370.2" cy="125.9" r="5.8" fill="#2222ff" fill-opacity="0.6"/><circle cx="407.1" cy="105.9" r="5.8" fill="#2222ff" fill-opacity="0.6"/><circle cx="413.5" cy="116.3" r="5.8" fill="#2222ff" fill-opacity="0.6"/><circle cx="389.4" cy="152.1" r="5.8" fill="#2222ff" fill-opacity="0.6"/><circle cx="378.2" cy="107.5" r="5.8" fill="#2222ff" fill-opacity="0.6"/><circle cx="416.7" cy="141.6" r="5.8" fill="#2222ff" fill-opacity="0.6"/><circle cx="414.6" cy="125.1" r="5.8" fill="#2222ff" fill-opacity="0.6"/><circle cx="414.6" cy="96.9" r="5.8" fill="#2222ff" fill-opacity="0.6"/><circle cx="387.3" cy="145.5" r="5.8" fill="#2222ff" fill-opacity="0.6"/><circle cx="376.3" cy="110.9" r="5.8" fill="#2222ff" fill-opacity="0.6"/><circle cx="410.0" cy="159.9" r="5.8" fill="#2222ff" fill-opacity="0.6"/><circle cx="439.4" cy="141.3" r="5.8" fill="#2222ff" fill-opacity="0.6"/><circle cx="377.2" cy="147.3" r="5.8" fill="#2222ff" fill-opacity="0.6"/><circle cx="388.6" cy="128.0" r="5.8" fill="#2222ff" fill-opacity="0.6"/><circle cx="387.2" cy="109.7" r="5.8" fill="#2222ff" fill-opacity="0.6"/><circle cx="333.0" cy="74.7" r="5.8" fill="#2222ff" fill-opacity="0.6"/><circle cx="356.3" cy="82.0" r="5.8" fill="#2222ff" fill-opacity="0.6"/><circle cx="366.5" cy="132.5" r="5.8" fill="#2222ff" fill-opacity="0.6"/><circle cx="418.4" cy="150.5" r="5.8" fill="#2222ff" fill-opacity="0.6"/><circle cx="401.6" cy="106.0" r="5.8" fill="#2222ff" fill-opacity="0.6"/><circle cx="421.8" cy="130.2" r="5.8" fill="#2222ff" fill-opacity="0.6"/><circle cx="391.7" cy="142.2" r="5.8" fill="#2222ff" fill-opacity="0.6"/><circle cx="398.1" cy="128.7" r="5.8" fill="#2222ff" fill-opacity="0.6"/><circle cx="368.7" cy="128.4" r="5.8" fill="#2222ff" fill-opacity="0.6"/><circle cx="409.8" cy="150.3" r="5.8" fill="#2222ff" fill-opacity="0.6"/><circle cx="457.3" cy="139.8" r="5.8" fill="#2222ff" fill-opacity="0.6"/><circle cx="397.7" cy="140.8" r="5.8" fill="#2222ff" fill-opacity="0.6"/><circle cx="408.3" cy="141.8" r="5.8" fill="#2222ff" fill-opacity="0.6"/><circle cx="427.4" cy="121.1" r="5.8" fill="#2222ff" fill-opacity="0.6"/><circle cx="390.6" cy="145.5" r="5.8" fill="#2222ff" fill-opacity="0.6"/><circle cx="402.9" cy="128.9" r="5.8" fill="#2222ff" fill-opacity="0.6"/><circle cx="438.8" cy="124.8" r="5.8" fill="#2222ff" fill-opacity="0.6"/><circle cx="399.5" cy="158.1" r="5.8" fill="#2222ff" fill-opacity="0.6"/><circle cx="403.3" cy="117.5" r="5.8" fill="#2222ff" fill-opacity="0.6"/><circle cx="419.7" cy="135.6" r="5.8" fill="#2222ff" fill-opacity="0.6"/><circle cx="380.6" cy="120.3" r="5.8" fill="#2222ff" fill-opacity="0.6"/><circle cx="355.2" cy="112.1" r="5.8" fill="#2222ff" fill-opacity="0.6"/><circle cx="377.2" cy="104.8" r="5.8" fill="#2222ff" fill-opacity="0.6"/><circle cx="421.0" cy="144.3" r="5.8" fill="#2222ff" fill-opacity="0.6"/><circle cx="397.3" cy="154.0" r="5.8" fill="#2222ff" fill-opacity="0.6"/><circle cx="422.8" cy="184.5" r="5.8" fill="#2222ff" fill-opacity="0.6"/><circle cx="380.9" cy="134.3" r="5.8" fill="#2222ff" fill-opacity="0.6"/><circle cx="354.2" cy="113.9" r="5.8" fill="#2222ff" fill-opacity="0.6"/><circle cx="441.5" cy="145.5" r="5.8" fill="#2222ff" fill-opacity="0.6"/><circle cx="407.0" cy="150.7" r="5.8" fill="#2222ff" fill-opacity="0.6"/><circle cx="404.0" cy="121.5" r="5.8" fill="#2222ff" fill-opacity="0.6"/><circle cx="451.7" cy="141.6" r="5.8" fill="#2222ff" fill-opacity="0.6"/><circle cx="398.5" cy="147.0" r="5.8" fill="#2222ff" fill-opacity="0.6"/><circle cx="394.9" cy="156.1" r="5.8" fill="#2222ff" fill-opacity="0.6"/><circle cx="435.7" cy="163.6" r="5.8" fill="#2222ff" fill-opacity="0.6"/><circle cx="440.6" cy="172.1" r="5.8" fill="#2222ff" fill-opacity="0.6"/><circle cx="374.5" cy="107.0" r="5.8" fill="#2222ff" fill-opacity="0.6"/><circle cx="407.7" cy="139.3" r="5.8" fill="#2222ff" fill-opacity="0.6"/><circle cx="340.3" cy="132.0" r="5.8" fill="#2222ff" fill-opacity="0.6"/><circle cx="373.1" cy="91.2" r="5.8" fill="#2222ff" fill-opacity="0.6"/><circle cx="412.1" cy="142.5" r="5.8" fill="#2222ff" fill-opacity="0.6"/><circle cx="439.2" cy="161.5" r="5.8" fill="#2222ff" fill-opacity="0.6"/><circle cx="405.8" cy="147.9" r="5.8" fill="#2222ff" fill-opacity="0.6"/><circle cx="395.3" cy="103.4" r="5.8" fill="#2222ff" fill-opacity="0.6"/><circle cx="382.2" cy="137.1" r="5.8" fill="#2222ff" fill-opacity="0.6"/><circle cx="384.7" cy="143.1" r="5.8" fill="#2222ff" fill-opacity="0.6"/><circle cx="382.3" cy="132.3" r="5.8" fill="#2222ff" fill-opacity="0.6"/><circle cx="396.1" cy="143.4" r="5.8" fill="#2222ff" fill-opacity="0.6"/><circle cx="401.2" cy="135.0" r="5.8" fill="#2222ff" fill-opacity="0.6"/><circle cx="380.2" cy="140.0" r="5.8" fill="#2222ff" fill-opacity="0.6"/><circle cx="397.5" cy="138.0" r="5.8" fill="#2222ff" fill-opacity="0.6"/><circle cx="426.7" cy="132.3" r="5.8" fill="#2222ff" fill-opacity="0.6"/><circle cx="382.2" cy="117.6" r="5.8" fill="#2222ff" fill-opacity="0.6"/><circle cx="443.7" cy="141.0" r="5.8" fill="#2222ff" fill-opacity="0.6"/><circle cx="385.6" cy="102.5" r="5.8" fill="#2222ff" fill-opacity="0.6"/><circle cx="402.0" cy="112.3" r="5.8" fill="#2222ff" fill-opacity="0.6"/><circle cx="377.6" cy="125.0" r="5.8" fill="#2222ff" fill-opacity="0.6"/><circle cx="375.4" cy="113.6" r="5.8" fill="#2222ff" fill-opacity="0.6"/><circle cx="374.8" cy="109.7" r="5.8" fill="#2222ff" fill-opacity="0.6"/><circle cx="432.9" cy="116.2" r="5.8" fill="#2222ff" fill-opacity="0.6"/><circle cx="402.1" cy="136.2" r="5.8" fill="#2222ff" fill-opacity="0.6"/><circle cx="399.0" cy="134.6" r="5.8" fill="#2222ff" fill-opacity="0.6"/><circle cx="424.2" cy="123.3" r="5.8" fill="#2222ff" fill-opacity="0.6"/><circle cx="394.0" cy="138.4" r="5.8" fill="#2222ff" fill-opacity="0.6"/><circle cx="446.8" cy="137.5" r="5.8" fill="#2222ff" fill-opacity="0.6"/><circle cx="399.5" cy="105.1" r="5.8" fill="#2222ff" fill-opacity="0.6"/><circle cx="411.4" cy="118.7" r="5.8" fill="#2222ff" fill-opacity="0.6"/><circle cx="371.4" cy="125.3" r="5.8" fill="#2222ff" fill-opacity="0.6"/><circle cx="476.6" cy="145.1" r="5.8" fill="#2222ff" fill-opacity="0.6"/><circle cx="451.8" cy="149.2" r="5.8" fill="#2222ff" fill-opacity="0.6"/><circle cx="416.8" cy="148.6" r="5.8" fill="#2222ff" fill-opacity="0.6"/><circle cx="435.4" cy="151.1" r="5.8" fill="#2222ff" fill-opacity="0.6"/><circle cx="382.4" cy="117.5" r="5.8" fill="#2222ff" fill-opacity="0.6"/><circle cx="430.1" cy="134.8" r="5.8" fill="#2222ff" fill-opacity="0.6"/><circle cx="413.0" cy="139.4" r="5.8" fill="#2222ff" fill-opacity="0.6"/><circle cx="407.1" cy="135.7" r="5.8" fill="#2222ff" fill-opacity="0.6"/><circle cx="410.9" cy="152.9" r="5.8" fill="#2222ff" fill-opacity="0.6"/><circle cx="398.5" cy="123.1" r="5.8" fill="#2222ff" fill-opacity="0.6"/><circle cx="356.5" cy="84.7" r="5.8" fill="#2222ff" fill-opacity="0.6"/><circle cx="358.8" cy="114.9" r="5.8" fill="#2222ff" fill-opacity="0.6"/><circle cx="381.7" cy="105.3" r="5.8" fill="#2222ff" fill-opacity="0.6"/><circle cx="407.5" cy="154.0" r="5.8" fill="#2222ff" fill-opacity="0.6"/><circle cx="440.5" cy="142.7" r="5.8" fill="#2222ff" fill-opacity="0.6"/><circle cx="399.6" cy="150.0" r="5.8" fill="#2222ff" fill-opacity="0.6"/><circle cx="383.5" cy="115.2" r="5.8" fill="#2222ff" fill-opacity="0.6"/><circle cx="377.7" cy="103.7" r="5.8" fill="#2222ff" fill-opacity="0.6"/><circle cx="419.7" cy="145.8" r="5.8" fill="#2222ff" fill-opacity="0.6"/><circle cx="398.4" cy="119.3" r="5.8" fill="#2222ff" fill-opacity="0.6"/><circle cx="434.3" cy="168.0" r="5.8" fill="#2222ff" fill-opacity="0.6"/><circle cx="353.2" cy="138.5" r="5.8" fill="#2222ff" fill-opacity="0.6"/><circle cx="393.7" cy="123.6" r="5.8" fill="#2222ff" fill-opacity="0.6"/><circle cx="395.4" cy="117.1" r="5.8" fill="#2222ff" fill-opacity="0.6"/><circle cx="431.1" cy="125.4" r="5.8" fill="#2222ff" fill-opacity="0.6"/><circle cx="406.3" cy="129.1" r="5.8" fill="#2222ff" fill-opacity="0.6"/><circle cx="443.0" cy="167.3" r="5.8" fill="#2222ff" fill-opacity="0.6"/><circle cx="409.2" cy="146.6" r="5.8" fill="#2222ff" fill-opacity="0.6"/><circle cx="416.6" cy="144.3" r="5.8" fill="#2222ff" fill-opacity="0.6"/><circle cx="338.0" cy="96.1" r="5.8" fill="#2222ff" fill-opacity="0.6"/><circle cx="388.8" cy="136.0" r="5.8" fill="#2222ff" fill-opacity="0.6"/><circle cx="415.2" cy="131.1" r="5.8" fill="#2222ff" fill-opacity="0.6"/><circle cx="389.2" cy="104.7" r="5.8" fill="#2222ff" fill-opacity="0.6"/><circle cx="410.8" cy="136.2" r="5.8" fill="#2222ff" fill-opacity="0.6"/><circle cx="383.8" cy="112.9" r="5.8" fill="#2222ff" fill-opacity="0.6"/><circle cx="417.2" cy="130.3" r="5.8" fill="#2222ff" fill-opacity="0.6"/><circle cx="404.8" cy="122.9" r="5.8" fill="#2222ff" fill-opacity="0.6"/><circle cx="337.3" cy="89.5" r="5.8" fill="#2222ff" fill-opacity="0.6"/><circle cx="397.4" cy="143.9" r="5.8" fill="#2222ff" fill-opacity="0.6"/><circle cx="441.5" cy="145.9" r="5.8" fill="#2222ff" fill-opacity="0.6"/><circle cx="415.4" cy="146.2" r="5.8" fill="#2222ff" fill-opacity="0.6"/><circle cx="397.7" cy="144.3" r="5.8" fill="#2222ff" fill-opacity="0.6"/><circle cx="435.4" cy="131.8" r="5.8" fill="#2222ff" fill-opacity="0.6"/><circle cx="441.2" cy="155.7" r="5.8" fill="#2222ff" fill-opacity="0.6"/><circle cx="392.1" cy="112.7" r="5.8" fill="#2222ff" fill-opacity="0.6"/><circle cx="406.8" cy="114.8" r="5.8" fill="#2222ff" fill-opacity="0.6"/><circle cx="426.3" cy="156.6" r="5.8" fill="#2222ff" fill-opacity="0.6"/><circle cx="373.3" cy="127.6" r="5.8" fill="#2222ff" fill-opacity="0.6"/><circle cx="408.0" cy="137.7" r="5.8" fill="#2222ff" fill-opacity="0.6"/><circle cx="427.6" cy="147.9" r="5.8" fill="#2222ff" fill-opacity="0.6"/><circle cx="392.0" cy="134.5" r="5.8" fill="#2222ff" fill-opacity="0.6"/><circle cx="367.4" cy="86.5" r="5.8" fill="#2222ff" fill-opacity="0.6"/><circle cx="406.3" cy="154.7" r="5.8" fill="#2222ff" fill-opacity="0.6"/><circle cx="360.8" cy="104.2" r="5.8" fill="#2222ff" fill-opacity="0.6"/><circle cx="388.7" cy="117.9" r="5.8" fill="#2222ff" fill-opacity="0.6"/><circle cx="405.1" cy="161.5" r="5.8" fill="#2222ff" fill-opacity="0.6"/><circle cx="438.7" cy="174.6" r="5.8" fill="#2222ff" fill-opacity="0.6"/><circle cx="417.6" cy="145.4" r="5.8" fill="#2222ff" fill-opacity="0.6"/><circle cx="353.0" cy="105.8" r="5.8" fill="#2222ff" fill-opacity="0.6"/><circle cx="382.6" cy="98.5" r="5.8" fill="#2222ff" fill-opacity="0.6"/><circle cx="419.3" cy="115.1" r="5.8" fill="#2222ff" fill-opacity="0.6"/><circle cx="441.8" cy="170.4" r="5.8" fill="#2222ff" fill-opacity="0.6"/><circle cx="407.8" cy="144.9" r="5.8" fill="#2222ff" fill-opacity="0.6"/><circle cx="408.3" cy="137.6" r="5.8" fill="#2222ff" fill-opacity="0.6"/><circle cx="426.1" cy="136.4" r="5.8" fill="#2222ff" fill-opacity="0.6"/><circle cx="408.2" cy="139.5" r="5.8" fill="#2222ff" fill-opacity="0.6"/><circle cx="431.6" cy="132.3" r="5.8" fill="#2222ff" fill-opacity="0.6"/><circle cx="410.1" cy="135.3" r="5.8" fill="#2222ff" fill-opacity="0.6"/><circle cx="413.9" cy="150.2" r="5.8" fill="#2222ff" fill-opacity="0.6"/><circle cx="403.5" cy="141.6" r="5.8" fill="#2222ff" fill-opacity="0.6"/><circle cx="402.3" cy="157.3" r="5.8" fill="#2222ff" fill-opacity="0.6"/><circle cx="405.9" cy="144.6" r="5.8" fill="#2222ff" fill-opacity="0.6"/><circle cx="381.4" cy="114.3" r="5.8" fill="#2222ff" fill-opacity="0.6"/><circle cx="413.1" cy="158.9" r="5.8" fill="#2222ff" fill-opacity="0.6"/><circle cx="378.9" cy="115.6" r="5.8" fill="#2222ff" fill-opacity="0.6"/><circle cx="395.7" cy="128.8" r="5.8" fill="#2222ff" fill-opacity="0.6"/><circle cx="394.5" cy="119.3" r="5.8" fill="#2222ff" fill-opacity="0.6"/><circle cx="400.3" cy="133.3" r="5.8" fill="#2222ff" fill-opacity="0.6"/><circle cx="435.4" cy="139.5" r="5.8" fill="#2222ff" fill-opacity="0.6"/><circle cx="372.3" cy="126.2" r="5.8" fill="#2222ff" fill-opacity="0.6"/><circle cx="416.9" cy="138.9" r="5.8" fill="#2222ff" fill-opacity="0.6"/><circle cx="365.2" cy="126.2" r="5.8" fill="#2222ff" fill-opacity="0.6"/><circle cx="366.5" cy="128.5" r="5.8" fill="#2222ff" fill-opacity="0.6"/><circle cx="410.3" cy="135.2" r="5.8" fill="#2222ff" fill-opacity="0.6"/><circle cx="391.7" cy="140.0" r="5.8" fill="#2222ff" fill-opacity="0.6"/><circle cx="417.9" cy="111.4" r="5.8" fill="#2222ff" fill-opacity="0.6"/><circle cx="403.7" cy="94.2" r="5.8" fill="#2222ff" fill-opacity="0.6"/><circle cx="404.9" cy="151.0" r="5.8" fill="#2222ff" fill-opacity="0.6"/><circle cx="439.9" cy="133.6" r="5.8" fill="#2222ff" fill-opacity="0.6"/><circle cx="440.1" cy="191.4" r="5.8" fill="#2222ff" fill-opacity="0.6"/><circle cx="417.0" cy="106.2" r="5.8" fill="#2222ff" fill-opacity="0.6"/><circle cx="372.3" cy="130.9" r="5.8" fill="#2222ff" fill-opacity="0.6"/><circle cx="458.8" cy="161.2" r="5.8" fill="#2222ff" fill-opacity="0.6"/><circle cx="365.3" cy="89.4" r="5.8" fill="#2222ff" fill-opacity="0.6"/><circle cx="450.4" cy="165.2" r="5.8" fill="#2222ff" fill-opacity="0.6"/><circle cx="385.8" cy="82.9" r="5.8" fill="#2222ff" fill-opacity="0.6"/><circle cx="411.8" cy="153.6" r="5.8" fill="#2222ff" fill-opacity="0.6"/><circle cx="392.7" cy="122.1" r="5.8" fill="#2222ff" fill-opacity="0.6"/><circle cx="407.7" cy="129.8" r="5.8" fill="#2222ff" fill-opacity="0.6"/><circle cx="394.1" cy="116.3" r="5.8" fill="#2222ff" fill-opacity="0.6"/><circle cx="377.7" cy="138.0" r="5.8" fill="#2222ff" fill-opacity="0.6"/><circle cx="404.1" cy="152.2" r="5.8" fill="#2222ff" fill-opacity="0.6"/><circle cx="467.9" cy="135.6" r="5.8" fill="#2222ff" fill-opacity="0.6"/><circle cx="393.1" cy="143.5" r="5.8" fill="#2222ff" fill-opacity="0.6"/><circle cx="402.6" cy="121.7" r="5.8" fill="#2222ff" fill-opacity="0.6"/><circle cx="417.2" cy="132.9" r="5.8" fill="#2222ff" fill-opacity="0.6"/><circle cx="384.6" cy="114.6" r="5.8" fill="#2222ff" fill-opacity="0.6"/><circle cx="404.1" cy="133.8" r="5.8" fill="#2222ff" fill-opacity="0.6"/><circle cx="425.0" cy="148.2" r="5.8" fill="#2222ff" fill-opacity="0.6"/><circle cx="365.2" cy="162.5" r="5.8" fill="#2222ff" fill-opacity="0.6"/><circle cx="399.5" cy="125.5" r="5.8" fill="#2222ff" fill-opacity="0.6"/><circle cx="405.2" cy="121.6" r="5.8" fill="#2222ff" fill-opacity="0.6"/><circle cx="362.0" cy="108.4" r="5.8" fill="#2222ff" fill-opacity="0.6"/><circle cx="454.5" cy="134.9" r="5.8" fill="#2222ff" fill-opacity="0.6"/><circle cx="380.4" cy="125.1" r="5.8" fill="#2222ff" fill-opacity="0.6"/><circle cx="381.4" cy="127.7" r="5.8" fill="#2222ff" fill-opacity="0.6"/><circle cx="411.0" cy="118.2" r="5.8" fill="#2222ff" fill-opacity="0.6"/><circle cx="401.9" cy="122.6" r="5.8" fill="#2222ff" fill-opacity="0.6"/><circle cx="437.9" cy="110.4" r="5.8" fill="#2222ff" fill-opacity="0.6"/><circle cx="401.8" cy="156.2" r="5.8" fill="#2222ff" fill-opacity="0.6"/><circle cx="404.6" cy="138.2" r="5.8" fill="#2222ff" fill-opacity="0.6"/><circle cx="386.7" cy="127.8" r="5.8" fill="#2222ff" fill-opacity="0.6"/><circle cx="410.1" cy="114.3" r="5.8" fill="#2222ff" fill-opacity="0.6"/><circle cx="393.1" cy="83.8" r="5.8" fill="#2222ff" fill-opacity="0.6"/><circle cx="412.1" cy="142.2" r="5.8" fill="#2222ff" fill-opacity="0.6"/><circle cx="427.7" cy="154.4" r="5.8" fill="#2222ff" fill-opacity="0.6"/><circle cx="431.4" cy="127.8" r="5.8" fill="#2222ff" fill-opacity="0.6"/><circle cx="361.4" cy="93.9" r="5.8" fill="#2222ff" fill-opacity="0.6"/><circle cx="391.6" cy="131.6" r="5.8" fill="#2222ff" fill-opacity="0.6"/><circle cx="400.9" cy="128.4" r="5.8" fill="#2222ff" fill-opacity="0.6"/><circle cx="401.7" cy="136.6" r="5.8" fill="#2222ff" fill-opacity="0.6"/><circle cx="405.1" cy="140.1" r="5.8" fill="#2222ff" fill-opacity="0.6"/><circle cx="391.2" cy="123.0" r="5.8" fill="#2222ff" fill-opacity="0.6"/><circle cx="375.8" cy="93.9" r="5.8" fill="#2222ff" fill-opacity="0.6"/><circle cx="392.4" cy="133.4" r="5.8" fill="#2222ff" fill-opacity="0.6"/><circle cx="396.0" cy="102.4" r="5.8" fill="#2222ff" fill-opacity="0.6"/><circle cx="433.6" cy="138.6" r="5.8" fill="#2222ff" fill-opacity="0.6"/><circle cx="368.4" cy="91.4" r="5.8" fill="#2222ff" fill-opacity="0.6"/><circle cx="393.9" cy="82.5" r="5.8" fill="#2222ff" fill-opacity="0.6"/><circle cx="378.9" cy="147.1" r="5.8" fill="#2222ff" fill-opacity="0.6"/><circle cx="391.4" cy="109.9" r="5.8" fill="#2222ff" fill-opacity="0.6"/><circle cx="430.5" cy="153.2" r="5.8" fill="#2222ff" fill-opacity="0.6"/><circle cx="388.7" cy="147.8" r="5.8" fill="#2222ff" fill-opacity="0.6"/><circle cx="374.1" cy="111.9" r="5.8" fill="#2222ff" fill-opacity="0.6"/><circle cx="413.6" cy="143.8" r="5.8" fill="#2222ff" fill-opacity="0.6"/><circle cx="381.6" cy="101.3" r="5.8" fill="#2222ff" fill-opacity="0.6"/><circle cx="447.7" cy="161.7" r="5.8" fill="#2222ff" fill-opacity="0.6"/><circle cx="387.1" cy="141.6" r="5.8" fill="#2222ff" fill-opacity="0.6"/><circle cx="358.9" cy="101.6" r="5.8" fill="#2222ff" fill-opacity="0.6"/><circle cx="347.3" cy="120.1" r="5.8" fill="#2222ff" fill-opacity="0.6"/><circle cx="377.3" cy="117.3" r="5.8" fill="#2222ff" fill-opacity="0.6"/><circle cx="378.9" cy="118.7" r="5.8" fill="#2222ff" fill-opacity="0.6"/><circle cx="410.6" cy="138.2" r="5.8" fill="#2222ff" fill-opacity="0.6"/><circle cx="392.8" cy="130.4" r="5.8" fill="#2222ff" fill-opacity="0.6"/><circle cx="401.2" cy="122.4" r="5.8" fill="#2222ff" fill-opacity="0.6"/><circle cx="411.2" cy="154.0" r="5.8" fill="#2222ff" fill-opacity="0.6"/><circle cx="377.9" cy="97.4" r="5.8" fill="#2222ff" fill-opacity="0.6"/><circle cx="381.1" cy="123.2" r="5.8" fill="#2222ff" fill-opacity="0.6"/><circle cx="354.9" cy="128.2" r="5.8" fill="#2222ff" fill-opacity="0.6"/><circle cx="402.6" cy="135.4" r="5.8" fill="#2222ff" fill-opacity="0.6"/><circle cx="430.8" cy="138.3" r="5.8" fill="#2222ff" fill-opacity="0.6"/><circle cx="408.6" cy="144.1" r="5.8" fill="#2222ff" fill-opacity="0.6"/><circle cx="443.7" cy="141.7" r="5.8" fill="#2222ff" fill-opacity="0.6"/><circle cx="432.1" cy="163.7" r="5.8" fill="#2222ff" fill-opacity="0.6"/><circle cx="400.1" cy="150.3" r="5.8" fill="#2222ff" fill-opacity="0.6"/><circle cx="398.4" cy="126.2" r="5.8" fill="#2222ff" fill-opacity="0.6"/><circle cx="426.6" cy="142.7" r="5.8" fill="#2222ff" fill-opacity="0.6"/><circle cx="418.1" cy="168.2" r="5.8" fill="#2222ff" fill-opacity="0.6"/><circle cx="406.8" cy="138.8" r="5.8" fill="#2222ff" fill-opacity="0.6"/><circle cx="394.7" cy="110.6" r="5.8" fill="#2222ff" fill-opacity="0.6"/><circle cx="447.3" cy="144.5" r="5.8" fill="#2222ff" fill-opacity="0.6"/><circle cx="402.6" cy="138.0" r="5.8" fill="#2222ff" fill-opacity="0.6"/><circle cx="386.5" cy="109.3" r="5.8" fill="#2222ff" fill-opacity="0.6"/><circle cx="367.6" cy="147.3" r="5.8" fill="#2222ff" fill-opacity="0.6"/><circle cx="400.4" cy="156.4" r="5.8" fill="#2222ff" fill-opacity="0.6"/><circle cx="444.7" cy="179.9" r="5.8" fill="#2222ff" fill-opacity="0.6"/><circle cx="439.3" cy="149.9" r="5.8" fill="#2222ff" fill-opacity="0.6"/><circle cx="373.7" cy="139.3" r="5.8" fill="#2222ff" fill-opacity="0.6"/><circle cx="447.8" cy="145.2" r="5.8" fill="#2222ff" fill-opacity="0.6"/><circle cx="428.8" cy="156.1" r="5.8" fill="#2222ff" fill-opacity="0.6"/><circle cx="414.7" cy="158.6" r="5.8" fill="#2222ff" fill-opacity="0.6"/><circle cx="455.4" cy="157.6" r="5.8" fill="#2222ff" fill-opacity="0.6"/><circle cx="392.5" cy="148.8" r="5.8" fill="#2222ff" fill-opacity="0.6"/><circle cx="392.1" cy="135.6" r="5.8" fill="#2222ff" fill-opacity="0.6"/><circle cx="415.6" cy="111.0" r="5.8" fill="#2222ff" fill-opacity="0.6"/><circle cx="382.0" cy="134.9" r="5.8" fill="#2222ff" fill-opacity="0.6"/><circle cx="402.7" cy="105.1" r="5.8" fill="#2222ff" fill-opacity="0.6"/><circle cx="389.9" cy="126.1" r="5.8" fill="#2222ff" fill-opacity="0.6"/><circle cx="412.5" cy="145.8" r="5.8" fill="#2222ff" fill-opacity="0.6"/><circle cx="425.2" cy="129.3" r="5.8" fill="#2222ff" fill-opacity="0.6"/><circle cx="394.8" cy="113.8" r="5.8" fill="#2222ff" fill-opacity="0.6"/><circle cx="388.7" cy="131.5" r="5.8" fill="#2222ff" fill-opacity="0.6"/><circle cx="438.2" cy="153.1" r="5.8" fill="#2222ff" fill-opacity="0.6"/><circle cx="420.1" cy="165.2" r="5.8" fill="#2222ff" fill-opacity="0.6"/><circle cx="381.9" cy="104.1" r="5.8" fill="#2222ff" fill-opacity="0.6"/><circle cx="418.7" cy="119.1" r="5.8" fill="#2222ff" fill-opacity="0.6"/><circle cx="465.4" cy="142.0" r="5.8" fill="#2222ff" fill-opacity="0.6"/><circle cx="366.4" cy="122.5" r="5.8" fill="#2222ff" fill-opacity="0.6"/><circle cx="378.9" cy="129.8" r="5.8" fill="#2222ff" fill-opacity="0.6"/><circle cx="370.1" cy="130.0" r="5.8" fill="#2222ff" fill-opacity="0.6"/><circle cx="382.8" cy="132.7" r="5.8" fill="#2222ff" fill-opacity="0.6"/><circle cx="440.8" cy="132.1" r="5.8" fill="#2222ff" fill-opacity="0.6"/><circle cx="396.3" cy="97.1" r="5.8" fill="#2222ff" fill-opacity="0.6"/><circle cx="368.2" cy="126.3" r="5.8" fill="#2222ff" fill-opacity="0.6"/><circle cx="395.5" cy="143.7" r="5.8" fill="#2222ff" fill-opacity="0.6"/><circle cx="429.8" cy="170.6" r="5.8" fill="#2222ff" fill-opacity="0.6"/><circle cx="424.9" cy="140.7" r="5.8" fill="#2222ff" fill-opacity="0.6"/><circle cx="391.2" cy="131.2" r="5.8" fill="#2222ff" fill-opacity="0.6"/><circle cx="415.7" cy="161.9" r="5.8" fill="#2222ff" fill-opacity="0.6"/><circle cx="413.3" cy="135.3" r="5.8" fill="#2222ff" fill-opacity="0.6"/><circle cx="387.5" cy="153.1" r="5.8" fill="#2222ff" fill-opacity="0.6"/><circle cx="393.5" cy="163.3" r="5.8" fill="#2222ff" fill-opacity="0.6"/><circle cx="378.5" cy="132.6" r="5.8" fill="#2222ff" fill-opacity="0.6"/><circle cx="402.4" cy="147.0" r="5.8" fill="#2222ff" fill-opacity="0.6"/><circle cx="382.1" cy="125.4" r="5.8" fill="#2222ff" fill-opacity="0.6"/><circle cx="404.3" cy="129.4" r="5.8" fill="#2222ff" fill-opacity="0.6"/><circle cx="386.0" cy="96.3" r="5.8" fill="#2222ff" fill-opacity="0.6"/><circle cx="390.7" cy="135.1" r="5.8" fill="#2222ff" fill-opacity="0.6"/><circle cx="407.9" cy="141.4" r="5.8" fill="#2222ff" fill-opacity="0.6"/><circle cx="422.9" cy="122.8" r="5.8" fill="#2222ff" fill-opacity="0.6"/><circle cx="429.2" cy="152.8" r="5.8" fill="#2222ff" fill-opacity="0.6"/><circle cx="389.6" cy="114.6" r="5.8" fill="#2222ff" fill-opacity="0.6"/><circle cx="426.3" cy="153.1" r="5.8" fill="#2222ff" fill-opacity="0.6"/><circle cx="344.8" cy="131.9" r="5.8" fill="#2222ff" fill-opacity="0.6"/><circle cx="352.6" cy="130.2" r="5.8" fill="#2222ff" fill-opacity="0.6"/><circle cx="433.0" cy="136.0" r="5.8" fill="#2222ff" fill-opacity="0.6"/><circle cx="423.7" cy="170.6" r="5.8" fill="#2222ff" fill-opacity="0.6"/><circle cx="423.9" cy="159.7" r="5.8" fill="#2222ff" fill-opacity="0.6"/></g>
<text x="177.39999999999992" y="51" font-size="42.5" font-weight="bold" fill="#1e1e1e" textLength="189.5" lengthAdjust="spacingAndGlyphs">Wind: 162</text>
<text x="239.5999999999999" y="448.2" font-size="36.5" font-weight="bold" fill="#1e1e1e" textLength="66" lengthAdjust="spacingAndGlyphs">5kts</text>
<text x="6.800000000000182" y="532.7" font-size="20.5" font-weight="bold" fill="#1e1e1e">SWD: 162</text>
<rect x="337" y="491.5" width="117" height="41" rx="4" fill="#000" fill-opacity="0.08"/>
<rect x="336" y="490" width="117" height="40.5" rx="4" fill="#d8d8d8"/>
<text x="347.5" y="519.5" font-size="23.5" fill="#1e1e1e" stroke="#1e1e1e" stroke-width="0.35" textLength="93" lengthAdjust="spacingAndGlyphs">SHUFFLE</text>
</svg></div>
<div style="position:absolute;left:0px;top:1138px;width:2309px;height:406px;box-sizing:border-box;border:3.5px solid #1c1c1c;border-radius:13px;background:#eeeeee;overflow:hidden">
<svg width="2309" height="406" viewBox="3.5 1141.5 2309 406" style="position:absolute;left:0;top:0" font-family='"Liberation Sans", sans-serif' font-weight="bold">
<path d="M165.0,1138V1544M327.1,1138V1544M489.2,1138V1544M651.3,1138V1544M813.4,1138V1544M975.5,1138V1544M1137.6,1138V1544M1299.7,1138V1544M1461.8,1138V1544M1623.9,1138V1544M1786.0,1138V1544M1948.1,1138V1544M2110.2,1138V1544M2272.3,1138V1544M0,1184.9H2309M0,1233.2H2309M0,1281.5H2309M0,1329.8H2309M0,1378.1H2309M0,1426.4H2309M0,1474.7H2309M0,1523.0H2309" stroke="#b4b4b4" stroke-width="3.5" fill="none"/>
<text x="1090" y="1386.5" font-size="120" fill="#8c8c8c" fill-opacity="0.78" textLength="126" lengthAdjust="spacingAndGlyphs">dtl</text>
<path d="M4.0,1138V1544" stroke="#00a0a0" stroke-width="4" stroke-dasharray="12.5,6.5"/>
<path d="M21.9,1138V1544" stroke="#22aa22" stroke-width="4"/>
<path d="M26.2,1138V1544" stroke="#dd00dd" stroke-width="4"/>
<path d="M45,1138V1544" stroke="#c4c400" stroke-width="4" stroke-dasharray="12.5,6.5"/>
<path d="M48.1,1138V1544" stroke="#dd00dd" stroke-width="4" stroke-dasharray="12.5,6.5"/>
<path d="M73,1138V1544" stroke="#ff2222" stroke-width="4"/>
<path d="M96.2,1138V1544" stroke="#ff2222" stroke-width="4" stroke-dasharray="12.5,6.5"/>
<path d="M116.3,1138V1544" stroke="#2222ff" stroke-width="4"/>
<path d="M132.1,1138V1544" stroke="#2222ff" stroke-width="4" stroke-dasharray="12.5,6.5"/>
<path d="M140,1138V1544" stroke="#ff2222" stroke-width="4"/>
<path d="M202.1,1138V1544" stroke="#2222ff" stroke-width="4"/>
<path d="M235.5,1138V1544" stroke="#22aa22" stroke-width="4"/>
<path d="M251.6,1138V1544" stroke="#22aa22" stroke-width="4" stroke-dasharray="12.5,6.5"/>
<path d="M335.3,1138V1544" stroke="#22aa22" stroke-width="4"/>
<path d="M419,1138V1544" stroke="#22aa22" stroke-width="4"/>
<path d="M658.8,1138V1544" stroke="#c4c400" stroke-width="4"/>
<path d="M667.1,1138V1544" stroke="#2222ff" stroke-width="4"/>
<path d="M700.2,1138V1544" stroke="#dd00dd" stroke-width="4"/>
<path d="M932.7,1138V1544" stroke="#ff2222" stroke-width="4"/>
<path d="M1172.6,1138V1544" stroke="#dd00dd" stroke-width="4"/>
<path d="M1342.6,1138V1544" stroke="#2222ff" stroke-width="4"/>
<path d="M1383.3,1138V1544" stroke="#22aa22" stroke-width="4"/>
<path d="M1559,1138V1544" stroke="#dd00dd" stroke-width="4"/>
<path d="M1609.3,1138V1544" stroke="#c4c400" stroke-width="4"/>
<path d="M1703.6,1138V1544" stroke="#2222ff" stroke-width="4"/>
<path d="M1821.3,1138V1544" stroke="#00a0a0" stroke-width="4"/>
<path d="M1827.7,1138V1544" stroke="#c4c400" stroke-width="4"/>
<path d="M1865.6,1138V1544" stroke="#00a0a0" stroke-width="4" stroke-dasharray="12.5,6.5"/>
<path d="M1867.8,1138V1544" stroke="#dd00dd" stroke-width="4"/>
<path d="M1928,1138V1544" stroke="#c4c400" stroke-width="4" stroke-dasharray="12.5,6.5"/>
<path d="M1937.4,1138V1544" stroke="#ff2222" stroke-width="4" stroke-dasharray="12.5,6.5"/>
<path d="M1980.6,1138V1544" stroke="#dd00dd" stroke-width="4" stroke-dasharray="12.5,6.5"/>
<path d="M2032,1138V1544" stroke="#00a0a0" stroke-width="4"/>
<path d="M2055.6,1138V1544" stroke="#2222ff" stroke-width="4" stroke-dasharray="12.5,6.5"/>
<path d="M2098.4,1138V1544" stroke="#c4c400" stroke-width="4"/>
<path d="M2121.4,1138V1544" stroke="#ff2222" stroke-width="4"/>
<path d="M2157.8,1138V1544" stroke="#dd00dd" stroke-width="4"/>
<path d="M2196,1138V1544" stroke="#22aa22" stroke-width="4"/>
<text x="33" y="1200.6" font-size="32" fill="#666" letter-spacing="0.6">-50</text>
<text x="1156" y="1200.6" font-size="32" fill="#666" letter-spacing="0.6">-50</text>
<text x="2258" y="1200.6" font-size="32" fill="#666" letter-spacing="0.6">-50</text>
<text x="33" y="1248.9" font-size="32" fill="#666" letter-spacing="0.6">-100</text>
<text x="1156" y="1248.9" font-size="32" fill="#666" letter-spacing="0.6">-100</text>
<text x="2258" y="1248.9" font-size="32" fill="#666" letter-spacing="0.6">-100</text>
<text x="33" y="1297.2" font-size="32" fill="#666" letter-spacing="0.6">-150</text>
<text x="1156" y="1297.2" font-size="32" fill="#666" letter-spacing="0.6">-150</text>
<text x="2258" y="1297.2" font-size="32" fill="#666" letter-spacing="0.6">-150</text>
<text x="33" y="1345.5" font-size="32" fill="#666" letter-spacing="0.6">-200</text>
<text x="1156" y="1345.5" font-size="32" fill="#666" letter-spacing="0.6">-200</text>
<text x="2258" y="1345.5" font-size="32" fill="#666" letter-spacing="0.6">-200</text>
<text x="33" y="1393.8" font-size="32" fill="#666" letter-spacing="0.6">-250</text>
<text x="1156" y="1393.8" font-size="32" fill="#666" letter-spacing="0.6">-250</text>
<text x="2258" y="1393.8" font-size="32" fill="#666" letter-spacing="0.6">-250</text>
<text x="33" y="1442.1" font-size="32" fill="#666" letter-spacing="0.6">-300</text>
<text x="1156" y="1442.1" font-size="32" fill="#666" letter-spacing="0.6">-300</text>
<text x="2258" y="1442.1" font-size="32" fill="#666" letter-spacing="0.6">-300</text>
<text x="33" y="1490.4" font-size="32" fill="#666" letter-spacing="0.6">-350</text>
<text x="1156" y="1490.4" font-size="32" fill="#666" letter-spacing="0.6">-350</text>
<text x="2258" y="1490.4" font-size="32" fill="#666" letter-spacing="0.6">-350</text>
<text x="33" y="1538.7" font-size="32" fill="#666" letter-spacing="0.6">-400</text>
<text x="1156" y="1538.7" font-size="32" fill="#666" letter-spacing="0.6">-400</text>
<text x="2258" y="1538.7" font-size="32" fill="#666" letter-spacing="0.6">-400</text>
<text x="235" y="1508.6" font-size="28" fill="#666">1min</text>
<text x="1981" y="1509.7" font-size="28" fill="#666">1min</text>
<text x="27.5" y="1172.8" font-size="32" fill="#dd00dd">23</text>
<text x="23.2" y="1172.8" font-size="32" fill="#22aa22">13</text>
<text x="74.5" y="1172.8" font-size="32" fill="#ff2222">41</text>
<text x="116.8" y="1172.8" font-size="32" fill="#2222ff">43</text>
<text x="139.5" y="1172.8" font-size="32" fill="#ff2222">5</text>
<text x="202.2" y="1172.8" font-size="32" fill="#2222ff">-</text>
<text x="236.5" y="1172.8" font-size="32" fill="#22aa22">5</text>
<text x="253.4" y="1172.8" font-size="32" fill="#22aa22">5</text>
<text x="336.3" y="1172.8" font-size="32" fill="#22aa22">8</text>
<text x="420" y="1172.8" font-size="32" fill="#22aa22">11</text>
<text x="660.3" y="1172.8" font-size="32" fill="#c4c400">11</text>
<text x="667.8" y="1172.8" font-size="32" fill="#2222ff">6</text>
<text x="703.5" y="1172.8" font-size="32" fill="#00a0a0">12</text>
<text x="701" y="1172.8" font-size="32" fill="#dd00dd">5</text>
<text x="934" y="1172.8" font-size="32" fill="#ff2222">10</text>
<text x="1173.8" y="1172.8" font-size="32" fill="#dd00dd">8</text>
<text x="1343.6" y="1172.8" font-size="32" fill="#2222ff">5</text>
<text x="1383.8" y="1172.8" font-size="32" fill="#22aa22">4</text>
<text x="1560.5" y="1172.8" font-size="32" fill="#dd00dd">11</text>
<text x="1610.8" y="1172.8" font-size="32" fill="#c4c400">7</text>
<text x="1705" y="1172.8" font-size="32" fill="#00a0a0">71</text>
<text x="1705" y="1172.8" font-size="32" fill="#2222ff">7</text>
<text x="1822" y="1172.8" font-size="32" fill="#00a0a0">-</text>
<text x="1829" y="1172.8" font-size="32" fill="#c4c400">2</text>
<text x="1868.2" y="1172.8" font-size="32" fill="#dd00dd">4</text>
<text x="2032.8" y="1172.8" font-size="32" fill="#00a0a0">4</text>
<text x="2099.4" y="1172.8" font-size="32" fill="#c4c400">-</text>
<text x="2123.4" y="1172.8" font-size="32" fill="#ff2222">10</text>
<text x="2159" y="1172.8" font-size="32" fill="#dd00dd">1</text>
<text x="2196.5" y="1172.8" font-size="32" fill="#22aa22">3</text>
<polyline points="45.7,1160.0 94.0,1171.4 128.5,1180.0 165.6,1184.3 200.0,1185.7 257.0,1181.4 342.7,1181.4 428.4,1181.4 500.0,1185.7 600.0,1187.0 657.0,1188.5 694.3,1198.5 714.3,1194.3 771.3,1190.0 857.0,1188.5 931.3,1185.7 1000.0,1192.8 1051.2,1197.0 1114.0,1191.4 1171.2,1185.7 1240.0,1178.5 1314.2,1172.8 1400.0,1170.0 1485.6,1172.8 1571.3,1168.6 1608.5,1162.8 1628.4,1171.4 1657.0,1180.0 1708.4,1192.8 1728.4,1187.0 1785.5,1182.8 1844.6,1173.5 1889.2,1175.0 1922.0,1175.0" stroke="#c4c400" stroke-width="5.8" fill="none" stroke-linejoin="round"/>
<polyline points="97.0,1214.2 122.8,1225.7 140.0,1228.5 165.6,1240.0 194.2,1241.4 228.5,1237.0 257.0,1241.4 328.4,1244.2 354.0,1242.8 371.3,1245.7 428.4,1245.7 485.5,1248.5 557.0,1252.8 640.0,1255.7 700.0,1255.7 737.0,1241.4 814.2,1232.8 871.3,1224.2 932.7,1218.5 971.3,1232.8 1028.4,1237.0 1085.5,1231.4 1171.2,1224.2 1240.0,1227.0 1280.0,1227.0 1342.8,1222.8 1400.0,1220.0 1485.6,1230.0 1522.7,1231.4 1608.5,1221.4 1657.0,1230.0 1702.7,1232.8 1740.0,1221.0 1790.0,1206.7 1802.3,1198.3 1829.6,1190.5 1860.0,1193.0 1866.6,1184.7 1873.0,1181.4 1900.0,1181.4 1936.8,1188.4" stroke="#ff2222" stroke-width="5.8" fill="none" stroke-linejoin="round"/>
<polyline points="47.0,1180.0 74.3,1194.3 94.2,1200.0 120.0,1207.0 160.0,1210.0 234.0,1205.7 342.7,1207.0 422.7,1208.5 485.5,1204.2 557.0,1200.0 657.0,1201.4 700.0,1204.2 728.5,1195.7 800.0,1190.0 885.6,1184.3 942.7,1181.4 1114.0,1184.3 1171.2,1195.7 1199.7,1201.4 1242.8,1201.4 1342.8,1187.0 1428.5,1181.4 1485.6,1177.0 1559.8,1172.8 1580.0,1178.5 1608.5,1180.0 1657.0,1191.4 1704.0,1208.5 1728.4,1202.8 1771.3,1200.0 1865.4,1206.3 1904.0,1210.7 1948.7,1212.2 1978.5,1219.7" stroke="#dd00dd" stroke-width="5.8" fill="none" stroke-linejoin="round"/>
<polyline points="251.3,1331.3 257.0,1341.3 285.6,1347.0 328.4,1354.2 342.7,1360.0 414.0,1371.3 428.4,1375.6 471.2,1384.2 499.8,1387.0 557.0,1384.2 640.0,1375.6 700.0,1370.0 737.0,1351.3 800.0,1345.6 914.2,1338.5 1028.4,1350.0 1114.0,1348.5 1200.0,1348.5 1285.6,1341.3 1342.8,1331.3 1382.8,1322.8 1428.5,1332.8 1500.0,1345.6 1560.0,1351.3 1605.6,1348.5 1657.0,1360.0 1704.0,1371.3 1742.7,1362.8 1800.0,1362.5 1835.7,1365.4 1868.4,1375.8 1919.0,1386.2 1978.5,1401.1 2044.0,1417.5 2097.5,1442.8 2127.2,1465.0 2186.7,1497.8 2231.3,1509.7 2304.2,1521.6" stroke="#22aa22" stroke-width="5.8" fill="none" stroke-linejoin="round"/>
<polyline points="131.4,1240.0 137.0,1245.7 171.3,1260.0 194.2,1267.0 217.0,1271.4 285.6,1274.2 328.4,1281.4 399.8,1287.0 442.7,1288.5 508.3,1297.0 557.0,1300.0 605.4,1301.4 662.8,1302.8 700.0,1307.0 737.0,1295.6 800.0,1292.8 914.2,1285.6 1028.4,1284.2 1128.4,1271.4 1257.0,1268.5 1308.5,1261.4 1340.0,1262.8 1357.0,1267.0 1400.0,1261.4 1428.5,1265.7 1451.3,1262.8 1500.0,1268.5 1557.0,1274.2 1608.5,1275.7 1642.7,1288.5 1702.7,1311.4 1785.5,1300.0 1859.5,1288.0 1904.0,1279.2 1978.5,1273.2 2038.0,1274.7 2050.0,1280.6" stroke="#2222ff" stroke-width="5.8" fill="none" stroke-linejoin="round"/>
</svg></div>
<div style="position:absolute;left:2514px;top:1373px;width:40px;height:40px;background:#dcdcdc;border-radius:5px"></div>
<div style="position:absolute;left:2514px;top:1431px;width:40px;height:43px;background:#dcdcdc;border-radius:5px"></div>
<div style="position:absolute;left:2514px;top:1492px;width:40px;height:43px;background:#dcdcdc;border-radius:5px"></div>
<div style="position:absolute;left:0;top:0;width:2533px;height:1px;background:#1a1a1a"></div>
</body></html>
